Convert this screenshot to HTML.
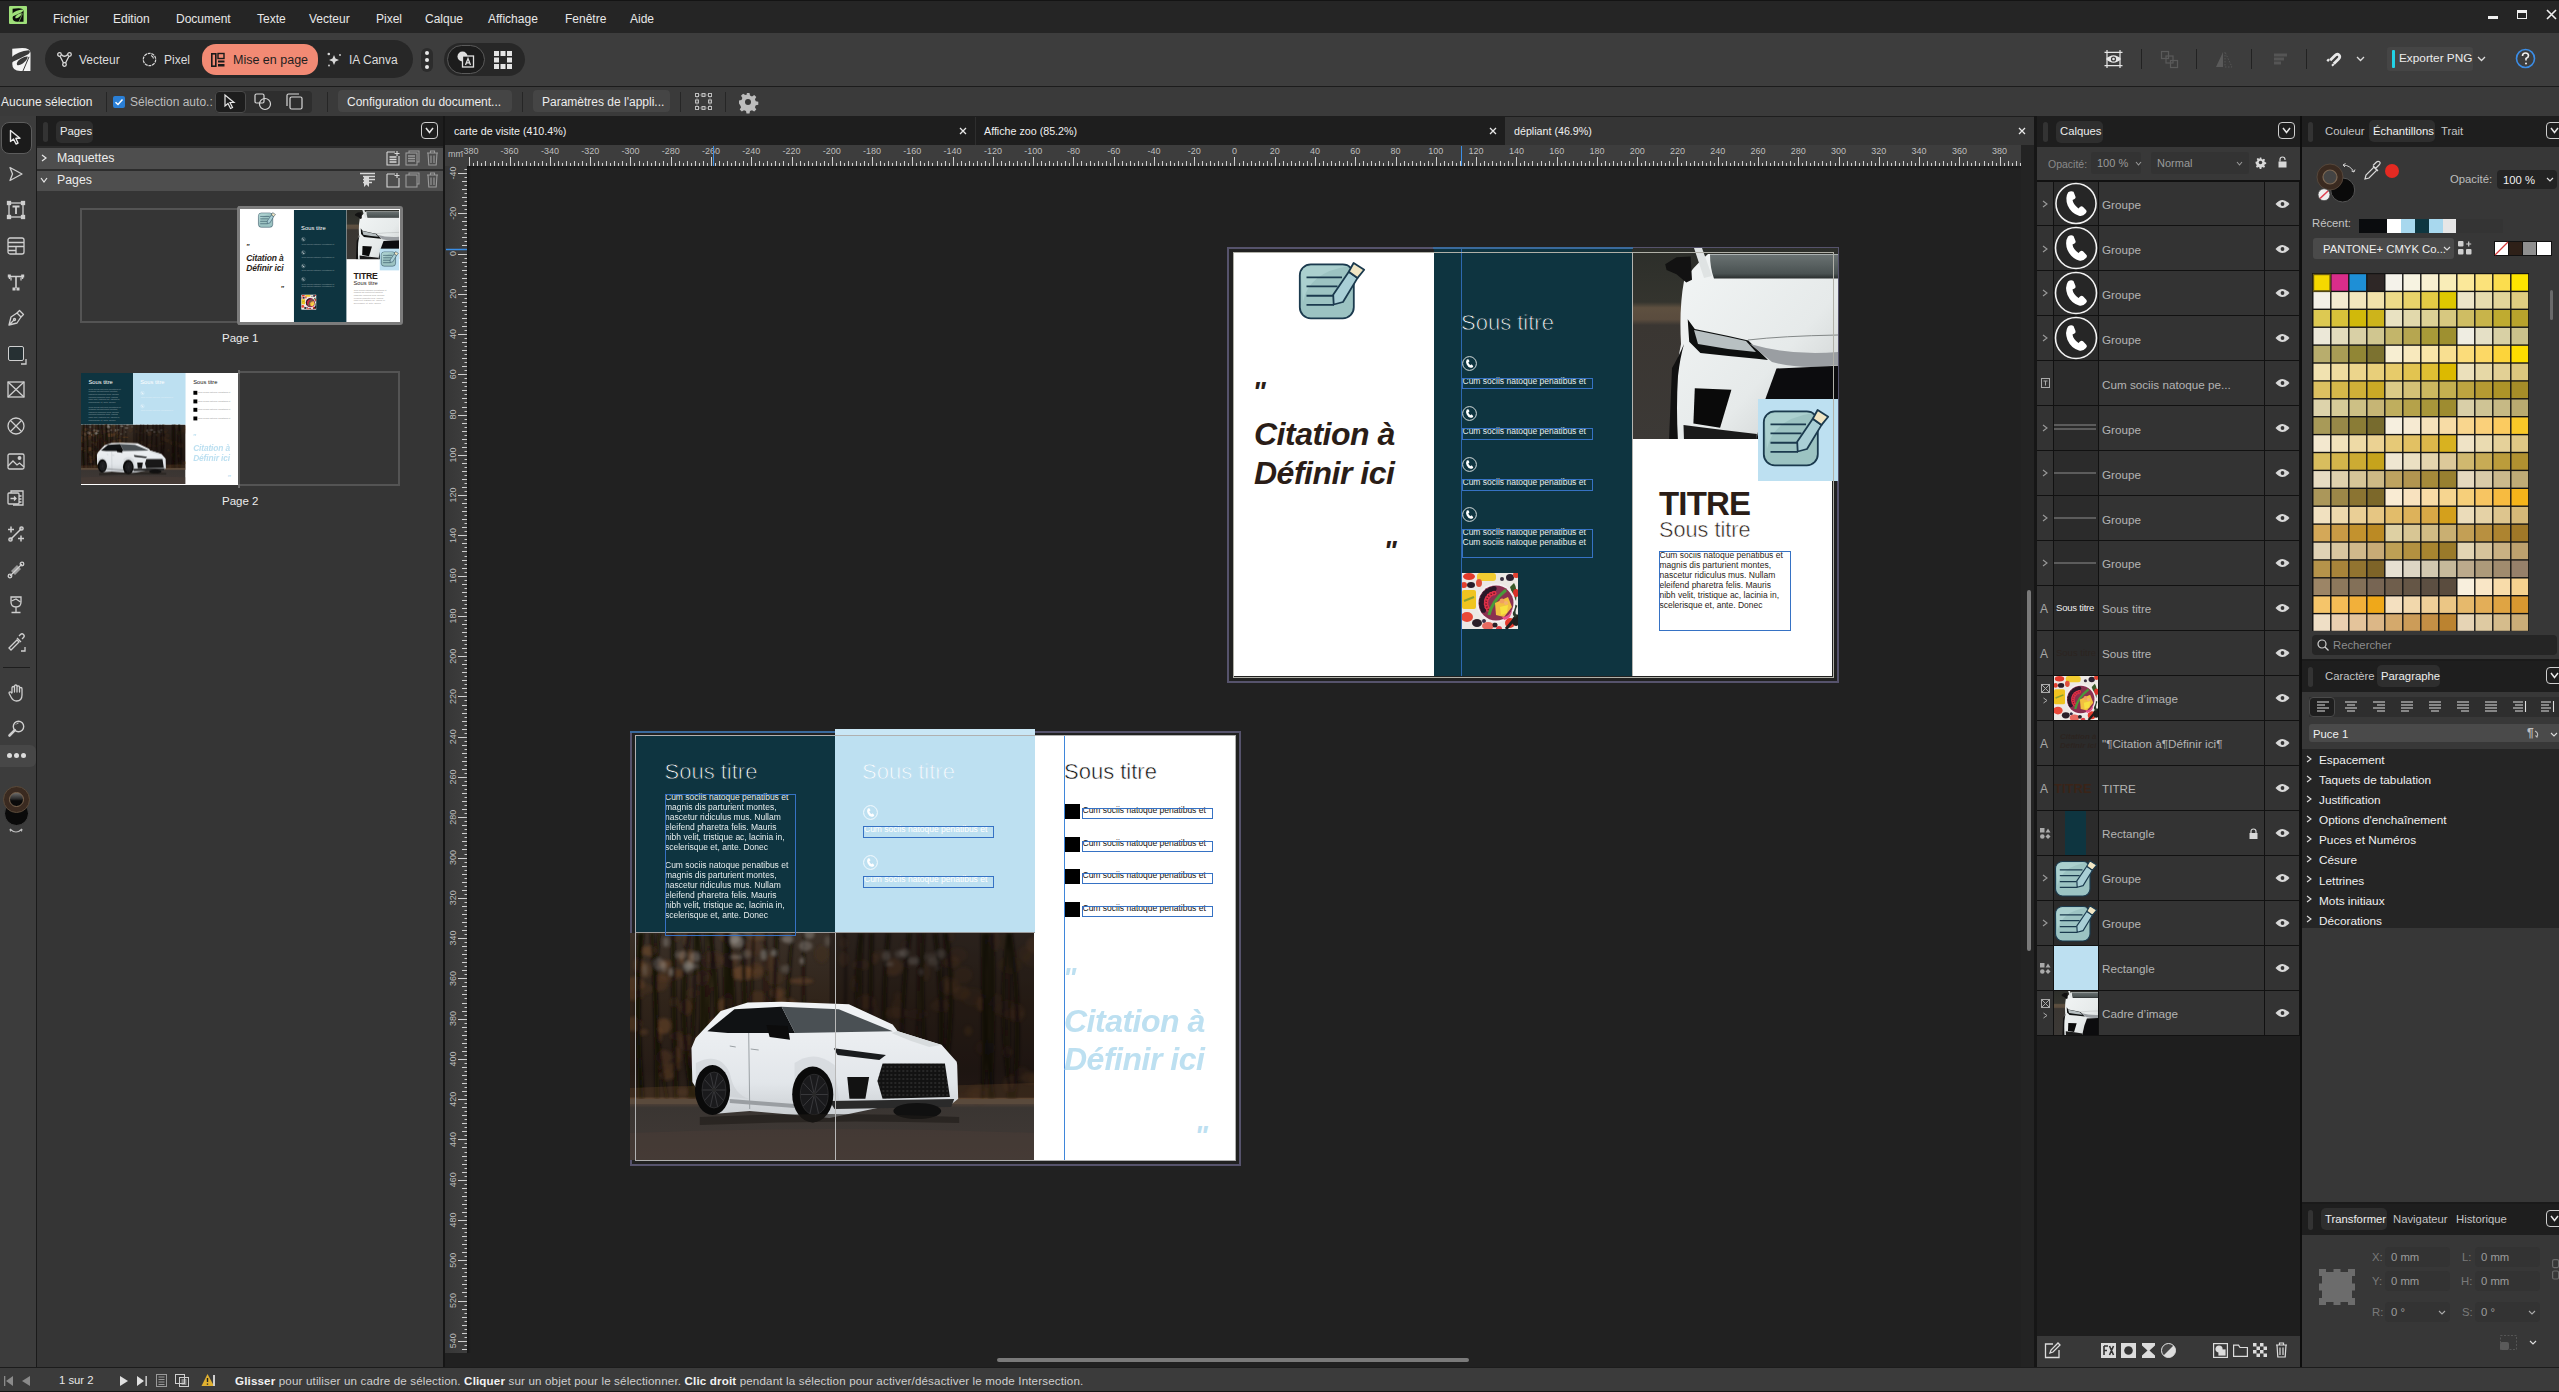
<!DOCTYPE html>
<html><head><meta charset="utf-8">
<style>
*{box-sizing:border-box;margin:0;padding:0}
html,body{width:2559px;height:1392px;overflow:hidden;background:#212121;font-family:"Liberation Sans",sans-serif;color:#e6e6e6}
.a{position:absolute}
.t{position:absolute;white-space:nowrap;line-height:1}
svg{position:absolute;overflow:visible}
.th .sm{opacity:.5}
.th .st{-webkit-text-stroke:0 !important}
</style></head><body>

<!-- title bar -->
<div class="a" style="left:0;top:0;width:2559px;height:33px;background:#252525"></div>
<!-- toolbar -->
<div class="a" style="left:0;top:33px;width:2559px;height:53px;background:#3d3d3d"></div>
<div class="a" style="left:0;top:86px;width:2559px;height:1px;background:#1c1c1c"></div>
<!-- context bar -->
<div class="a" style="left:0;top:87px;width:2559px;height:29px;background:#3a3a3a"></div>
<!-- left tool strip -->
<div class="a" style="left:0;top:116px;width:36px;height:1252px;background:#3c3c3c"></div>
<div class="a" style="left:36px;top:116px;width:1px;height:1252px;background:#1a1a1a"></div>
<!-- pages panel -->
<div class="a" style="left:37px;top:116px;width:406px;height:1252px;background:#353535"></div>
<div class="a" style="left:37px;top:116px;width:406px;height:30px;background:#1e1e1e"></div>
<div class="a" style="left:443px;top:116px;width:2px;height:1252px;background:#161616"></div>
<!-- canvas -->
<div class="a" style="left:445px;top:116px;width:1589px;height:1252px;background:#212121"></div>
<div class="a" style="left:2034px;top:116px;width:3px;height:1252px;background:#161616"></div>
<!-- layers panel -->
<div class="a" style="left:2037px;top:116px;width:263px;height:1252px;background:#1e1e1e"></div>
<div class="a" style="left:2300px;top:116px;width:2px;height:1252px;background:#0e0e0e"></div>
<!-- right panel -->
<div class="a" style="left:2302px;top:116px;width:257px;height:1252px;background:#373737"></div>
<!-- status bar -->
<div class="a" style="left:0;top:1368px;width:2559px;height:24px;background:#373737"></div>

<div class="a" style="left:0;top:0;width:2559px;height:1px;background:#141414"></div>
<!-- ===== TITLE BAR ===== -->
<div class="a" style="left:9px;top:6px;width:18px;height:18px;background:#9fe07a;border-radius:1px"></div>
<svg style="left:9px;top:6px" width="18" height="18" viewBox="0 0 18 18"><g transform="translate(3.6 2.2) scale(0.6 0.59)"><path d="M0 0.8 L10 0 Q18 0 18.3 5 L18.2 23 L8 23 Q0 23 0 16 Q0 12 3 10 L0 11Z" fill="#0a0a0a"/><path d="M-1 9.5 Q6 3.2 16.5 2.3 Q19 3.5 16 6.3 Q8 10.5 -1 14.5Z" fill="#9fe07a"/><path d="M4.8 17 Q3.5 14 8.5 10.8 Q13 8.2 15.5 8.6 Q15 12.5 10.5 15.5 Q7 17.8 4.8 17Z" fill="#9fe07a"/><path d="M10.5 23 L16.8 8.8" stroke="#9fe07a" stroke-width="1"/></g></svg>
<div class="t" style="left:53px;top:13px;font-size:12px;color:#e8e8e8">Fichier</div>
<div class="t" style="left:113px;top:13px;font-size:12px;color:#e8e8e8">Edition</div>
<div class="t" style="left:176px;top:13px;font-size:12px;color:#e8e8e8">Document</div>
<div class="t" style="left:257px;top:13px;font-size:12px;color:#e8e8e8">Texte</div>
<div class="t" style="left:309px;top:13px;font-size:12px;color:#e8e8e8">Vecteur</div>
<div class="t" style="left:376px;top:13px;font-size:12px;color:#e8e8e8">Pixel</div>
<div class="t" style="left:425px;top:13px;font-size:12px;color:#e8e8e8">Calque</div>
<div class="t" style="left:488px;top:13px;font-size:12px;color:#e8e8e8">Affichage</div>
<div class="t" style="left:565px;top:13px;font-size:12px;color:#e8e8e8">Fenêtre</div>
<div class="t" style="left:630px;top:13px;font-size:12px;color:#e8e8e8">Aide</div>
<div class="a" style="left:2488px;top:16px;width:10px;height:3px;background:#f0f0f0"></div>
<div class="a" style="left:2517px;top:10px;width:10px;height:9px;border:1.5px solid #f0f0f0;border-top-width:3px"></div>
<svg style="left:2546px;top:9px" width="11" height="11" viewBox="0 0 11 11"><path d="M1 1L10 10M10 1L1 10" stroke="#f0f0f0" stroke-width="1.6"/></svg>

<!-- ===== TOOLBAR ===== -->
<svg style="left:12px;top:48px" width="19" height="23" viewBox="0 0 18.5 23"><path d="M0 0.8 L10 0 Q18 0 18.3 5 L18.2 23 L8 23 Q0 23 0 16 Q0 12 3 10 L0 11Z" fill="#f4f4f4"/><path d="M-1 9.5 Q6 3.2 16.5 2.3 Q19 3.5 16 6.3 Q8 10.5 -1 14.5Z" fill="#3a3a3a"/><path d="M4.8 17 Q3.5 14 8.5 10.8 Q13 8.2 15.5 8.6 Q15 12.5 10.5 15.5 Q7 17.8 4.8 17Z" fill="#3a3a3a"/><path d="M10.5 23.5 L16.8 8.8" stroke="#3a3a3a" stroke-width="1"/></svg>
<div class="a" style="left:45px;top:40px;width:368px;height:38px;background:#272727;border-radius:19px"></div>
<svg style="left:57px;top:52px" width="15" height="15" viewBox="0 0 15 15" fill="none" stroke="#d8d8d8" stroke-width="1.3"><circle cx="2.5" cy="2.5" r="1.8"/><circle cx="12.5" cy="2.5" r="1.8"/><circle cx="7.5" cy="12.5" r="1.8"/><path d="M3 4.3L6.5 11M12 4.3L8.5 11M4.3 2.5Q7.5 6 10.7 2.5"/></svg>
<div class="t" style="left:79px;top:54px;font-size:12px;color:#dcdcdc">Vecteur</div>
<svg style="left:142px;top:52px" width="15" height="15" viewBox="0 0 15 15" fill="none" stroke="#d8d8d8" stroke-width="1.2"><circle cx="7.5" cy="7.5" r="6.2" stroke-dasharray="3 0.8"/><path d="M9 3.5 A4 4 0 0 1 11.5 6.5"/></svg>
<div class="t" style="left:164px;top:54px;font-size:12px;color:#dcdcdc">Pixel</div>
<div class="a" style="left:202px;top:44px;width:116px;height:31px;background:#f28a74;border-radius:14px"></div>
<svg style="left:211px;top:53px" width="14" height="14" viewBox="0 0 14 14"><rect x="0.8" y="0.8" width="4" height="12.4" fill="none" stroke="#1a1a1a" stroke-width="1.6"/><rect x="7" y="0.5" width="6" height="5" fill="none" stroke="#1a1a1a" stroke-width="1.4"/><rect x="7" y="7.5" width="6.5" height="2" fill="#1a1a1a"/><rect x="7" y="11" width="6.5" height="2.5" fill="#1a1a1a"/></svg>
<div class="t" style="left:233px;top:54px;font-size:12.5px;color:#1e1e1e">Mise en page</div>
<svg style="left:327px;top:52px" width="15" height="15" viewBox="0 0 15 15" fill="#d8d8d8"><path d="M7 3 L8.5 6.5 L12 8 L8.5 9.5 L7 13 L5.5 9.5 L2 8 L5.5 6.5Z"/><circle cx="1.8" cy="2" r="1.3"/><circle cx="13" cy="3" r="0.9"/><circle cx="2" cy="13.5" r="0.9"/></svg>
<div class="t" style="left:349px;top:54px;font-size:12px;color:#dcdcdc">IA Canva</div>
<div class="a" style="left:421px;top:48px;width:12px;height:24px;background:#2c2c2c;border-radius:6px"></div>
<div class="a" style="left:425px;top:51px;width:4px;height:4px;background:#e8e8e8;border-radius:2px"></div>
<div class="a" style="left:425px;top:58px;width:4px;height:4px;background:#e8e8e8;border-radius:2px"></div>
<div class="a" style="left:425px;top:65px;width:4px;height:4px;background:#e8e8e8;border-radius:2px"></div>
<div class="a" style="left:444px;top:43px;width:81px;height:33px;background:#272727;border-radius:17px"></div>
<div class="a" style="left:447px;top:45px;width:38px;height:29px;background:#1c1c1c;border:1px solid #5a5a5a;border-radius:15px"></div>
<svg style="left:456px;top:50px" width="20" height="20" viewBox="0 0 20 20"><circle cx="6.5" cy="6.5" r="5" fill="#e0e0e0"/><rect x="6.5" y="6" width="11" height="11" fill="#1c1c1c" stroke="#e0e0e0" stroke-width="1.3"/><path d="M9.5 15 L12 8.5 L14.5 15 M10.5 12.8 L13.5 12.8" fill="none" stroke="#e0e0e0" stroke-width="1.3"/></svg>
<svg style="left:494px;top:51px" width="18" height="18" viewBox="0 0 18 18" fill="#e4e4e4"><rect x="0" y="0" width="5" height="5"/><rect x="6.5" y="0" width="5" height="5"/><rect x="13" y="0" width="5" height="5"/><rect x="0" y="6.5" width="5" height="5"/><rect x="13" y="6.5" width="5" height="5"/><rect x="0" y="13" width="5" height="5"/><rect x="6.5" y="13" width="5" height="5"/><rect x="13" y="13" width="5" height="5"/></svg>

<!-- right toolbar -->
<svg style="left:2104px;top:50px" width="19" height="18" viewBox="0 0 19 18" fill="none" stroke="#e6e6e6" stroke-width="1.2"><path d="M0.5 2.3H18.5M0.5 15.7H18.5M3 0V18M16 0V18"/><path d="M2 9 Q9.5 1.5 17 9 Q9.5 16.5 2 9Z" fill="#e6e6e6" stroke="none"/><circle cx="9.5" cy="9" r="2.6" fill="#3a3a3a" stroke="none"/><circle cx="9.5" cy="9" r="1.3" fill="#e6e6e6" stroke="none"/></svg>
<div class="a" style="left:2141px;top:49px;width:1px;height:20px;background:#222"></div>
<svg style="left:2161px;top:51px" width="17" height="17" viewBox="0 0 17 17" fill="none" stroke="#5a5a5a" stroke-width="1.2"><rect x="0.5" y="0.5" width="7" height="7"/><rect x="5" y="5" width="7" height="7"/><rect x="9.5" y="9.5" width="7" height="7"/></svg>
<div class="a" style="left:2196px;top:49px;width:1px;height:20px;background:#222"></div>
<svg style="left:2215px;top:51px" width="18" height="17" viewBox="0 0 18 17"><path d="M8 1 L8 16 L1 16Z" fill="#5a5a5a"/><path d="M10 1 L10 16 L17 16Z" fill="none" stroke="#555" stroke-dasharray="1.5 1.5"/></svg>
<div class="a" style="left:2251px;top:49px;width:1px;height:20px;background:#222"></div>
<svg style="left:2274px;top:53px" width="13" height="12" viewBox="0 0 13 12" fill="#555"><rect x="0" y="0.5" width="13" height="3"/><rect x="0" y="4.5" width="10" height="3"/><rect x="0" y="8.5" width="7" height="3"/></svg>
<div class="a" style="left:2306px;top:49px;width:1px;height:20px;background:#222"></div>
<svg style="left:2326px;top:51px" width="16" height="15" viewBox="0 0 16 15" fill="none" stroke="#e8e8e8" stroke-width="2.8" stroke-linecap="butt"><path d="M4.2 9.2 L9 4.4 Q11.2 2.2 13 4 Q14.8 5.8 12.6 8 L7.8 12.8"/><path d="M1.3 8.3 L3 10 M6.2 13.2 L7.6 14.6" stroke-width="2.6"/></svg>
<svg style="left:2356px;top:56px" width="9" height="6" viewBox="0 0 9 6" fill="none" stroke="#ddd" stroke-width="1.3"><path d="M1 1L4.5 4.5L8 1"/></svg>
<div class="a" style="left:2387px;top:47px;width:86px;height:24px;background:#454545;border-radius:3px"></div>
<div class="a" style="left:2392px;top:50px;width:3px;height:18px;background:#22d3e6;border-radius:1px"></div>
<div class="t" style="left:2399px;top:53px;font-size:11.8px;color:#ececec">Exporter PNG</div>
<svg style="left:2477px;top:56px" width="9" height="6" viewBox="0 0 9 6" fill="none" stroke="#ddd" stroke-width="1.3"><path d="M1 1L4.5 4.5L8 1"/></svg>
<svg style="left:2515px;top:48px" width="21" height="21" viewBox="0 0 21 21"><circle cx="10.5" cy="10.5" r="9" fill="none" stroke="#3b8de6" stroke-width="1.6"/><path d="M7.5 8 Q7.5 5 10.5 5 Q13.5 5 13.5 7.8 Q13.5 9.5 11 10.5 L11 12.5" fill="none" stroke="#f0f0f0" stroke-width="1.6"/><circle cx="11" cy="15.5" r="1" fill="#f0f0f0"/></svg>

<!-- ===== CONTEXT BAR ===== -->
<div class="t" style="left:1px;top:96px;font-size:12px;color:#ececec">Aucune sélection</div>
<div class="a" style="left:106px;top:92px;width:1px;height:20px;background:#262626"></div>
<div class="a" style="left:113px;top:96px;width:12px;height:12px;background:#2a7fd6;border-radius:2px"></div>
<svg style="left:113px;top:96px" width="12" height="12" viewBox="0 0 12 12"><path d="M2.5 6.2L5 8.5L9.5 3.5" fill="none" stroke="#fff" stroke-width="1.5"/></svg>
<div class="t" style="left:130px;top:96px;font-size:12px;color:#bdbdbd">Sélection auto.:</div>
<div class="a" style="left:215px;top:91px;width:97px;height:22px;background:#2e2e2e;border-radius:4px"></div>
<div class="a" style="left:215px;top:91px;width:31px;height:22px;background:#1d1d1d;border:1px solid #4a4a4a;border-radius:4px"></div>
<svg style="left:224px;top:94px" width="13" height="16" viewBox="0 0 13 16" fill="none" stroke="#e8e8e8" stroke-width="1.2"><path d="M1 1 L1 12 L4 9.5 L6.5 14.5 L8.5 13.5 L6 8.5 L10 8.5Z"/></svg>
<svg style="left:254px;top:93px" width="18" height="18" viewBox="0 0 18 18" fill="none" stroke="#d8d8d8" stroke-width="1.2"><rect x="1" y="1" width="9" height="9" rx="1.5"/><circle cx="11" cy="11" r="5.5"/></svg>
<svg style="left:286px;top:93px" width="18" height="18" viewBox="0 0 18 18" fill="none" stroke="#d8d8d8" stroke-width="1.2"><rect x="4" y="4" width="12" height="12" rx="1.5"/><path d="M1 13 V2.5 Q1 1 2.5 1 H13"/></svg>
<div class="a" style="left:327px;top:92px;width:1px;height:20px;background:#262626"></div>
<div class="a" style="left:338px;top:90px;width:174px;height:22px;background:#454545;border-radius:4px"></div>
<div class="t" style="left:347px;top:96px;font-size:12px;color:#ececec">Configuration du document...</div>
<div class="a" style="left:522px;top:92px;width:1px;height:20px;background:#262626"></div>
<div class="a" style="left:533px;top:90px;width:137px;height:22px;background:#454545;border-radius:4px"></div>
<div class="t" style="left:542px;top:96px;font-size:12px;color:#ececec">Paramètres de l'appli...</div>
<div class="a" style="left:680px;top:92px;width:1px;height:20px;background:#262626"></div>
<svg style="left:695px;top:93px" width="17" height="17" viewBox="0 0 17 17" fill="none" stroke="#bdbdbd" stroke-width="1"><rect x="0.5" y="0.5" width="3" height="3"/><rect x="7" y="0.5" width="3" height="3"/><rect x="13.5" y="0.5" width="3" height="3"/><rect x="0.5" y="7" width="3" height="3"/><rect x="13.5" y="7" width="3" height="3"/><rect x="0.5" y="13.5" width="3" height="3"/><rect x="7" y="13.5" width="3" height="3"/><rect x="13.5" y="13.5" width="3" height="3"/><path d="M2 3.5V13.5M15 3.5V13.5M3.5 2H13.5M3.5 15H13.5" stroke-dasharray="1 1"/></svg>
<div class="a" style="left:725px;top:92px;width:1px;height:20px;background:#262626"></div>
<svg style="left:738px;top:92px" width="20" height="20" viewBox="0 0 20 20"><path d="M8.5 1h3l.5 2.5 2 .9 2.2-1.4 2.1 2.1-1.4 2.2.9 2 2.5.5v3l-2.5.5-.9 2 1.4 2.2-2.1 2.1-2.2-1.4-2 .9-.5 2.5h-3l-.5-2.5-2-.9-2.2 1.4-2.1-2.1 1.4-2.2-.9-2L1 11.5v-3l2.5-.5.9-2L3 3.8 5.1 1.7l2.2 1.4 2-.9z" fill="#bdbdbd"/><circle cx="10" cy="10" r="3" fill="#373737"/></svg>

<!-- ===== LEFT TOOLS ===== -->
<div class="a" style="left:1px;top:122px;width:31px;height:32px;background:#1b1b1b;border:1px solid #5c5c5c;border-radius:8px"></div>
<svg style="left:9px;top:129px" width="14" height="17" viewBox="0 0 14 17" fill="none" stroke="#e8e8e8" stroke-width="1.4" stroke-linejoin="round"><path d="M1.5 1.5 L1.5 12.5 L4.5 10 L7 15 L9 14 L6.8 9.3 L11 9.3Z"/></svg>
<svg style="left:8px;top:166px" width="16" height="16" viewBox="0 0 16 16" fill="none" stroke="#cfcfcf" stroke-width="1.3" stroke-linejoin="round"><path d="M2 1.5 L14 8 L2 14.5 L4.5 8Z"/></svg>
<svg style="left:7px;top:201px" width="18" height="18" viewBox="0 0 18 18" fill="none" stroke="#cfcfcf" stroke-width="1.3"><rect x="2" y="2" width="14" height="14"/><path d="M5.5 5.5H12.5M9 5.5V13" stroke-width="1.8"/><rect x="0.5" y="0.5" width="3" height="3" fill="#cfcfcf"/><rect x="14.5" y="0.5" width="3" height="3" fill="#cfcfcf"/><rect x="0.5" y="14.5" width="3" height="3" fill="#cfcfcf"/><rect x="14.5" y="14.5" width="3" height="3" fill="#cfcfcf"/></svg>
<svg style="left:7px;top:237px" width="18" height="18" viewBox="0 0 18 18" fill="none" stroke="#cfcfcf" stroke-width="1.3"><rect x="1" y="1" width="16" height="16" rx="2"/><path d="M1 5.5H17M1 9.5H17M1 13.5H9M9 9.5V17"/></svg>
<svg style="left:7px;top:273px" width="18" height="18" viewBox="0 0 18 18" fill="none" stroke="#cfcfcf" stroke-width="1.6"><path d="M2.5 3.5H15.5M9 3.5V15"/><path d="M2.5 2V6M15.5 2V6" stroke-width="1.4"/><rect x="0.8" y="1.5" width="3" height="3" fill="#cfcfcf" stroke="none"/><rect x="14.2" y="1.5" width="3" height="3" fill="#cfcfcf" stroke="none"/><rect x="5.5" y="14.5" width="3" height="3" fill="#cfcfcf" stroke="none"/><rect x="9.5" y="14.5" width="3" height="3" fill="#cfcfcf" stroke="none"/><path d="M4 4.5V7.5M14 4.5V7.5" stroke-width="1.2"/></svg>
<svg style="left:7px;top:309px" width="18" height="18" viewBox="0 0 18 18" fill="none" stroke="#cfcfcf" stroke-width="1.3" stroke-linejoin="round"><path d="M2 16 L4 8 L10 4 L14 8 L10 14Z M2 16 L7 11"/><path d="M10 4 L12.5 1.5 L16.5 5.5 L14 8"/><circle cx="7.5" cy="10.5" r="1"/></svg>
<div class="a" style="left:8px;top:346px;width:16px;height:15px;background:#263033;border:1.5px solid #cfcfcf;border-radius:2px"></div>
<svg style="left:20px;top:358px" width="7" height="7" viewBox="0 0 7 7" fill="none" stroke="#cfcfcf" stroke-width="1.3"><path d="M6 1V6H1"/></svg>
<svg style="left:7px;top:381px" width="18" height="17" viewBox="0 0 18 17" fill="none" stroke="#cfcfcf" stroke-width="1.3"><rect x="1" y="1" width="16" height="15"/><path d="M1 1L17 16M17 1L1 16"/></svg>
<svg style="left:7px;top:417px" width="18" height="18" viewBox="0 0 18 18" fill="none" stroke="#cfcfcf" stroke-width="1.3"><circle cx="9" cy="9" r="8"/><path d="M3.5 3.5L14.5 14.5M14.5 3.5L3.5 14.5"/></svg>
<svg style="left:7px;top:453px" width="18" height="17" viewBox="0 0 18 17" fill="none" stroke="#cfcfcf" stroke-width="1.3"><rect x="1" y="1" width="16" height="15" rx="1.5"/><path d="M1 13 L6 8 L10 12 L12.5 10 L17 14"/><circle cx="12.5" cy="5" r="1.3" fill="#cfcfcf"/></svg>
<svg style="left:7px;top:489px" width="18" height="18" viewBox="0 0 18 18" fill="none" stroke="#cfcfcf" stroke-width="1.3"><path d="M4 4 V2 H16 V16 H6"/><rect x="1" y="4" width="11" height="11" rx="1"/><path d="M3.5 9.5H8.5M7 7.5L9 9.5L7 11.5M12 7H14.5M12 10H14.5M12 13H14.5"/></svg>
<svg style="left:7px;top:525px" width="18" height="18" viewBox="0 0 18 18" fill="none" stroke="#cfcfcf" stroke-width="1.5"><path d="M1 4.5H7M4 1.5V7.5M11 13.5H17M14 10.5V16.5M3.5 14.5L14.5 3.5"/><circle cx="3.5" cy="14.5" r="1.6"/><circle cx="14.5" cy="3.5" r="1.6"/></svg>
<svg style="left:7px;top:561px" width="18" height="18" viewBox="0 0 18 18"><path d="M4 10 L10 4 L14 8 L8 14Z" fill="#9a9a9a"/><path d="M3 15L15 3" stroke="#cfcfcf" stroke-width="1.3"/><circle cx="3" cy="15" r="1.8" fill="none" stroke="#cfcfcf" stroke-width="1.3"/><circle cx="15" cy="3" r="1.8" fill="none" stroke="#cfcfcf" stroke-width="1.3"/></svg>
<svg style="left:8px;top:596px" width="16" height="18" viewBox="0 0 16 18" fill="none" stroke="#cfcfcf" stroke-width="1.3"><path d="M3 1 H13 V6 Q13 11 8 11 Q3 11 3 6Z M8 11 V16.5 M3.5 16.5 H12.5"/><path d="M3.5 5 L8 3 L12.5 6" /></svg>
<svg style="left:7px;top:632px" width="20" height="20" viewBox="0 0 20 20" fill="none" stroke="#cfcfcf" stroke-width="1.3"><path d="M2 16 L10 8 L12 10 L4 18 Z"/><path d="M10 6 L14 10 M12 4 L13.5 2.5 Q15 1 16.5 2.5 Q18 4 16.5 5.5 L15 7"/><path d="M18 15 V19 H14" /></svg>
<div class="a" style="left:3px;top:667px;width:27px;height:1px;background:#1e1e1e"></div>
<svg style="left:8px;top:684px" width="17" height="18" viewBox="0 0 17 18" fill="none" stroke="#cfcfcf" stroke-width="1.3" stroke-linejoin="round"><path d="M4 9 V4 Q4 2.5 5.3 2.5 Q6.5 2.5 6.5 4 V8 V2.5 Q6.5 1 7.8 1 Q9 1 9 2.5 V8 V3 Q9 1.8 10.3 1.8 Q11.5 1.8 11.5 3 V8 V4.5 Q11.5 3.5 12.8 3.5 Q14 3.5 14 4.8 V11 Q14 17 8.5 17 Q5 17 3 13 L1.2 9.5 Q0.8 8 2 7.8 Q3 7.6 4 9.5"/></svg>
<svg style="left:8px;top:720px" width="17" height="17" viewBox="0 0 17 17" fill="none" stroke="#cfcfcf" stroke-width="1.4"><circle cx="10.5" cy="6.5" r="5.2"/><path d="M6.8 10.2 L1.5 15.5" stroke-width="2.6" stroke-linecap="round"/><path d="M8 4.5 Q9 3 10.5 3" stroke-width="1"/></svg>
<div class="a" style="left:0;top:745px;width:36px;height:22px;background:#474747;border-radius:0 6px 6px 0"></div>
<div class="a" style="left:7px;top:753px;width:5px;height:5px;border-radius:3px;background:#dcdcdc"></div>
<div class="a" style="left:14px;top:753px;width:5px;height:5px;border-radius:3px;background:#dcdcdc"></div>
<div class="a" style="left:21px;top:753px;width:5px;height:5px;border-radius:3px;background:#dcdcdc"></div>
<div class="a" style="left:4px;top:801px;width:25px;height:25px;border-radius:13px;background:#0a0a0a;border:1px solid #404040"></div>
<div class="a" style="left:3px;top:786px;width:27px;height:27px;border-radius:14px;background:#3a2a20;border:1px solid #5a4a3a"></div>
<div class="a" style="left:9px;top:792px;width:15px;height:15px;border-radius:8px;background:linear-gradient(180deg,#6a6a6a 0%,#2a2a2a 45%,#0a0a0a 60%);border:1.5px solid #7a6550"></div>
<svg style="left:9px;top:827px" width="14" height="8" viewBox="0 0 14 8" fill="none" stroke="#bdbdbd" stroke-width="1.1"><path d="M1 2 Q7 8 13 2 M1 2 L1.5 4.5 M13 2 L12.5 4.5"/></svg>

<!-- ===== PAGES PANEL ===== -->
<div class="a" style="left:43px;top:122px;width:5px;height:20px;background:#333;border-radius:3px"></div>
<div class="a" style="left:56px;top:121px;width:37px;height:22px;background:#2e2e2e;border-radius:5px"></div>
<div class="t" style="left:60px;top:126px;font-size:11.3px;color:#ececec">Pages</div>
<div class="a" style="left:421px;top:122px;width:17px;height:17px;border:1.3px solid #cfcfcf;border-radius:4px"></div>
<svg style="left:425px;top:127px" width="9" height="7" viewBox="0 0 9 7" fill="none" stroke="#e8e8e8" stroke-width="1.5"><path d="M1 1L4.5 5.5L8 1"/></svg>
<div class="a" style="left:37px;top:146px;width:406px;height:2px;background:#2a2a2a"></div>
<div class="a" style="left:37px;top:148px;width:406px;height:21px;background:#4e4e4e"></div>
<div class="a" style="left:37px;top:169px;width:406px;height:2px;background:#2c2c2c"></div>
<div class="a" style="left:37px;top:171px;width:406px;height:20px;background:#4e4e4e"></div>
<svg style="left:41px;top:154px" width="6" height="8" viewBox="0 0 6 8" fill="none" stroke="#e8e8e8" stroke-width="1.2"><path d="M1 1L5 4L1 7"/></svg>
<div class="t" style="left:57px;top:152px;font-size:12.3px;color:#ececec">Maquettes</div>
<svg style="left:40px;top:177px" width="8" height="6" viewBox="0 0 8 6" fill="none" stroke="#e8e8e8" stroke-width="1.2"><path d="M1 1L4 5L7 1"/></svg>
<div class="t" style="left:57px;top:174px;font-size:12.3px;color:#ececec">Pages</div>
<svg style="left:386px;top:150px" width="15" height="16" viewBox="0 0 15 16" fill="none" stroke="#d8d8d8" stroke-width="1.1"><path d="M1 2H9M1 2V15H13V6"/><path d="M11 1V6M8.5 3.5H13.5"/><path d="M3.5 7H10.5M3.5 9.5H10.5M3.5 12H10.5" stroke-width="1.4"/></svg>
<svg style="left:405px;top:150px" width="15" height="16" viewBox="0 0 15 16" fill="none" stroke="#9a9a9a" stroke-width="1.1"><path d="M4 3V1H14V12H12"/><rect x="1" y="3" width="11" height="12"/><path d="M3 6H10M3 8.5H10M3 11H10" stroke-width="1.4"/></svg>
<svg style="left:426px;top:150px" width="13" height="16" viewBox="0 0 13 16" fill="none" stroke="#9a9a9a" stroke-width="1.1"><path d="M1 3H12M4.5 3V1H8.5V3M2 3L2.8 15H10.2L11 3M5 5.5V13M8 5.5V13"/></svg>
<svg style="left:359px;top:172px" width="17" height="16" viewBox="0 0 17 16" fill="none" stroke="#d8d8d8" stroke-width="1.4"><path d="M1 1.5H16M4 4.5H16M4 7.5H16M4 10.5H13"/><path d="M5 5V15L7.5 12.5L10 15V5Z" fill="#d8d8d8" stroke="none"/></svg>
<svg style="left:386px;top:172px" width="15" height="16" viewBox="0 0 15 16" fill="none" stroke="#d8d8d8" stroke-width="1.1"><path d="M1 2H9M1 2V15H13V6"/><path d="M11 1V6M8.5 3.5H13.5"/></svg>
<svg style="left:405px;top:172px" width="15" height="16" viewBox="0 0 15 16" fill="none" stroke="#9a9a9a" stroke-width="1.1"><path d="M4 3V1H14V12H12"/><rect x="1" y="3" width="11" height="12"/></svg>
<svg style="left:426px;top:172px" width="13" height="16" viewBox="0 0 13 16" fill="none" stroke="#9a9a9a" stroke-width="1.1"><path d="M1 3H12M4.5 3V1H8.5V3M2 3L2.8 15H10.2L11 3M5 5.5V13M8 5.5V13"/></svg>
<!-- page thumbs -->
<div class="a" style="left:80px;top:208px;width:159px;height:115px;border:2px solid #545454"></div>
<div class="a" style="left:238px;top:206px;width:2px;height:4px;background:#6a6a6a"></div>
<div class="a" style="left:238px;top:321px;width:2px;height:4px;background:#6a6a6a"></div>
<div class="a" style="left:237px;top:206px;width:166px;height:119px;border:3px solid #7c7c7c;border-radius:3px;background:#fff"></div>
<div class="t" style="left:222px;top:333px;font-size:11.5px;color:#ececec">Page 1</div>
<div class="a" style="left:238px;top:371px;width:162px;height:115px;border:2px solid #545454"></div>
<div class="a" style="left:238px;top:370px;width:2px;height:4px;background:#6a6a6a"></div>
<div class="a" style="left:238px;top:484px;width:2px;height:4px;background:#6a6a6a"></div>
<div class="t" style="left:222px;top:496px;font-size:11.5px;color:#ececec">Page 2</div>
<!-- ===== CANVAS ===== -->
<div class="a" style="left:445px;top:116px;width:1589px;height:29px;background:#1e1e1e"></div>
<div class="a" style="left:1505px;top:117px;width:529px;height:28px;background:#353535"></div>
<div class="a" style="left:975px;top:117px;width:1px;height:28px;background:#2e2e2e"></div>
<div class="t" style="left:454px;top:126px;font-size:10.7px;color:#f0f0f0">carte de visite (410.4%)</div>
<div class="t" style="left:984px;top:126px;font-size:10.7px;color:#f0f0f0">Affiche zoo (85.2%)</div>
<div class="t" style="left:1514px;top:126px;font-size:10.7px;color:#f0f0f0">dépliant (46.9%)</div>
<svg style="left:959px;top:127px" width="8" height="8" viewBox="0 0 8 8"><path d="M1 1L7 7M7 1L1 7" stroke="#e8e8e8" stroke-width="1.3"/></svg>
<svg style="left:1489px;top:127px" width="8" height="8" viewBox="0 0 8 8"><path d="M1 1L7 7M7 1L1 7" stroke="#e8e8e8" stroke-width="1.3"/></svg>
<svg style="left:2018px;top:127px" width="8" height="8" viewBox="0 0 8 8"><path d="M1 1L7 7M7 1L1 7" stroke="#e8e8e8" stroke-width="1.3"/></svg>
<div class="a" style="left:445px;top:145px;width:1576px;height:21px;background:#3d3d3d"></div>
<div class="a" style="left:2021px;top:145px;width:13px;height:1223px;background:#232323"></div>
<div class="a" style="left:445px;top:166px;width:22px;height:1187px;background:#3a3a3a"></div>
<div class="a" style="left:445px;top:166px;width:22px;height:1187px;background:linear-gradient(90deg,#363636,#3e3e3e)"></div>
<div class="t" style="left:448px;top:150px;font-size:9px;color:#bdbdbd">mm</div>
<svg style="left:0;top:0" width="2559" height="1392" viewBox="0 0 2559 1392">
<path d="M469.5 157V166 M473.5 163V166 M477.5 161V166 M481.5 163V166 M485.5 161V166 M490.5 163V166 M494.5 161V166 M498.5 163V166 M502.5 161V166 M506.5 163V166 M510.5 157V166 M514.5 163V166 M518.5 161V166 M522.5 163V166 M526.5 161V166 M530.5 163V166 M534.5 161V166 M538.5 163V166 M542.5 161V166 M546.5 163V166 M550.5 157V166 M554.5 163V166 M558.5 161V166 M562.5 163V166 M566.5 161V166 M570.5 163V166 M574.5 161V166 M578.5 163V166 M582.5 161V166 M586.5 163V166 M590.5 157V166 M594.5 163V166 M598.5 161V166 M602.5 163V166 M606.5 161V166 M610.5 163V166 M614.5 161V166 M618.5 163V166 M622.5 161V166 M626.5 163V166 M630.5 157V166 M634.5 163V166 M639.5 161V166 M643.5 163V166 M647.5 161V166 M651.5 163V166 M655.5 161V166 M659.5 163V166 M663.5 161V166 M667.5 163V166 M671.5 157V166 M675.5 163V166 M679.5 161V166 M683.5 163V166 M687.5 161V166 M691.5 163V166 M695.5 161V166 M699.5 163V166 M703.5 161V166 M707.5 163V166 M711.5 157V166 M715.5 163V166 M719.5 161V166 M723.5 163V166 M727.5 161V166 M731.5 163V166 M735.5 161V166 M739.5 163V166 M743.5 161V166 M747.5 163V166 M751.5 157V166 M755.5 163V166 M759.5 161V166 M763.5 163V166 M767.5 161V166 M771.5 163V166 M775.5 161V166 M779.5 163V166 M783.5 161V166 M788.5 163V166 M792.5 157V166 M796.5 163V166 M800.5 161V166 M804.5 163V166 M808.5 161V166 M812.5 163V166 M816.5 161V166 M820.5 163V166 M824.5 161V166 M828.5 163V166 M832.5 157V166 M836.5 163V166 M840.5 161V166 M844.5 163V166 M848.5 161V166 M852.5 163V166 M856.5 161V166 M860.5 163V166 M864.5 161V166 M868.5 163V166 M872.5 157V166 M876.5 163V166 M880.5 161V166 M884.5 163V166 M888.5 161V166 M892.5 163V166 M896.5 161V166 M900.5 163V166 M904.5 161V166 M908.5 163V166 M912.5 157V166 M916.5 163V166 M920.5 161V166 M924.5 163V166 M928.5 161V166 M932.5 163V166 M937.5 161V166 M941.5 163V166 M945.5 161V166 M949.5 163V166 M953.5 157V166 M957.5 163V166 M961.5 161V166 M965.5 163V166 M969.5 161V166 M973.5 163V166 M977.5 161V166 M981.5 163V166 M985.5 161V166 M989.5 163V166 M993.5 157V166 M997.5 163V166 M1001.5 161V166 M1005.5 163V166 M1009.5 161V166 M1013.5 163V166 M1017.5 161V166 M1021.5 163V166 M1025.5 161V166 M1029.5 163V166 M1033.5 157V166 M1037.5 163V166 M1041.5 161V166 M1045.5 163V166 M1049.5 161V166 M1053.5 163V166 M1057.5 161V166 M1061.5 163V166 M1065.5 161V166 M1069.5 163V166 M1073.5 157V166 M1077.5 163V166 M1081.5 161V166 M1086.5 163V166 M1090.5 161V166 M1094.5 163V166 M1098.5 161V166 M1102.5 163V166 M1106.5 161V166 M1110.5 163V166 M1114.5 157V166 M1118.5 163V166 M1122.5 161V166 M1126.5 163V166 M1130.5 161V166 M1134.5 163V166 M1138.5 161V166 M1142.5 163V166 M1146.5 161V166 M1150.5 163V166 M1154.5 157V166 M1158.5 163V166 M1162.5 161V166 M1166.5 163V166 M1170.5 161V166 M1174.5 163V166 M1178.5 161V166 M1182.5 163V166 M1186.5 161V166 M1190.5 163V166 M1194.5 157V166 M1198.5 163V166 M1202.5 161V166 M1206.5 163V166 M1210.5 161V166 M1214.5 163V166 M1218.5 161V166 M1222.5 163V166 M1226.5 161V166 M1230.5 163V166 M1234.5 157V166 M1239.5 163V166 M1243.5 161V166 M1247.5 163V166 M1251.5 161V166 M1255.5 163V166 M1259.5 161V166 M1263.5 163V166 M1267.5 161V166 M1271.5 163V166 M1275.5 157V166 M1279.5 163V166 M1283.5 161V166 M1287.5 163V166 M1291.5 161V166 M1295.5 163V166 M1299.5 161V166 M1303.5 163V166 M1307.5 161V166 M1311.5 163V166 M1315.5 157V166 M1319.5 163V166 M1323.5 161V166 M1327.5 163V166 M1331.5 161V166 M1335.5 163V166 M1339.5 161V166 M1343.5 163V166 M1347.5 161V166 M1351.5 163V166 M1355.5 157V166 M1359.5 163V166 M1363.5 161V166 M1367.5 163V166 M1371.5 161V166 M1375.5 163V166 M1379.5 161V166 M1383.5 163V166 M1388.5 161V166 M1392.5 163V166 M1396.5 157V166 M1400.5 163V166 M1404.5 161V166 M1408.5 163V166 M1412.5 161V166 M1416.5 163V166 M1420.5 161V166 M1424.5 163V166 M1428.5 161V166 M1432.5 163V166 M1436.5 157V166 M1440.5 163V166 M1444.5 161V166 M1448.5 163V166 M1452.5 161V166 M1456.5 163V166 M1460.5 161V166 M1464.5 163V166 M1468.5 161V166 M1472.5 163V166 M1476.5 157V166 M1480.5 163V166 M1484.5 161V166 M1488.5 163V166 M1492.5 161V166 M1496.5 163V166 M1500.5 161V166 M1504.5 163V166 M1508.5 161V166 M1512.5 163V166 M1516.5 157V166 M1520.5 163V166 M1524.5 161V166 M1528.5 163V166 M1532.5 161V166 M1537.5 163V166 M1541.5 161V166 M1545.5 163V166 M1549.5 161V166 M1553.5 163V166 M1557.5 157V166 M1561.5 163V166 M1565.5 161V166 M1569.5 163V166 M1573.5 161V166 M1577.5 163V166 M1581.5 161V166 M1585.5 163V166 M1589.5 161V166 M1593.5 163V166 M1597.5 157V166 M1601.5 163V166 M1605.5 161V166 M1609.5 163V166 M1613.5 161V166 M1617.5 163V166 M1621.5 161V166 M1625.5 163V166 M1629.5 161V166 M1633.5 163V166 M1637.5 157V166 M1641.5 163V166 M1645.5 161V166 M1649.5 163V166 M1653.5 161V166 M1657.5 163V166 M1661.5 161V166 M1665.5 163V166 M1669.5 161V166 M1673.5 163V166 M1677.5 157V166 M1681.5 163V166 M1686.5 161V166 M1690.5 163V166 M1694.5 161V166 M1698.5 163V166 M1702.5 161V166 M1706.5 163V166 M1710.5 161V166 M1714.5 163V166 M1718.5 157V166 M1722.5 163V166 M1726.5 161V166 M1730.5 163V166 M1734.5 161V166 M1738.5 163V166 M1742.5 161V166 M1746.5 163V166 M1750.5 161V166 M1754.5 163V166 M1758.5 157V166 M1762.5 163V166 M1766.5 161V166 M1770.5 163V166 M1774.5 161V166 M1778.5 163V166 M1782.5 161V166 M1786.5 163V166 M1790.5 161V166 M1794.5 163V166 M1798.5 157V166 M1802.5 163V166 M1806.5 161V166 M1810.5 163V166 M1814.5 161V166 M1818.5 163V166 M1822.5 161V166 M1826.5 163V166 M1830.5 161V166 M1835.5 163V166 M1839.5 157V166 M1843.5 163V166 M1847.5 161V166 M1851.5 163V166 M1855.5 161V166 M1859.5 163V166 M1863.5 161V166 M1867.5 163V166 M1871.5 161V166 M1875.5 163V166 M1879.5 157V166 M1883.5 163V166 M1887.5 161V166 M1891.5 163V166 M1895.5 161V166 M1899.5 163V166 M1903.5 161V166 M1907.5 163V166 M1911.5 161V166 M1915.5 163V166 M1919.5 157V166 M1923.5 163V166 M1927.5 161V166 M1931.5 163V166 M1935.5 161V166 M1939.5 163V166 M1943.5 161V166 M1947.5 163V166 M1951.5 161V166 M1955.5 163V166 M1959.5 157V166 M1963.5 163V166 M1967.5 161V166 M1971.5 163V166 M1975.5 161V166 M1979.5 163V166 M1984.5 161V166 M1988.5 163V166 M1992.5 161V166 M1996.5 163V166 M2000.5 157V166 M2004.5 163V166 M2008.5 161V166 M2012.5 163V166 M2016.5 161V166 M2020.5 163V166" stroke="#cfcfcf" stroke-width="1"/>
<text x="469.4" y="154" font-size="9" fill="#bdbdbd" text-anchor="middle" font-family="Liberation Sans">-380</text>
<text x="509.6" y="154" font-size="9" fill="#bdbdbd" text-anchor="middle" font-family="Liberation Sans">-360</text>
<text x="549.9" y="154" font-size="9" fill="#bdbdbd" text-anchor="middle" font-family="Liberation Sans">-340</text>
<text x="590.2" y="154" font-size="9" fill="#bdbdbd" text-anchor="middle" font-family="Liberation Sans">-320</text>
<text x="630.4" y="154" font-size="9" fill="#bdbdbd" text-anchor="middle" font-family="Liberation Sans">-300</text>
<text x="670.7" y="154" font-size="9" fill="#bdbdbd" text-anchor="middle" font-family="Liberation Sans">-280</text>
<text x="711.0" y="154" font-size="9" fill="#bdbdbd" text-anchor="middle" font-family="Liberation Sans">-260</text>
<text x="751.3" y="154" font-size="9" fill="#bdbdbd" text-anchor="middle" font-family="Liberation Sans">-240</text>
<text x="791.5" y="154" font-size="9" fill="#bdbdbd" text-anchor="middle" font-family="Liberation Sans">-220</text>
<text x="831.8" y="154" font-size="9" fill="#bdbdbd" text-anchor="middle" font-family="Liberation Sans">-200</text>
<text x="872.1" y="154" font-size="9" fill="#bdbdbd" text-anchor="middle" font-family="Liberation Sans">-180</text>
<text x="912.3" y="154" font-size="9" fill="#bdbdbd" text-anchor="middle" font-family="Liberation Sans">-160</text>
<text x="952.6" y="154" font-size="9" fill="#bdbdbd" text-anchor="middle" font-family="Liberation Sans">-140</text>
<text x="992.9" y="154" font-size="9" fill="#bdbdbd" text-anchor="middle" font-family="Liberation Sans">-120</text>
<text x="1033.2" y="154" font-size="9" fill="#bdbdbd" text-anchor="middle" font-family="Liberation Sans">-100</text>
<text x="1073.4" y="154" font-size="9" fill="#bdbdbd" text-anchor="middle" font-family="Liberation Sans">-80</text>
<text x="1113.7" y="154" font-size="9" fill="#bdbdbd" text-anchor="middle" font-family="Liberation Sans">-60</text>
<text x="1154.0" y="154" font-size="9" fill="#bdbdbd" text-anchor="middle" font-family="Liberation Sans">-40</text>
<text x="1194.2" y="154" font-size="9" fill="#bdbdbd" text-anchor="middle" font-family="Liberation Sans">-20</text>
<text x="1234.5" y="154" font-size="9" fill="#bdbdbd" text-anchor="middle" font-family="Liberation Sans">0</text>
<text x="1274.8" y="154" font-size="9" fill="#bdbdbd" text-anchor="middle" font-family="Liberation Sans">20</text>
<text x="1315.0" y="154" font-size="9" fill="#bdbdbd" text-anchor="middle" font-family="Liberation Sans">40</text>
<text x="1355.3" y="154" font-size="9" fill="#bdbdbd" text-anchor="middle" font-family="Liberation Sans">60</text>
<text x="1395.6" y="154" font-size="9" fill="#bdbdbd" text-anchor="middle" font-family="Liberation Sans">80</text>
<text x="1435.8" y="154" font-size="9" fill="#bdbdbd" text-anchor="middle" font-family="Liberation Sans">100</text>
<text x="1476.1" y="154" font-size="9" fill="#bdbdbd" text-anchor="middle" font-family="Liberation Sans">120</text>
<text x="1516.4" y="154" font-size="9" fill="#bdbdbd" text-anchor="middle" font-family="Liberation Sans">140</text>
<text x="1556.7" y="154" font-size="9" fill="#bdbdbd" text-anchor="middle" font-family="Liberation Sans">160</text>
<text x="1596.9" y="154" font-size="9" fill="#bdbdbd" text-anchor="middle" font-family="Liberation Sans">180</text>
<text x="1637.2" y="154" font-size="9" fill="#bdbdbd" text-anchor="middle" font-family="Liberation Sans">200</text>
<text x="1677.5" y="154" font-size="9" fill="#bdbdbd" text-anchor="middle" font-family="Liberation Sans">220</text>
<text x="1717.7" y="154" font-size="9" fill="#bdbdbd" text-anchor="middle" font-family="Liberation Sans">240</text>
<text x="1758.0" y="154" font-size="9" fill="#bdbdbd" text-anchor="middle" font-family="Liberation Sans">260</text>
<text x="1798.3" y="154" font-size="9" fill="#bdbdbd" text-anchor="middle" font-family="Liberation Sans">280</text>
<text x="1838.6" y="154" font-size="9" fill="#bdbdbd" text-anchor="middle" font-family="Liberation Sans">300</text>
<text x="1878.8" y="154" font-size="9" fill="#bdbdbd" text-anchor="middle" font-family="Liberation Sans">320</text>
<text x="1919.1" y="154" font-size="9" fill="#bdbdbd" text-anchor="middle" font-family="Liberation Sans">340</text>
<text x="1959.4" y="154" font-size="9" fill="#bdbdbd" text-anchor="middle" font-family="Liberation Sans">360</text>
<text x="1999.6" y="154" font-size="9" fill="#bdbdbd" text-anchor="middle" font-family="Liberation Sans">380</text>
<path d="M464.5 169.5H467 M458 173.5H467 M464.5 177.5H467 M462 181.5H467 M464.5 185.5H467 M462 189.5H467 M464.5 193.5H467 M462 197.5H467 M464.5 201.5H467 M462 205.5H467 M464.5 209.5H467 M458 213.5H467 M464.5 217.5H467 M462 221.5H467 M464.5 225.5H467 M462 229.5H467 M464.5 233.5H467 M462 237.5H467 M464.5 241.5H467 M462 245.5H467 M464.5 249.5H467 M458 254.5H467 M464.5 258.5H467 M462 262.5H467 M464.5 266.5H467 M462 270.5H467 M464.5 274.5H467 M462 278.5H467 M464.5 282.5H467 M462 286.5H467 M464.5 290.5H467 M458 294.5H467 M464.5 298.5H467 M462 302.5H467 M464.5 306.5H467 M462 310.5H467 M464.5 314.5H467 M462 318.5H467 M464.5 322.5H467 M462 326.5H467 M464.5 330.5H467 M458 334.5H467 M464.5 338.5H467 M462 342.5H467 M464.5 346.5H467 M462 350.5H467 M464.5 354.5H467 M462 358.5H467 M464.5 362.5H467 M462 366.5H467 M464.5 370.5H467 M458 374.5H467 M464.5 378.5H467 M462 382.5H467 M464.5 386.5H467 M462 390.5H467 M464.5 394.5H467 M462 398.5H467 M464.5 402.5H467 M462 407.5H467 M464.5 411.5H467 M458 415.5H467 M464.5 419.5H467 M462 423.5H467 M464.5 427.5H467 M462 431.5H467 M464.5 435.5H467 M462 439.5H467 M464.5 443.5H467 M462 447.5H467 M464.5 451.5H467 M458 455.5H467 M464.5 459.5H467 M462 463.5H467 M464.5 467.5H467 M462 471.5H467 M464.5 475.5H467 M462 479.5H467 M464.5 483.5H467 M462 487.5H467 M464.5 491.5H467 M458 495.5H467 M464.5 499.5H467 M462 503.5H467 M464.5 507.5H467 M462 511.5H467 M464.5 515.5H467 M462 519.5H467 M464.5 523.5H467 M462 527.5H467 M464.5 531.5H467 M458 535.5H467 M464.5 539.5H467 M462 543.5H467 M464.5 547.5H467 M462 551.5H467 M464.5 556.5H467 M462 560.5H467 M464.5 564.5H467 M462 568.5H467 M464.5 572.5H467 M458 576.5H467 M464.5 580.5H467 M462 584.5H467 M464.5 588.5H467 M462 592.5H467 M464.5 596.5H467 M462 600.5H467 M464.5 604.5H467 M462 608.5H467 M464.5 612.5H467 M458 616.5H467 M464.5 620.5H467 M462 624.5H467 M464.5 628.5H467 M462 632.5H467 M464.5 636.5H467 M462 640.5H467 M464.5 644.5H467 M462 648.5H467 M464.5 652.5H467 M458 656.5H467 M464.5 660.5H467 M462 664.5H467 M464.5 668.5H467 M462 672.5H467 M464.5 676.5H467 M462 680.5H467 M464.5 684.5H467 M462 688.5H467 M464.5 692.5H467 M458 696.5H467 M464.5 700.5H467 M462 705.5H467 M464.5 709.5H467 M462 713.5H467 M464.5 717.5H467 M462 721.5H467 M464.5 725.5H467 M462 729.5H467 M464.5 733.5H467 M458 737.5H467 M464.5 741.5H467 M462 745.5H467 M464.5 749.5H467 M462 753.5H467 M464.5 757.5H467 M462 761.5H467 M464.5 765.5H467 M462 769.5H467 M464.5 773.5H467 M458 777.5H467 M464.5 781.5H467 M462 785.5H467 M464.5 789.5H467 M462 793.5H467 M464.5 797.5H467 M462 801.5H467 M464.5 805.5H467 M462 809.5H467 M464.5 813.5H467 M458 817.5H467 M464.5 821.5H467 M462 825.5H467 M464.5 829.5H467 M462 833.5H467 M464.5 837.5H467 M462 841.5H467 M464.5 845.5H467 M462 849.5H467 M464.5 854.5H467 M458 858.5H467 M464.5 862.5H467 M462 866.5H467 M464.5 870.5H467 M462 874.5H467 M464.5 878.5H467 M462 882.5H467 M464.5 886.5H467 M462 890.5H467 M464.5 894.5H467 M458 898.5H467 M464.5 902.5H467 M462 906.5H467 M464.5 910.5H467 M462 914.5H467 M464.5 918.5H467 M462 922.5H467 M464.5 926.5H467 M462 930.5H467 M464.5 934.5H467 M458 938.5H467 M464.5 942.5H467 M462 946.5H467 M464.5 950.5H467 M462 954.5H467 M464.5 958.5H467 M462 962.5H467 M464.5 966.5H467 M462 970.5H467 M464.5 974.5H467 M458 978.5H467 M464.5 982.5H467 M462 986.5H467 M464.5 990.5H467 M462 994.5H467 M464.5 998.5H467 M462 1003.5H467 M464.5 1007.5H467 M462 1011.5H467 M464.5 1015.5H467 M458 1019.5H467 M464.5 1023.5H467 M462 1027.5H467 M464.5 1031.5H467 M462 1035.5H467 M464.5 1039.5H467 M462 1043.5H467 M464.5 1047.5H467 M462 1051.5H467 M464.5 1055.5H467 M458 1059.5H467 M464.5 1063.5H467 M462 1067.5H467 M464.5 1071.5H467 M462 1075.5H467 M464.5 1079.5H467 M462 1083.5H467 M464.5 1087.5H467 M462 1091.5H467 M464.5 1095.5H467 M458 1099.5H467 M464.5 1103.5H467 M462 1107.5H467 M464.5 1111.5H467 M462 1115.5H467 M464.5 1119.5H467 M462 1123.5H467 M464.5 1127.5H467 M462 1131.5H467 M464.5 1135.5H467 M458 1139.5H467 M464.5 1143.5H467 M462 1147.5H467 M464.5 1152.5H467 M462 1156.5H467 M464.5 1160.5H467 M462 1164.5H467 M464.5 1168.5H467 M462 1172.5H467 M464.5 1176.5H467 M458 1180.5H467 M464.5 1184.5H467 M462 1188.5H467 M464.5 1192.5H467 M462 1196.5H467 M464.5 1200.5H467 M462 1204.5H467 M464.5 1208.5H467 M462 1212.5H467 M464.5 1216.5H467 M458 1220.5H467 M464.5 1224.5H467 M462 1228.5H467 M464.5 1232.5H467 M462 1236.5H467 M464.5 1240.5H467 M462 1244.5H467 M464.5 1248.5H467 M462 1252.5H467 M464.5 1256.5H467 M458 1260.5H467 M464.5 1264.5H467 M462 1268.5H467 M464.5 1272.5H467 M462 1276.5H467 M464.5 1280.5H467 M462 1284.5H467 M464.5 1288.5H467 M462 1292.5H467 M464.5 1296.5H467 M458 1301.5H467 M464.5 1305.5H467 M462 1309.5H467 M464.5 1313.5H467 M462 1317.5H467 M464.5 1321.5H467 M462 1325.5H467 M464.5 1329.5H467 M462 1333.5H467 M464.5 1337.5H467 M458 1341.5H467 M464.5 1345.5H467 M462 1349.5H467" stroke="#cfcfcf" stroke-width="1"/>
<text x="0" y="0" transform="translate(455.5 173.0) rotate(-90)" font-size="9" fill="#bdbdbd" text-anchor="middle" font-family="Liberation Sans">-40</text>
<text x="0" y="0" transform="translate(455.5 213.2) rotate(-90)" font-size="9" fill="#bdbdbd" text-anchor="middle" font-family="Liberation Sans">-20</text>
<text x="0" y="0" transform="translate(455.5 253.5) rotate(-90)" font-size="9" fill="#bdbdbd" text-anchor="middle" font-family="Liberation Sans">0</text>
<text x="0" y="0" transform="translate(455.5 293.8) rotate(-90)" font-size="9" fill="#bdbdbd" text-anchor="middle" font-family="Liberation Sans">20</text>
<text x="0" y="0" transform="translate(455.5 334.0) rotate(-90)" font-size="9" fill="#bdbdbd" text-anchor="middle" font-family="Liberation Sans">40</text>
<text x="0" y="0" transform="translate(455.5 374.3) rotate(-90)" font-size="9" fill="#bdbdbd" text-anchor="middle" font-family="Liberation Sans">60</text>
<text x="0" y="0" transform="translate(455.5 414.6) rotate(-90)" font-size="9" fill="#bdbdbd" text-anchor="middle" font-family="Liberation Sans">80</text>
<text x="0" y="0" transform="translate(455.5 454.9) rotate(-90)" font-size="9" fill="#bdbdbd" text-anchor="middle" font-family="Liberation Sans">100</text>
<text x="0" y="0" transform="translate(455.5 495.1) rotate(-90)" font-size="9" fill="#bdbdbd" text-anchor="middle" font-family="Liberation Sans">120</text>
<text x="0" y="0" transform="translate(455.5 535.4) rotate(-90)" font-size="9" fill="#bdbdbd" text-anchor="middle" font-family="Liberation Sans">140</text>
<text x="0" y="0" transform="translate(455.5 575.7) rotate(-90)" font-size="9" fill="#bdbdbd" text-anchor="middle" font-family="Liberation Sans">160</text>
<text x="0" y="0" transform="translate(455.5 615.9) rotate(-90)" font-size="9" fill="#bdbdbd" text-anchor="middle" font-family="Liberation Sans">180</text>
<text x="0" y="0" transform="translate(455.5 656.2) rotate(-90)" font-size="9" fill="#bdbdbd" text-anchor="middle" font-family="Liberation Sans">200</text>
<text x="0" y="0" transform="translate(455.5 696.5) rotate(-90)" font-size="9" fill="#bdbdbd" text-anchor="middle" font-family="Liberation Sans">220</text>
<text x="0" y="0" transform="translate(455.5 736.7) rotate(-90)" font-size="9" fill="#bdbdbd" text-anchor="middle" font-family="Liberation Sans">240</text>
<text x="0" y="0" transform="translate(455.5 777.0) rotate(-90)" font-size="9" fill="#bdbdbd" text-anchor="middle" font-family="Liberation Sans">260</text>
<text x="0" y="0" transform="translate(455.5 817.3) rotate(-90)" font-size="9" fill="#bdbdbd" text-anchor="middle" font-family="Liberation Sans">280</text>
<text x="0" y="0" transform="translate(455.5 857.6) rotate(-90)" font-size="9" fill="#bdbdbd" text-anchor="middle" font-family="Liberation Sans">300</text>
<text x="0" y="0" transform="translate(455.5 897.8) rotate(-90)" font-size="9" fill="#bdbdbd" text-anchor="middle" font-family="Liberation Sans">320</text>
<text x="0" y="0" transform="translate(455.5 938.1) rotate(-90)" font-size="9" fill="#bdbdbd" text-anchor="middle" font-family="Liberation Sans">340</text>
<text x="0" y="0" transform="translate(455.5 978.4) rotate(-90)" font-size="9" fill="#bdbdbd" text-anchor="middle" font-family="Liberation Sans">360</text>
<text x="0" y="0" transform="translate(455.5 1018.6) rotate(-90)" font-size="9" fill="#bdbdbd" text-anchor="middle" font-family="Liberation Sans">380</text>
<text x="0" y="0" transform="translate(455.5 1058.9) rotate(-90)" font-size="9" fill="#bdbdbd" text-anchor="middle" font-family="Liberation Sans">400</text>
<text x="0" y="0" transform="translate(455.5 1099.2) rotate(-90)" font-size="9" fill="#bdbdbd" text-anchor="middle" font-family="Liberation Sans">420</text>
<text x="0" y="0" transform="translate(455.5 1139.4) rotate(-90)" font-size="9" fill="#bdbdbd" text-anchor="middle" font-family="Liberation Sans">440</text>
<text x="0" y="0" transform="translate(455.5 1179.7) rotate(-90)" font-size="9" fill="#bdbdbd" text-anchor="middle" font-family="Liberation Sans">460</text>
<text x="0" y="0" transform="translate(455.5 1220.0) rotate(-90)" font-size="9" fill="#bdbdbd" text-anchor="middle" font-family="Liberation Sans">480</text>
<text x="0" y="0" transform="translate(455.5 1260.2) rotate(-90)" font-size="9" fill="#bdbdbd" text-anchor="middle" font-family="Liberation Sans">500</text>
<text x="0" y="0" transform="translate(455.5 1300.5) rotate(-90)" font-size="9" fill="#bdbdbd" text-anchor="middle" font-family="Liberation Sans">520</text>
<text x="0" y="0" transform="translate(455.5 1340.8) rotate(-90)" font-size="9" fill="#bdbdbd" text-anchor="middle" font-family="Liberation Sans">540</text>
<path d="M713.5 146V166M1461.5 146V166" stroke="#3a8ee6" stroke-width="1"/>
<path d="M446 249.5H467" stroke="#3a8ee6" stroke-width="1.5"/>
</svg>
<div class="a" style="left:467px;top:166px;width:4px;height:1187px;background:linear-gradient(90deg,rgba(0,0,0,0.35),rgba(0,0,0,0))"></div>
<div class="a" style="left:467px;top:166px;width:1554px;height:3px;background:linear-gradient(180deg,rgba(0,0,0,0.3),rgba(0,0,0,0))"></div>
<div class="a" style="left:2027px;top:590px;width:4px;height:361px;background:#7a7a7a;border-radius:2px"></div>
<div class="a" style="left:997px;top:1358px;width:472px;height:4px;background:#7a7a7a;border-radius:2px"></div>
<!-- ===== SPREADS ===== -->
<div class="a" style="left:1227px;top:247px;width:612px;height:436px;border:2px solid #56536c"></div>
<div class="a" style="left:1234px;top:253px;width:598px;height:423px"><div class="a" style="left:0;top:0;width:598px;height:423px;background:#fff"></div><div class="a" style="left:200px;top:-5px;width:198px;height:428px;background:#0e3440"></div><div class="a" style="left:398px;top:-5px;width:206px;height:191px;overflow:hidden"><svg style="left:0;top:0" width="206" height="191" viewBox="0 0 206 193" preserveAspectRatio="xMinYMin slice"><defs><linearGradient id="cfbg" x1="0" y1="0" x2="0" y2="1"><stop offset="0" stop-color="#2c2e2a"/><stop offset="0.28" stop-color="#34342e"/><stop offset="0.31" stop-color="#5e5040"/><stop offset="0.37" stop-color="#5a4c3e"/><stop offset="0.40" stop-color="#3a3632"/><stop offset="1" stop-color="#3c3936"/></linearGradient><linearGradient id="cfw" x1="0" y1="0" x2="0" y2="1"><stop offset="0" stop-color="#6a7272"/><stop offset="0.8" stop-color="#4a5252"/><stop offset="1" stop-color="#2a2e2e"/></linearGradient><linearGradient id="cfb" x1="0" y1="0" x2="1" y2="1"><stop offset="0" stop-color="#f2f5f5"/><stop offset="0.6" stop-color="#e6eaea"/><stop offset="1" stop-color="#c4c8c8"/></linearGradient></defs><rect width="206" height="193" fill="url(#cfbg)"/><path d="M52 33 Q60 20 76 6 L206 6 L206 193 L42 193 Q40 160 44 130 Q46 110 49 96 Q47 60 52 33Z" fill="url(#cfb)"/><path d="M78 6.5 L206 6.5 L206 30.4 L82 30.4 Q78 20 78 6.5Z" fill="url(#cfw)"/><path d="M62 0 L70 0 L80 28 L72 30Z" fill="#dfe3e3"/><path d="M33.2 16.3 L44.5 9.3 L58.6 8.6 L60 31.8 L54.3 34.6 L44.5 26.2 L34.6 22Z" fill="#121212"/><path d="M52 96 Q46 110 40 120 L37 193 L46 193 Q44 160 46 128 Q48 110 52 96Z" fill="#111"/><path d="M55.7 71.2 L62.8 81.1 L96.6 88.1 L116.3 92.4 L136 112 L124.8 110.7 L96.6 107.9 L68.4 105 L57.2 93.8Z" fill="#0e1010"/><path d="M62 82 L96 89 L114 93 L124 104 L96 101 L66 96Z" fill="#b8c0c2"/><path d="M116 92 Q150 88 206 87" stroke="#6a6e6e" stroke-width="0.8" fill="none"/><path d="M118 96 Q160 108 206 104 L206 117 Q170 122 140 114Z" fill="#9a9ea2"/><path d="M144.5 120.5 L206 117.7 L206 193 L124 193 L133 152Z" fill="#0c0c0e"/><path d="M62.8 140.3 L99.4 141.7 L88.1 179.7 L61.4 175.5Z" fill="#0a0a0a"/><path d="M51.5 177 Q90 182 124.8 186 L124.8 193 L52 193Z" fill="#1a1a1a"/></svg></div><div class="a" style="left:524px;top:146px;width:80px;height:82px;background:#bde0f1"></div><svg style="left:65px;top:9px" width="66.0" height="57.0" viewBox="0 0 66 57"><rect x="0.8" y="2.3" width="54" height="54" rx="11" fill="#9cc3c2" stroke="#1b3a4e" stroke-width="1.8"/><path d="M4 40 Q10 10 50 4 L12 4 Q2 4 2 14Z" fill="#abd0cf"/><path d="M7.5 15.4H43M7.5 24.4H38.5M7.5 33.8H34M7.5 42.9H35" stroke="#1b3a4e" stroke-width="1.9"/><path d="M49.8 9.8 L34.2 32.7 L34.7 42.5 L44 40 L58.6 15.9Z" fill="#a9cfd6" stroke="#1b3a4e" stroke-width="1.8" stroke-linejoin="round"/><path d="M49.8 9.8 L54.6 1 L65.2 7.8 L58.6 15.9Z" fill="#f1e6c4" stroke="#1b3a4e" stroke-width="1.8" stroke-linejoin="round"/></svg><svg style="left:529px;top:156px" width="66.0" height="57.0" viewBox="0 0 66 57"><rect x="0.8" y="2.3" width="54" height="54" rx="11" fill="#9cc3c2" stroke="#1b3a4e" stroke-width="1.8"/><path d="M4 40 Q10 10 50 4 L12 4 Q2 4 2 14Z" fill="#abd0cf"/><path d="M7.5 15.4H43M7.5 24.4H38.5M7.5 33.8H34M7.5 42.9H35" stroke="#1b3a4e" stroke-width="1.9"/><path d="M49.8 9.8 L34.2 32.7 L34.7 42.5 L44 40 L58.6 15.9Z" fill="#a9cfd6" stroke="#1b3a4e" stroke-width="1.8" stroke-linejoin="round"/><path d="M49.8 9.8 L54.6 1 L65.2 7.8 L58.6 15.9Z" fill="#f1e6c4" stroke="#1b3a4e" stroke-width="1.8" stroke-linejoin="round"/></svg><div class="t" style="left:18.5px;top:124.5px;font-size:28px;color:#2a1d17;font-weight:700;font-style:italic;letter-spacing:0px;">"</div><div class="t" style="left:149.5px;top:283.5px;font-size:28px;color:#2a1d17;font-weight:700;font-style:italic;letter-spacing:0px;">"</div><div class="t" style="left:20px;top:164.6px;font-size:32px;color:#2a1d17;font-weight:700;font-style:italic;letter-spacing:-0.5px;">Citation à</div><div class="t" style="left:20px;top:203.8px;font-size:32px;color:#2a1d17;font-weight:700;font-style:italic;letter-spacing:-0.5px;">Définir ici</div><div class="a" style="left:227px;top:-5px;width:1px;height:428px;background:#2d68b0"></div><div class="t st" style="left:227px;top:59px;font-size:22px;color:#ffffff;font-weight:400;font-style:normal;letter-spacing:0px;-webkit-text-stroke:0.8px #0e3440">Sous titre</div><svg style="left:228.0px;top:102.5px" width="15.0" height="15.0" viewBox="0 0 15 15"><circle cx="7.5" cy="7.5" r="6.9" fill="none" stroke="#d6dcdc" stroke-width="1"/><g transform="scale(0.3409)"><path d="M14 10.5 Q17 8.5 19.5 10 L21.5 15 Q22 16.5 20.5 17.5 L18.5 18.5 Q19 23 24.5 27 L26 25.5 Q27.5 24.3 29 25.2 L32.5 29 Q33.5 30.5 32 32 Q29 35.5 25 34.5 Q17 32 13.5 24 Q10.5 16 14 10.5Z" fill="#fff"/></g></svg><svg style="left:228.0px;top:152.5px" width="15.0" height="15.0" viewBox="0 0 15 15"><circle cx="7.5" cy="7.5" r="6.9" fill="none" stroke="#d6dcdc" stroke-width="1"/><g transform="scale(0.3409)"><path d="M14 10.5 Q17 8.5 19.5 10 L21.5 15 Q22 16.5 20.5 17.5 L18.5 18.5 Q19 23 24.5 27 L26 25.5 Q27.5 24.3 29 25.2 L32.5 29 Q33.5 30.5 32 32 Q29 35.5 25 34.5 Q17 32 13.5 24 Q10.5 16 14 10.5Z" fill="#fff"/></g></svg><svg style="left:228.0px;top:203.5px" width="15.0" height="15.0" viewBox="0 0 15 15"><circle cx="7.5" cy="7.5" r="6.9" fill="none" stroke="#d6dcdc" stroke-width="1"/><g transform="scale(0.3409)"><path d="M14 10.5 Q17 8.5 19.5 10 L21.5 15 Q22 16.5 20.5 17.5 L18.5 18.5 Q19 23 24.5 27 L26 25.5 Q27.5 24.3 29 25.2 L32.5 29 Q33.5 30.5 32 32 Q29 35.5 25 34.5 Q17 32 13.5 24 Q10.5 16 14 10.5Z" fill="#fff"/></g></svg><svg style="left:228.0px;top:253.5px" width="15.0" height="15.0" viewBox="0 0 15 15"><circle cx="7.5" cy="7.5" r="6.9" fill="none" stroke="#d6dcdc" stroke-width="1"/><g transform="scale(0.3409)"><path d="M14 10.5 Q17 8.5 19.5 10 L21.5 15 Q22 16.5 20.5 17.5 L18.5 18.5 Q19 23 24.5 27 L26 25.5 Q27.5 24.3 29 25.2 L32.5 29 Q33.5 30.5 32 32 Q29 35.5 25 34.5 Q17 32 13.5 24 Q10.5 16 14 10.5Z" fill="#fff"/></g></svg><div class="t sm" style="left:228.5px;top:124px;font-size:8.5px;color:#e8eeee;font-weight:400;font-style:normal;letter-spacing:0px;">Cum sociis natoque penatibus et</div><div class="a" style="left:228px;top:125px;width:131px;height:11px;border:1px solid #3672c4"></div><div class="t sm" style="left:228.5px;top:174px;font-size:8.5px;color:#e8eeee;font-weight:400;font-style:normal;letter-spacing:0px;">Cum sociis natoque penatibus et</div><div class="a" style="left:228px;top:175px;width:131px;height:12px;border:1px solid #3672c4"></div><div class="t sm" style="left:228.5px;top:225px;font-size:8.5px;color:#e8eeee;font-weight:400;font-style:normal;letter-spacing:0px;">Cum sociis natoque penatibus et</div><div class="a" style="left:228px;top:226px;width:131px;height:12px;border:1px solid #3672c4"></div><div class="t sm" style="left:228.5px;top:275px;font-size:8.5px;color:#e8eeee;font-weight:400;font-style:normal;letter-spacing:0px;">Cum sociis natoque penatibus et</div><div class="a" style="left:228px;top:276px;width:131px;height:29px;border:1px solid #3672c4"></div><div class="t sm" style="left:228.5px;top:285px;font-size:8.5px;color:#e8eeee;font-weight:400;font-style:normal;letter-spacing:0px;">Cum sociis natoque penatibus et</div><div class="a" style="left:228px;top:320px;width:56px;height:56px;overflow:hidden;background:#eceae6"><svg style="left:0;top:0" width="56" height="56" viewBox="0 0 56 56" preserveAspectRatio="none"><rect width="56" height="56" fill="#ece8e4"/><ellipse cx="7" cy="3.5" rx="6" ry="3.5" fill="#e23a2c"/><rect x="15" y="0" width="19" height="8" rx="3" fill="#f2cc30"/><circle cx="40" cy="6" r="2" fill="#3a3040"/><ellipse cx="48" cy="4.5" rx="4" ry="3.5" fill="#2a2030"/><circle cx="54" cy="2" r="3" fill="#e04030"/><circle cx="2" cy="12" r="3" fill="#e04030"/><ellipse cx="9" cy="12" rx="4" ry="3" fill="#2a1c28"/><ellipse cx="17" cy="10" rx="3" ry="4" fill="#e0503a"/><rect x="0" y="17" width="14" height="19" rx="2" fill="#f0c420"/><path d="M2 28 L12 24" stroke="#8aa030" stroke-width="2"/><ellipse cx="5" cy="44" rx="6" ry="5" fill="#e84838"/><ellipse cx="15" cy="50" rx="5" ry="4" fill="#2a2028"/><circle cx="22" cy="48" r="2" fill="#3a3048"/><ellipse cx="26" cy="53" rx="6" ry="4" fill="#e86a60"/><circle cx="33" cy="52" r="2.5" fill="#2a2028"/><circle cx="37" cy="56" r="3" fill="#e04048"/><circle cx="48" cy="50" r="5" fill="#e23a2c"/><ellipse cx="54" cy="48" rx="4" ry="5" fill="#1e1e1e"/><path d="M44 56 L56 42" stroke="#1e1e1e" stroke-width="3"/><path d="M52 10 Q56 16 54 28 Q50 22 48 14Z" fill="#3a5a2a"/><ellipse cx="54" cy="20" rx="3" ry="4" fill="#d83028"/><path d="M54 32 Q50 40 54 44" stroke="#2a3a2a" stroke-width="3" fill="none"/><circle cx="34" cy="30" r="19.5" fill="#f4eef0"/><circle cx="34" cy="30" r="17.5" fill="#8a3050"/><circle cx="21.4" cy="37.2" r="2.6" fill="#2a1828"/><circle cx="20.1" cy="34.0" r="2.6" fill="#2a1828"/><circle cx="19.5" cy="30.5" r="2.6" fill="#2a1828"/><circle cx="19.8" cy="27.0" r="2.6" fill="#2a1828"/><circle cx="21.0" cy="23.6" r="2.6" fill="#2a1828"/><circle cx="22.9" cy="20.7" r="2.6" fill="#2a1828"/><circle cx="25.5" cy="18.3" r="2.6" fill="#2a1828"/><circle cx="28.6" cy="16.6" r="2.6" fill="#2a1828"/><circle cx="32.0" cy="15.6" r="2.6" fill="#2a1828"/><circle cx="26.3" cy="36.4" r="2.4" fill="#e03048"/><circle cx="26.3" cy="36.4" r="0.9" fill="#7a1a28"/><circle cx="24.8" cy="33.9" r="2.4" fill="#e03048"/><circle cx="24.8" cy="33.9" r="0.9" fill="#7a1a28"/><circle cx="24.1" cy="31.0" r="2.4" fill="#e03048"/><circle cx="24.1" cy="31.0" r="0.9" fill="#7a1a28"/><circle cx="24.2" cy="28.1" r="2.4" fill="#e03048"/><circle cx="24.2" cy="28.1" r="0.9" fill="#7a1a28"/><circle cx="25.2" cy="25.3" r="2.4" fill="#e03048"/><circle cx="25.2" cy="25.3" r="0.9" fill="#7a1a28"/><circle cx="26.9" cy="22.9" r="2.4" fill="#e03048"/><circle cx="26.9" cy="22.9" r="0.9" fill="#7a1a28"/><circle cx="29.3" cy="21.2" r="2.4" fill="#e03048"/><circle cx="29.3" cy="21.2" r="0.9" fill="#7a1a28"/><circle cx="32.1" cy="20.2" r="2.4" fill="#e03048"/><circle cx="32.1" cy="20.2" r="0.9" fill="#7a1a28"/><path d="M27 42 Q30 28 44 17" stroke="#4a9a3a" stroke-width="3" fill="none"/><path d="M33 30 L46 24 L50 34 L42 44 L34 42Z" fill="#f2c040"/><path d="M38 34 L46 32 L45 40 L39 42Z" fill="#f8e040"/><circle cx="40" cy="28" r="2.5" fill="#f0a060"/><circle cx="44" cy="30" r="2" fill="#f4b070"/><path d="M40 44 Q48 44 50 36 Q50 46 42 47Z" fill="#e8508a"/></svg></div><div class="t" style="left:425px;top:234.3px;font-size:33px;color:#2a1d17;font-weight:700;font-style:normal;letter-spacing:-0.8px;">TITRE</div><div class="t st" style="left:425px;top:265.5px;font-size:21.7px;color:#2a1d17;font-weight:400;font-style:normal;letter-spacing:0px;-webkit-text-stroke:0.5px #fff">Sous titre</div><div class="t sm" style="left:425.5px;top:297.5px;font-size:8.5px;color:#2a1d17;font-weight:400;font-style:normal;letter-spacing:0px;">Cum sociis natoque penatibus et</div><div class="t sm" style="left:425.5px;top:307.5px;font-size:8.5px;color:#2a1d17;font-weight:400;font-style:normal;letter-spacing:0px;">magnis dis parturient montes,</div><div class="t sm" style="left:425.5px;top:317.5px;font-size:8.5px;color:#2a1d17;font-weight:400;font-style:normal;letter-spacing:0px;">nascetur ridiculus mus. Nullam</div><div class="t sm" style="left:425.5px;top:327.5px;font-size:8.5px;color:#2a1d17;font-weight:400;font-style:normal;letter-spacing:0px;">eleifend pharetra felis. Mauris</div><div class="t sm" style="left:425.5px;top:337.5px;font-size:8.5px;color:#2a1d17;font-weight:400;font-style:normal;letter-spacing:0px;">nibh velit, tristique ac, lacinia in,</div><div class="t sm" style="left:425.5px;top:347.5px;font-size:8.5px;color:#2a1d17;font-weight:400;font-style:normal;letter-spacing:0px;">scelerisque et, ante. Donec</div><div class="a" style="left:425px;top:298px;width:132px;height:80px;border:1px solid #3672c4"></div></div>
<div class="a" style="left:1232.5px;top:251.5px;width:601px;height:426px;border:1.5px solid #b0b0a8"></div>
<div class="a" style="left:1433px;top:247px;width:200px;height:2px;background:#3a6a9c"></div>
<div class="a" style="left:1632px;top:252px;width:1px;height:424px;background:#b4b4b0"></div>
<div class="a" style="left:630px;top:731px;width:611px;height:435px;border:2px solid #56536c"></div>
<div class="a" style="left:636px;top:736px;width:599px;height:424px"><div class="a" style="left:0;top:0;width:599px;height:424px;background:#fff"></div><div class="a" style="left:0;top:0;width:199px;height:197px;background:#0e3440"></div><div class="a" style="left:199px;top:-7px;width:200px;height:204px;background:#bde0f1"></div><div class="a" style="left:199px;top:-7px;width:200px;height:7px;background:#c9e6f5"></div><div class="a" style="left:-6px;top:197px;width:404px;height:227px;overflow:hidden"><svg style="left:0;top:0" width="404" height="227" viewBox="0 0 405 227" preserveAspectRatio="none"><defs><linearGradient id="csbg" x1="0" y1="0" x2="0" y2="1"><stop offset="0" stop-color="#3a3028"/><stop offset="0.3" stop-color="#30241a"/><stop offset="0.6" stop-color="#261c16"/><stop offset="0.72" stop-color="#2a2019"/><stop offset="0.73" stop-color="#5a4636"/><stop offset="0.755" stop-color="#4a3e36"/><stop offset="0.77" stop-color="#3a3532"/><stop offset="1" stop-color="#413a36"/></linearGradient><linearGradient id="csb" x1="0" y1="0" x2="0" y2="1"><stop offset="0" stop-color="#f2f4f6"/><stop offset="0.7" stop-color="#e2e6ea"/><stop offset="1" stop-color="#c8ccd0"/></linearGradient></defs><filter id="csblur" x="-5%" y="-5%" width="110%" height="110%"><feGaussianBlur stdDeviation="1.6"/></filter><rect width="405" height="227" fill="url(#csbg)"/><g filter="url(#csblur)"><ellipse cx="183" cy="92" rx="11" ry="6" fill="#5e3c20" opacity="0.46"/><ellipse cx="77" cy="133" rx="7" ry="7" fill="#6a4426" opacity="0.23"/><ellipse cx="123" cy="15" rx="10" ry="8" fill="#5a3a22" opacity="0.38"/><ellipse cx="160" cy="75" rx="10" ry="8" fill="#5e3c20" opacity="0.20"/><ellipse cx="214" cy="10" rx="5" ry="5" fill="#5a3a22" opacity="0.26"/><ellipse cx="132" cy="98" rx="5" ry="5" fill="#7a4e2a" opacity="0.35"/><ellipse cx="268" cy="75" rx="6" ry="10" fill="#5a3a22" opacity="0.25"/><ellipse cx="128" cy="38" rx="6" ry="3" fill="#5a3a22" opacity="0.32"/><ellipse cx="343" cy="64" rx="12" ry="9" fill="#5a3a22" opacity="0.16"/><ellipse cx="375" cy="9" rx="6" ry="8" fill="#4a3020" opacity="0.13"/><ellipse cx="255" cy="128" rx="5" ry="4" fill="#7a4e2a" opacity="0.12"/><ellipse cx="166" cy="152" rx="4" ry="8" fill="#5a3a22" opacity="0.22"/><ellipse cx="323" cy="29" rx="8" ry="6" fill="#6a4426" opacity="0.30"/><ellipse cx="312" cy="69" rx="6" ry="6" fill="#6a4426" opacity="0.12"/><ellipse cx="350" cy="161" rx="8" ry="10" fill="#5a3a22" opacity="0.16"/><ellipse cx="160" cy="141" rx="9" ry="4" fill="#6a4426" opacity="0.26"/><ellipse cx="105" cy="127" rx="6" ry="5" fill="#5a3a22" opacity="0.22"/><ellipse cx="85" cy="105" rx="3" ry="6" fill="#5e3c20" opacity="0.34"/><ellipse cx="388" cy="80" rx="8" ry="9" fill="#6a4426" opacity="0.23"/><ellipse cx="126" cy="38" rx="8" ry="8" fill="#6a4426" opacity="0.42"/><ellipse cx="381" cy="32" rx="12" ry="9" fill="#5e3c20" opacity="0.13"/><ellipse cx="19" cy="18" rx="8" ry="5" fill="#8a5a30" opacity="0.41"/><ellipse cx="104" cy="136" rx="8" ry="5" fill="#6a4426" opacity="0.48"/><ellipse cx="396" cy="21" rx="7" ry="8" fill="#5e3c20" opacity="0.23"/><ellipse cx="113" cy="151" rx="5" ry="3" fill="#7a4e2a" opacity="0.32"/><ellipse cx="101" cy="8" rx="6" ry="7" fill="#6a4426" opacity="0.23"/><ellipse cx="56" cy="74" rx="6" ry="8" fill="#5e3c20" opacity="0.38"/><ellipse cx="57" cy="6" rx="3" ry="9" fill="#8a5a30" opacity="0.29"/><ellipse cx="14" cy="99" rx="4" ry="3" fill="#7a4e2a" opacity="0.30"/><ellipse cx="405" cy="12" rx="8" ry="8" fill="#8a5a30" opacity="0.25"/><ellipse cx="52" cy="159" rx="6" ry="4" fill="#4a3020" opacity="0.47"/><ellipse cx="353" cy="69" rx="10" ry="9" fill="#5e3c20" opacity="0.12"/><ellipse cx="268" cy="63" rx="3" ry="4" fill="#5a3a22" opacity="0.24"/><ellipse cx="402" cy="145" rx="10" ry="6" fill="#8a5a30" opacity="0.24"/><ellipse cx="185" cy="76" rx="8" ry="7" fill="#5e3c20" opacity="0.21"/><ellipse cx="244" cy="79" rx="5" ry="8" fill="#4a3020" opacity="0.26"/><ellipse cx="267" cy="80" rx="11" ry="6" fill="#6a4426" opacity="0.24"/><ellipse cx="82" cy="28" rx="11" ry="8" fill="#4a3020" opacity="0.35"/><ellipse cx="98" cy="67" rx="5" ry="7" fill="#6a4426" opacity="0.46"/><ellipse cx="156" cy="96" rx="6" ry="4" fill="#4a3020" opacity="0.31"/><ellipse cx="363" cy="7" rx="4" ry="10" fill="#6a4426" opacity="0.14"/><ellipse cx="191" cy="153" rx="10" ry="6" fill="#5e3c20" opacity="0.35"/><ellipse cx="128" cy="138" rx="12" ry="6" fill="#5a3a22" opacity="0.45"/><ellipse cx="113" cy="100" rx="9" ry="5" fill="#7a4e2a" opacity="0.29"/><ellipse cx="321" cy="3" rx="4" ry="6" fill="#5a3a22" opacity="0.26"/><ellipse cx="108" cy="129" rx="10" ry="10" fill="#5a3a22" opacity="0.33"/><ellipse cx="255" cy="108" rx="10" ry="10" fill="#8a5a30" opacity="0.16"/><ellipse cx="334" cy="42" rx="9" ry="8" fill="#5e3c20" opacity="0.25"/><ellipse cx="73" cy="45" rx="6" ry="8" fill="#5e3c20" opacity="0.35"/><ellipse cx="404" cy="26" rx="11" ry="8" fill="#6a4426" opacity="0.14"/><ellipse cx="378" cy="119" rx="4" ry="6" fill="#8a5a30" opacity="0.28"/><ellipse cx="3" cy="91" rx="9" ry="7" fill="#7a4e2a" opacity="0.34"/><ellipse cx="264" cy="34" rx="9" ry="9" fill="#8a5a30" opacity="0.29"/><ellipse cx="50" cy="40" rx="7" ry="4" fill="#7a4e2a" opacity="0.36"/><ellipse cx="320" cy="53" rx="11" ry="9" fill="#7a4e2a" opacity="0.21"/><ellipse cx="15" cy="56" rx="7" ry="5" fill="#5a3a22" opacity="0.27"/><ellipse cx="351" cy="71" rx="3" ry="7" fill="#8a5a30" opacity="0.26"/><ellipse cx="57" cy="25" rx="8" ry="8" fill="#8a5a30" opacity="0.41"/><ellipse cx="383" cy="81" rx="12" ry="4" fill="#6a4426" opacity="0.20"/><ellipse cx="226" cy="137" rx="8" ry="4" fill="#5e3c20" opacity="0.27"/><ellipse cx="227" cy="51" rx="6" ry="9" fill="#5e3c20" opacity="0.16"/><ellipse cx="345" cy="160" rx="8" ry="7" fill="#6a4426" opacity="0.19"/><ellipse cx="46" cy="1" rx="6" ry="7" fill="#5a3a22" opacity="0.35"/><ellipse cx="162" cy="132" rx="8" ry="6" fill="#8a5a30" opacity="0.25"/><ellipse cx="377" cy="76" rx="11" ry="9" fill="#4a3020" opacity="0.17"/><ellipse cx="192" cy="21" rx="7" ry="9" fill="#4a3020" opacity="0.36"/><ellipse cx="44" cy="69" rx="3" ry="5" fill="#8a5a30" opacity="0.43"/><ellipse cx="9" cy="32" rx="5" ry="8" fill="#7a4e2a" opacity="0.42"/><ellipse cx="99" cy="82" rx="7" ry="7" fill="#5e3c20" opacity="0.39"/><ellipse cx="291" cy="116" rx="11" ry="3" fill="#8a5a30" opacity="0.19"/><ellipse cx="214" cy="26" rx="5" ry="7" fill="#8a5a30" opacity="0.16"/><ellipse cx="88" cy="90" rx="8" ry="4" fill="#8a5a30" opacity="0.39"/><ellipse cx="141" cy="30" rx="8" ry="9" fill="#6a4426" opacity="0.27"/><ellipse cx="404" cy="146" rx="4" ry="5" fill="#8a5a30" opacity="0.14"/><ellipse cx="157" cy="72" rx="11" ry="7" fill="#8a5a30" opacity="0.24"/><ellipse cx="163" cy="113" rx="3" ry="4" fill="#8a5a30" opacity="0.31"/><ellipse cx="332" cy="60" rx="9" ry="7" fill="#7a4e2a" opacity="0.21"/><ellipse cx="278" cy="31" rx="4" ry="4" fill="#5a3a22" opacity="0.26"/><ellipse cx="248" cy="149" rx="7" ry="4" fill="#5a3a22" opacity="0.16"/><ellipse cx="340" cy="163" rx="11" ry="4" fill="#5a3a22" opacity="0.14"/><ellipse cx="276" cy="13" rx="4" ry="6" fill="#4a3020" opacity="0.21"/><ellipse cx="174" cy="99" rx="3" ry="8" fill="#6a4426" opacity="0.25"/><ellipse cx="184" cy="122" rx="7" ry="4" fill="#6a4426" opacity="0.23"/><ellipse cx="321" cy="53" rx="4" ry="9" fill="#8a5a30" opacity="0.29"/><ellipse cx="231" cy="32" rx="8" ry="5" fill="#7a4e2a" opacity="0.17"/><ellipse cx="47" cy="123" rx="4" ry="10" fill="#6a4426" opacity="0.47"/><ellipse cx="356" cy="115" rx="10" ry="8" fill="#4a3020" opacity="0.16"/><ellipse cx="75" cy="132" rx="6" ry="4" fill="#7a4e2a" opacity="0.50"/><ellipse cx="366" cy="8" rx="5" ry="10" fill="#7a4e2a" opacity="0.18"/><ellipse cx="267" cy="94" rx="8" ry="6" fill="#4a3020" opacity="0.24"/><ellipse cx="284" cy="126" rx="12" ry="3" fill="#5e3c20" opacity="0.14"/><ellipse cx="96" cy="73" rx="8" ry="8" fill="#8a5a30" opacity="0.31"/><ellipse cx="40" cy="41" rx="11" ry="7" fill="#5e3c20" opacity="0.32"/><ellipse cx="211" cy="140" rx="4" ry="6" fill="#8a5a30" opacity="0.13"/><ellipse cx="242" cy="125" rx="3" ry="10" fill="#6a4426" opacity="0.19"/><ellipse cx="393" cy="141" rx="8" ry="7" fill="#4a3020" opacity="0.29"/><ellipse cx="170" cy="87" rx="8" ry="6" fill="#7a4e2a" opacity="0.34"/><ellipse cx="109" cy="153" rx="9" ry="8" fill="#5a3a22" opacity="0.20"/><ellipse cx="99" cy="7" rx="4" ry="8" fill="#4a3020" opacity="0.22"/><ellipse cx="128" cy="66" rx="8" ry="8" fill="#7a4e2a" opacity="0.22"/><ellipse cx="367" cy="71" rx="7" ry="10" fill="#6a4426" opacity="0.13"/><ellipse cx="40" cy="134" rx="11" ry="4" fill="#6a4426" opacity="0.38"/><ellipse cx="47" cy="103" rx="7" ry="4" fill="#5a3a22" opacity="0.31"/><ellipse cx="63" cy="60" rx="4" ry="6" fill="#5e3c20" opacity="0.28"/><ellipse cx="236" cy="69" rx="10" ry="7" fill="#6a4426" opacity="0.29"/><ellipse cx="297" cy="39" rx="4" ry="9" fill="#5e3c20" opacity="0.23"/><ellipse cx="145" cy="45" rx="9" ry="7" fill="#5e3c20" opacity="0.26"/><ellipse cx="113" cy="40" rx="12" ry="7" fill="#8a5a30" opacity="0.47"/><ellipse cx="356" cy="7" rx="4" ry="5" fill="#4a3020" opacity="0.12"/><ellipse cx="15" cy="37" rx="6" ry="8" fill="#8a5a30" opacity="0.25"/><ellipse cx="95" cy="162" rx="7" ry="5" fill="#7a4e2a" opacity="0.30"/><ellipse cx="302" cy="138" rx="4" ry="4" fill="#5e3c20" opacity="0.27"/><ellipse cx="311" cy="73" rx="10" ry="6" fill="#6a4426" opacity="0.19"/><ellipse cx="265" cy="163" rx="6" ry="7" fill="#8a5a30" opacity="0.27"/><ellipse cx="74" cy="108" rx="8" ry="6" fill="#7a4e2a" opacity="0.22"/><ellipse cx="34" cy="93" rx="7" ry="8" fill="#7a4e2a" opacity="0.45"/><ellipse cx="4" cy="51" rx="11" ry="7" fill="#8a5a30" opacity="0.29"/><ellipse cx="294" cy="115" rx="6" ry="4" fill="#7a4e2a" opacity="0.24"/><ellipse cx="132" cy="150" rx="6" ry="6" fill="#5e3c20" opacity="0.48"/><ellipse cx="381" cy="151" rx="7" ry="9" fill="#7a4e2a" opacity="0.20"/><ellipse cx="90" cy="160" rx="10" ry="7" fill="#5a3a22" opacity="0.31"/><ellipse cx="148" cy="60" rx="7" ry="6" fill="#6a4426" opacity="0.42"/><ellipse cx="149" cy="64" rx="4" ry="7" fill="#6a4426" opacity="0.25"/><ellipse cx="307" cy="145" rx="6" ry="3" fill="#5e3c20" opacity="0.13"/><ellipse cx="64" cy="49" rx="3" ry="9" fill="#4a3020" opacity="0.22"/><ellipse cx="221" cy="130" rx="4" ry="4" fill="#8a5a30" opacity="0.14"/><ellipse cx="127" cy="4" rx="9" ry="4" fill="#8a5a30" opacity="0.33"/><ellipse cx="288" cy="81" rx="11" ry="5" fill="#4a3020" opacity="0.19"/><ellipse cx="137" cy="160" rx="9" ry="6" fill="#5e3c20" opacity="0.44"/><ellipse cx="29" cy="102" rx="3" ry="8" fill="#8a5a30" opacity="0.30"/><ellipse cx="2" cy="62" rx="4" ry="6" fill="#5e3c20" opacity="0.39"/><ellipse cx="212" cy="117" rx="10" ry="6" fill="#4a3020" opacity="0.28"/><ellipse cx="100" cy="27" rx="9" ry="8" fill="#7a4e2a" opacity="0.26"/><ellipse cx="172" cy="48" rx="12" ry="3" fill="#7a4e2a" opacity="0.42"/><ellipse cx="123" cy="26" rx="11" ry="9" fill="#4a3020" opacity="0.21"/><ellipse cx="195" cy="132" rx="6" ry="4" fill="#7a4e2a" opacity="0.27"/><ellipse cx="95" cy="118" rx="8" ry="5" fill="#6a4426" opacity="0.47"/><ellipse cx="163" cy="150" rx="11" ry="7" fill="#5e3c20" opacity="0.34"/><ellipse cx="105" cy="146" rx="11" ry="5" fill="#5e3c20" opacity="0.43"/><ellipse cx="37" cy="142" rx="7" ry="5" fill="#6a4426" opacity="0.44"/><ellipse cx="156" cy="87" rx="8" ry="5" fill="#5a3a22" opacity="0.40"/><ellipse cx="96" cy="2" rx="7" ry="6" fill="#6a4426" opacity="0.41"/><ellipse cx="245" cy="26" rx="4" ry="5" fill="#7a4e2a" opacity="0.28"/><ellipse cx="328" cy="22" rx="10" ry="7" fill="#5e3c20" opacity="0.22"/><ellipse cx="61" cy="127" rx="3" ry="9" fill="#6a4426" opacity="0.45"/><ellipse cx="33" cy="45" rx="9" ry="4" fill="#4a3020" opacity="0.41"/><ellipse cx="34" cy="124" rx="8" ry="7" fill="#5a3a22" opacity="0.44"/><ellipse cx="169" cy="151" rx="4" ry="9" fill="#6a4426" opacity="0.21"/><ellipse cx="167" cy="82" rx="12" ry="10" fill="#7a4e2a" opacity="0.29"/><ellipse cx="31" cy="50" rx="7" ry="8" fill="#7a4e2a" opacity="0.22"/><ellipse cx="57" cy="110" rx="9" ry="8" fill="#5a3a22" opacity="0.40"/><ellipse cx="5" cy="62" rx="9" ry="5" fill="#5e3c20" opacity="0.23"/><ellipse cx="313" cy="141" rx="11" ry="8" fill="#5e3c20" opacity="0.15"/><ellipse cx="254" cy="155" rx="10" ry="10" fill="#4a3020" opacity="0.22"/><ellipse cx="35" cy="31" rx="6" ry="4" fill="#7a4e2a" opacity="0.48"/><ellipse cx="228" cy="119" rx="6" ry="9" fill="#5a3a22" opacity="0.14"/><ellipse cx="252" cy="22" rx="9" ry="4" fill="#6a4426" opacity="0.19"/><ellipse cx="339" cy="98" rx="4" ry="5" fill="#6a4426" opacity="0.30"/><ellipse cx="176" cy="127" rx="6" ry="9" fill="#5e3c20" opacity="0.24"/><ellipse cx="83" cy="24" rx="9" ry="6" fill="#4a3020" opacity="0.39"/><path d="M294 0 Q290 80 300 165" stroke="#120c08" stroke-width="3.5" fill="none" opacity="0.75"/><path d="M99 0 Q100 80 94 165" stroke="#120c08" stroke-width="4.9" fill="none" opacity="0.75"/><path d="M76 0 Q75 80 78 165" stroke="#120c08" stroke-width="2.2" fill="none" opacity="0.75"/><path d="M83 0 Q78 80 75 165" stroke="#120c08" stroke-width="2.3" fill="none" opacity="0.75"/><path d="M289 0 Q290 80 285 165" stroke="#120c08" stroke-width="2.0" fill="none" opacity="0.75"/><path d="M95 0 Q95 80 96 165" stroke="#120c08" stroke-width="3.4" fill="none" opacity="0.75"/><path d="M80 0 Q92 80 84 165" stroke="#120c08" stroke-width="4.7" fill="none" opacity="0.75"/><path d="M379 0 Q368 80 382 165" stroke="#120c08" stroke-width="3.3" fill="none" opacity="0.75"/><path d="M315 0 Q314 80 313 165" stroke="#120c08" stroke-width="1.5" fill="none" opacity="0.75"/><path d="M135 0 Q144 80 130 165" stroke="#120c08" stroke-width="1.4" fill="none" opacity="0.75"/><path d="M358 0 Q363 80 352 165" stroke="#120c08" stroke-width="2.8" fill="none" opacity="0.75"/><path d="M231 0 Q220 80 239 165" stroke="#120c08" stroke-width="3.2" fill="none" opacity="0.75"/><path d="M68 0 Q78 80 65 165" stroke="#120c08" stroke-width="4.0" fill="none" opacity="0.75"/><path d="M59 0 Q47 80 63 165" stroke="#120c08" stroke-width="4.7" fill="none" opacity="0.75"/><path d="M147 0 Q144 80 141 165" stroke="#120c08" stroke-width="4.0" fill="none" opacity="0.75"/><path d="M242 0 Q241 80 240 165" stroke="#120c08" stroke-width="4.2" fill="none" opacity="0.75"/><path d="M317 0 Q329 80 310 165" stroke="#120c08" stroke-width="4.7" fill="none" opacity="0.75"/><path d="M306 0 Q316 80 309 165" stroke="#120c08" stroke-width="4.4" fill="none" opacity="0.75"/><path d="M259 0 Q251 80 258 165" stroke="#120c08" stroke-width="4.1" fill="none" opacity="0.75"/><path d="M13 0 Q4 80 12 165" stroke="#120c08" stroke-width="3.1" fill="none" opacity="0.75"/><path d="M136 0 Q130 80 145 165" stroke="#120c08" stroke-width="1.5" fill="none" opacity="0.75"/><path d="M22 0 Q27 80 27 165" stroke="#120c08" stroke-width="4.1" fill="none" opacity="0.75"/><path d="M163 0 Q154 80 160 165" stroke="#120c08" stroke-width="3.0" fill="none" opacity="0.75"/><path d="M363 0 Q365 80 361 165" stroke="#120c08" stroke-width="4.7" fill="none" opacity="0.75"/><path d="M114 0 Q113 80 122 165" stroke="#120c08" stroke-width="4.6" fill="none" opacity="0.75"/><path d="M280 0 Q270 80 272 165" stroke="#120c08" stroke-width="4.3" fill="none" opacity="0.75"/><path d="M380 0 Q381 80 379 165" stroke="#120c08" stroke-width="2.3" fill="none" opacity="0.75"/><path d="M10 0 Q5 80 12 165" stroke="#120c08" stroke-width="4.6" fill="none" opacity="0.75"/><path d="M175 0 Q171 80 181 165" stroke="#120c08" stroke-width="2.5" fill="none" opacity="0.75"/><path d="M357 0 Q351 80 364 165" stroke="#120c08" stroke-width="4.5" fill="none" opacity="0.75"/><path d="M98 0 Q109 80 98 165" stroke="#120c08" stroke-width="4.5" fill="none" opacity="0.75"/><path d="M43 0 Q44 80 46 165" stroke="#120c08" stroke-width="4.6" fill="none" opacity="0.75"/><path d="M381 0 Q393 80 385 165" stroke="#120c08" stroke-width="4.5" fill="none" opacity="0.75"/><path d="M353 0 Q354 80 354 165" stroke="#120c08" stroke-width="2.5" fill="none" opacity="0.75"/><path d="M66 0 Q65 80 59 165" stroke="#120c08" stroke-width="3.6" fill="none" opacity="0.75"/><path d="M29 0 Q20 80 37 165" stroke="#120c08" stroke-width="3.1" fill="none" opacity="0.75"/><path d="M233 0 Q228 80 238 165" stroke="#120c08" stroke-width="2.8" fill="none" opacity="0.75"/><path d="M10 0 Q8 80 9 165" stroke="#120c08" stroke-width="1.7" fill="none" opacity="0.75"/><path d="M215 0 Q219 80 209 165" stroke="#120c08" stroke-width="1.6" fill="none" opacity="0.75"/><path d="M124 0 Q120 80 121 165" stroke="#120c08" stroke-width="2.8" fill="none" opacity="0.75"/><ellipse cx="29" cy="31" rx="6" ry="6" fill="#9a9690" opacity="0.31"/><ellipse cx="172" cy="28" rx="2" ry="3" fill="#9a9690" opacity="0.51"/><ellipse cx="180" cy="1" rx="5" ry="5" fill="#9a9690" opacity="0.42"/><ellipse cx="107" cy="9" rx="7" ry="6" fill="#9a9690" opacity="0.45"/><ellipse cx="61" cy="33" rx="7" ry="3" fill="#9a9690" opacity="0.38"/><ellipse cx="176" cy="13" rx="7" ry="5" fill="#9a9690" opacity="0.37"/><ellipse cx="34" cy="34" rx="3" ry="5" fill="#9a9690" opacity="0.33"/><ellipse cx="144" cy="20" rx="3" ry="3" fill="#9a9690" opacity="0.49"/><ellipse cx="105" cy="5" rx="5" ry="6" fill="#9a9690" opacity="0.52"/><ellipse cx="36" cy="9" rx="3" ry="5" fill="#9a9690" opacity="0.39"/><ellipse cx="15" cy="37" rx="2" ry="6" fill="#9a9690" opacity="0.25"/><ellipse cx="117" cy="21" rx="4" ry="4" fill="#9a9690" opacity="0.30"/><ellipse cx="198" cy="8" rx="3" ry="5" fill="#9a9690" opacity="0.26"/><ellipse cx="158" cy="6" rx="6" ry="4" fill="#9a9690" opacity="0.52"/><ellipse cx="117" cy="0" rx="6" ry="2" fill="#9a9690" opacity="0.27"/><ellipse cx="155" cy="36" rx="4" ry="4" fill="#9a9690" opacity="0.26"/><ellipse cx="58" cy="33" rx="5" ry="6" fill="#9a9690" opacity="0.47"/><ellipse cx="106" cy="24" rx="6" ry="2" fill="#9a9690" opacity="0.38"/><ellipse cx="134" cy="22" rx="3" ry="5" fill="#9a9690" opacity="0.47"/><ellipse cx="52" cy="22" rx="6" ry="4" fill="#9a9690" opacity="0.33"/><ellipse cx="41" cy="39" rx="2" ry="4" fill="#9a9690" opacity="0.51"/><ellipse cx="65" cy="24" rx="5" ry="5" fill="#9a9690" opacity="0.40"/><ellipse cx="308" cy="35" rx="2" ry="2" fill="#9a9690" opacity="0.24"/><ellipse cx="301" cy="24" rx="5" ry="4" fill="#9a9690" opacity="0.21"/><ellipse cx="284" cy="28" rx="5" ry="4" fill="#9a9690" opacity="0.40"/><ellipse cx="311" cy="21" rx="5" ry="4" fill="#9a9690" opacity="0.29"/><ellipse cx="270" cy="21" rx="5" ry="4" fill="#9a9690" opacity="0.31"/><ellipse cx="275" cy="20" rx="5" ry="4" fill="#9a9690" opacity="0.44"/><ellipse cx="260" cy="31" rx="4" ry="2" fill="#9a9690" opacity="0.39"/><ellipse cx="292" cy="39" rx="2" ry="3" fill="#9a9690" opacity="0.33"/><ellipse cx="257" cy="23" rx="4" ry="5" fill="#9a9690" opacity="0.44"/><ellipse cx="304" cy="29" rx="6" ry="4" fill="#9a9690" opacity="0.27"/></g><rect x="200" y="0" width="205" height="165" fill="#0e0a08" opacity="0.35"/><path d="M0 155 Q100 150 200 156 L405 150 L405 166 L0 166Z" fill="#6a4a2a" opacity="0.3"/><path d="M0 166 H405 V171 H0Z" fill="#5a4a3c"/><path d="M0 200 Q200 192 405 200 L405 227 L0 227Z" fill="#4a3c36" opacity="0.5"/><path d="M91 78 L118 69.6 L152 68.7 L219.4 71.3 L263.3 91.5 L268.4 98.3 L312.3 111.8 L327.5 128.7 L328 132 L329 165.8 L320.7 172.6 L260 172.6 L200 185 L120 178 L82.7 181 L62.5 149 L61.6 115 L65.8 105Z" fill="url(#csb)"/><path d="M77.6 98.3 L104.7 76.3 L152 73.8 L165.4 100 L98 100Z" fill="#101214"/><path d="M152 73.8 L209.3 76.3 L263.3 98.3 L165.4 100Z" fill="#4a5054"/><path d="M136.7 92 L158 93 L160.4 106.7 L140 104Z" fill="#0c0c0c"/><path d="M119 100 L120 176 M100 113 L106 114 M121 116 L129 117" stroke="#9aa0a4" stroke-width="1" fill="none"/><path d="M66 130 Q90 118 100 140 Q104 162 120 166 L66 160Z" fill="#c8ccd0" opacity="0.5"/><path d="M165 130 Q185 116 205 132 L210 170 L165 168Z" fill="#c8ccd0" opacity="0.45"/><path d="M268 98 L312 112 L300 114 Q280 108 262 100Z" fill="#d8dcde"/><path d="M204.3 115.2 L256.6 122 L250 127 L208 122Z" fill="#1a1c1e"/><pattern id="mesh" width="4" height="4" patternUnits="userSpaceOnUse"><rect width="4" height="4" fill="#121212"/><circle cx="2" cy="2" r="1" fill="#2e2e2e"/></pattern><path d="M253.2 130.4 L315.7 130.4 L320.7 164 L253.2 165.8 L248 148Z" fill="url(#mesh)"/><path d="M217.8 143.9 L239.7 143.9 L236 165.8 L220 165.8Z" fill="#121212"/><path d="M200 168 L325 166 L322 174 L205 176Z" fill="#2a2a2a"/><path d="M100 166 L165 171 L165 175 L100 170Z" fill="#9a9ea2"/><ellipse cx="82.7" cy="157" rx="17.6" ry="25" fill="#0a0a0a"/><ellipse cx="84.2" cy="157" rx="12.0" ry="18.0" fill="#1a1a1c" stroke="#3a3a3c" stroke-width="0.6"/><path d="M84.2 157.0L95.8 157.0M84.2 157.0L93.6 167.3M84.2 157.0L87.8 173.6M84.2 157.0L80.6 173.6M84.2 157.0L74.8 167.3M84.2 157.0L72.6 157.0M84.2 157.0L74.8 146.7M84.2 157.0L80.6 140.4M84.2 157.0L87.8 140.4M84.2 157.0L93.6 146.7" stroke="#3c3c40" stroke-width="0.9"/><ellipse cx="84.2" cy="157" rx="2" ry="2.6" fill="#2a2a2a"/><ellipse cx="183.2" cy="161.5" rx="20.6" ry="28" fill="#0a0a0a"/><ellipse cx="184.7" cy="161.5" rx="14.0" ry="20.2" fill="#1a1a1c" stroke="#3a3a3c" stroke-width="0.6"/><path d="M184.7 161.5L198.3 161.5M184.7 161.5L195.7 173.0M184.7 161.5L188.9 180.1M184.7 161.5L180.5 180.1M184.7 161.5L173.7 173.0M184.7 161.5L171.1 161.5M184.7 161.5L173.7 150.0M184.7 161.5L180.5 142.9M184.7 161.5L188.9 142.9M184.7 161.5L195.7 150.0" stroke="#3c3c40" stroke-width="0.9"/><ellipse cx="184.7" cy="161.5" rx="2" ry="2.6" fill="#2a2a2a"/><ellipse cx="288" cy="178" rx="24" ry="8" fill="#101010"/><path d="M70 184 Q200 178 330 184 L330 190 Q200 186 70 192Z" fill="#1e1a18" opacity="0.6"/></svg></div><div class="a" style="left:199px;top:197px;width:1px;height:227px;background:#b8b8b8"></div><div class="a" style="left:0;top:196px;width:399px;height:1px;background:#9a9a9a"></div><div class="a" style="left:428px;top:0;width:1px;height:424px;background:#3f86da"></div><div class="t st" style="left:28.5px;top:25px;font-size:22px;color:#ffffff;font-weight:400;font-style:normal;letter-spacing:0px;-webkit-text-stroke:0.8px #0e3440">Sous titre</div><div class="t st" style="left:226px;top:25px;font-size:22px;color:#ffffff;font-weight:400;font-style:normal;letter-spacing:0px;-webkit-text-stroke:0.8px #bde0f1">Sous titre</div><div class="t st" style="left:428px;top:25px;font-size:22px;color:#111111;font-weight:400;font-style:normal;letter-spacing:0px;-webkit-text-stroke:0.5px #fff">Sous titre</div><div class="t sm" style="left:29px;top:57px;font-size:8.5px;color:#e6ecec;font-weight:400;font-style:normal;letter-spacing:0px;">Cum sociis natoque penatibus et</div><div class="t sm" style="left:29px;top:67px;font-size:8.5px;color:#e6ecec;font-weight:400;font-style:normal;letter-spacing:0px;">magnis dis parturient montes,</div><div class="t sm" style="left:29px;top:77px;font-size:8.5px;color:#e6ecec;font-weight:400;font-style:normal;letter-spacing:0px;">nascetur ridiculus mus. Nullam</div><div class="t sm" style="left:29px;top:87px;font-size:8.5px;color:#e6ecec;font-weight:400;font-style:normal;letter-spacing:0px;">eleifend pharetra felis. Mauris</div><div class="t sm" style="left:29px;top:97px;font-size:8.5px;color:#e6ecec;font-weight:400;font-style:normal;letter-spacing:0px;">nibh velit, tristique ac, lacinia in,</div><div class="t sm" style="left:29px;top:107px;font-size:8.5px;color:#e6ecec;font-weight:400;font-style:normal;letter-spacing:0px;">scelerisque et, ante. Donec</div><div class="t sm" style="left:29px;top:125px;font-size:8.5px;color:#e6ecec;font-weight:400;font-style:normal;letter-spacing:0px;">Cum sociis natoque penatibus et</div><div class="t sm" style="left:29px;top:135px;font-size:8.5px;color:#e6ecec;font-weight:400;font-style:normal;letter-spacing:0px;">magnis dis parturient montes,</div><div class="t sm" style="left:29px;top:145px;font-size:8.5px;color:#e6ecec;font-weight:400;font-style:normal;letter-spacing:0px;">nascetur ridiculus mus. Nullam</div><div class="t sm" style="left:29px;top:155px;font-size:8.5px;color:#e6ecec;font-weight:400;font-style:normal;letter-spacing:0px;">eleifend pharetra felis. Mauris</div><div class="t sm" style="left:29px;top:165px;font-size:8.5px;color:#e6ecec;font-weight:400;font-style:normal;letter-spacing:0px;">nibh velit, tristique ac, lacinia in,</div><div class="t sm" style="left:29px;top:175px;font-size:8.5px;color:#e6ecec;font-weight:400;font-style:normal;letter-spacing:0px;">scelerisque et, ante. Donec</div><div class="a" style="left:29px;top:58px;width:131px;height:142px;border:1px solid #3672c4"></div><svg style="left:227.0px;top:68.5px" width="15.0" height="15.0" viewBox="0 0 15 15"><circle cx="7.5" cy="7.5" r="6.9" fill="none" stroke="#f4fbff" stroke-width="1"/><g transform="scale(0.3409)"><path d="M14 10.5 Q17 8.5 19.5 10 L21.5 15 Q22 16.5 20.5 17.5 L18.5 18.5 Q19 23 24.5 27 L26 25.5 Q27.5 24.3 29 25.2 L32.5 29 Q33.5 30.5 32 32 Q29 35.5 25 34.5 Q17 32 13.5 24 Q10.5 16 14 10.5Z" fill="#fff"/></g></svg><svg style="left:227.0px;top:118.5px" width="15.0" height="15.0" viewBox="0 0 15 15"><circle cx="7.5" cy="7.5" r="6.9" fill="none" stroke="#f4fbff" stroke-width="1"/><g transform="scale(0.3409)"><path d="M14 10.5 Q17 8.5 19.5 10 L21.5 15 Q22 16.5 20.5 17.5 L18.5 18.5 Q19 23 24.5 27 L26 25.5 Q27.5 24.3 29 25.2 L32.5 29 Q33.5 30.5 32 32 Q29 35.5 25 34.5 Q17 32 13.5 24 Q10.5 16 14 10.5Z" fill="#fff"/></g></svg><div class="t sm" style="left:228px;top:89px;font-size:8.5px;color:#ffffff;font-weight:400;font-style:normal;letter-spacing:0px;">Cum sociis natoque penatibus et</div><div class="a" style="left:227px;top:90px;width:131px;height:12px;border:1px solid #3672c4"></div><div class="t sm" style="left:228px;top:139px;font-size:8.5px;color:#ffffff;font-weight:400;font-style:normal;letter-spacing:0px;">Cum sociis natoque penatibus et</div><div class="a" style="left:227px;top:140px;width:131px;height:12px;border:1px solid #3672c4"></div><div class="a" style="left:429px;top:68.0px;width:15px;height:15px;background:#000"></div><div class="t sm" style="left:446.5px;top:70.0px;font-size:8.5px;color:#111;font-weight:400;font-style:normal;letter-spacing:0px;">Cum sociis natoque penatibus et</div><div class="a" style="left:446px;top:72.0px;width:131px;height:11px;border:1px solid #3672c4"></div><div class="a" style="left:429px;top:100.5px;width:15px;height:15px;background:#000"></div><div class="t sm" style="left:446.5px;top:102.5px;font-size:8.5px;color:#111;font-weight:400;font-style:normal;letter-spacing:0px;">Cum sociis natoque penatibus et</div><div class="a" style="left:446px;top:104.5px;width:131px;height:11px;border:1px solid #3672c4"></div><div class="a" style="left:429px;top:133.0px;width:15px;height:15px;background:#000"></div><div class="t sm" style="left:446.5px;top:135.0px;font-size:8.5px;color:#111;font-weight:400;font-style:normal;letter-spacing:0px;">Cum sociis natoque penatibus et</div><div class="a" style="left:446px;top:137.0px;width:131px;height:11px;border:1px solid #3672c4"></div><div class="a" style="left:429px;top:165.5px;width:15px;height:15px;background:#000"></div><div class="t sm" style="left:446.5px;top:167.5px;font-size:8.5px;color:#111;font-weight:400;font-style:normal;letter-spacing:0px;">Cum sociis natoque penatibus et</div><div class="a" style="left:446px;top:169.5px;width:131px;height:11px;border:1px solid #3672c4"></div><div class="t" style="left:427px;top:227.5px;font-size:28px;color:#bde0f1;font-weight:700;font-style:italic;letter-spacing:0px;">"</div><div class="t" style="left:558.5px;top:385.5px;font-size:28px;color:#bde0f1;font-weight:700;font-style:italic;letter-spacing:0px;">"</div><div class="t" style="left:428px;top:268.8px;font-size:32px;color:#bde0f1;font-weight:700;font-style:italic;letter-spacing:-0.5px;">Citation à</div><div class="t" style="left:428px;top:306.8px;font-size:32px;color:#bde0f1;font-weight:700;font-style:italic;letter-spacing:-0.5px;">Définir ici</div></div>
<div class="a" style="left:635px;top:735px;width:601px;height:426px;border:1px solid #b0b0b0"></div>
<div class="a" style="left:630px;top:731px;width:205px;height:2px;background:#3a6a9c"></div>
<div class="a th" style="left:241px;top:209.5px;width:598px;height:423px;overflow:hidden;transform:scale(0.2648);transform-origin:0 0"><div class="a" style="left:0;top:0;width:598px;height:423px;background:#fff"></div><div class="a" style="left:200px;top:0px;width:198px;height:423px;background:#0e3440"></div><div class="a" style="left:398px;top:0px;width:200px;height:186px;overflow:hidden"><svg style="left:0;top:0" width="200" height="186" viewBox="0 0 206 193" preserveAspectRatio="xMinYMin slice"><defs><linearGradient id="cfbg" x1="0" y1="0" x2="0" y2="1"><stop offset="0" stop-color="#2c2e2a"/><stop offset="0.28" stop-color="#34342e"/><stop offset="0.31" stop-color="#5e5040"/><stop offset="0.37" stop-color="#5a4c3e"/><stop offset="0.40" stop-color="#3a3632"/><stop offset="1" stop-color="#3c3936"/></linearGradient><linearGradient id="cfw" x1="0" y1="0" x2="0" y2="1"><stop offset="0" stop-color="#6a7272"/><stop offset="0.8" stop-color="#4a5252"/><stop offset="1" stop-color="#2a2e2e"/></linearGradient><linearGradient id="cfb" x1="0" y1="0" x2="1" y2="1"><stop offset="0" stop-color="#f2f5f5"/><stop offset="0.6" stop-color="#e6eaea"/><stop offset="1" stop-color="#c4c8c8"/></linearGradient></defs><rect width="206" height="193" fill="url(#cfbg)"/><path d="M52 33 Q60 20 76 6 L206 6 L206 193 L42 193 Q40 160 44 130 Q46 110 49 96 Q47 60 52 33Z" fill="url(#cfb)"/><path d="M78 6.5 L206 6.5 L206 30.4 L82 30.4 Q78 20 78 6.5Z" fill="url(#cfw)"/><path d="M62 0 L70 0 L80 28 L72 30Z" fill="#dfe3e3"/><path d="M33.2 16.3 L44.5 9.3 L58.6 8.6 L60 31.8 L54.3 34.6 L44.5 26.2 L34.6 22Z" fill="#121212"/><path d="M52 96 Q46 110 40 120 L37 193 L46 193 Q44 160 46 128 Q48 110 52 96Z" fill="#111"/><path d="M55.7 71.2 L62.8 81.1 L96.6 88.1 L116.3 92.4 L136 112 L124.8 110.7 L96.6 107.9 L68.4 105 L57.2 93.8Z" fill="#0e1010"/><path d="M62 82 L96 89 L114 93 L124 104 L96 101 L66 96Z" fill="#b8c0c2"/><path d="M116 92 Q150 88 206 87" stroke="#6a6e6e" stroke-width="0.8" fill="none"/><path d="M118 96 Q160 108 206 104 L206 117 Q170 122 140 114Z" fill="#9a9ea2"/><path d="M144.5 120.5 L206 117.7 L206 193 L124 193 L133 152Z" fill="#0c0c0e"/><path d="M62.8 140.3 L99.4 141.7 L88.1 179.7 L61.4 175.5Z" fill="#0a0a0a"/><path d="M51.5 177 Q90 182 124.8 186 L124.8 193 L52 193Z" fill="#1a1a1a"/></svg></div><div class="a" style="left:524px;top:146px;width:74px;height:82px;background:#bde0f1"></div><svg style="left:65px;top:9px" width="66.0" height="57.0" viewBox="0 0 66 57"><rect x="0.8" y="2.3" width="54" height="54" rx="11" fill="#9cc3c2" stroke="#1b3a4e" stroke-width="1.8"/><path d="M4 40 Q10 10 50 4 L12 4 Q2 4 2 14Z" fill="#abd0cf"/><path d="M7.5 15.4H43M7.5 24.4H38.5M7.5 33.8H34M7.5 42.9H35" stroke="#1b3a4e" stroke-width="1.9"/><path d="M49.8 9.8 L34.2 32.7 L34.7 42.5 L44 40 L58.6 15.9Z" fill="#a9cfd6" stroke="#1b3a4e" stroke-width="1.8" stroke-linejoin="round"/><path d="M49.8 9.8 L54.6 1 L65.2 7.8 L58.6 15.9Z" fill="#f1e6c4" stroke="#1b3a4e" stroke-width="1.8" stroke-linejoin="round"/></svg><svg style="left:529px;top:156px" width="66.0" height="57.0" viewBox="0 0 66 57"><rect x="0.8" y="2.3" width="54" height="54" rx="11" fill="#9cc3c2" stroke="#1b3a4e" stroke-width="1.8"/><path d="M4 40 Q10 10 50 4 L12 4 Q2 4 2 14Z" fill="#abd0cf"/><path d="M7.5 15.4H43M7.5 24.4H38.5M7.5 33.8H34M7.5 42.9H35" stroke="#1b3a4e" stroke-width="1.9"/><path d="M49.8 9.8 L34.2 32.7 L34.7 42.5 L44 40 L58.6 15.9Z" fill="#a9cfd6" stroke="#1b3a4e" stroke-width="1.8" stroke-linejoin="round"/><path d="M49.8 9.8 L54.6 1 L65.2 7.8 L58.6 15.9Z" fill="#f1e6c4" stroke="#1b3a4e" stroke-width="1.8" stroke-linejoin="round"/></svg><div class="t" style="left:18.5px;top:124.5px;font-size:28px;color:#2a1d17;font-weight:700;font-style:italic;letter-spacing:0px;">"</div><div class="t" style="left:149.5px;top:283.5px;font-size:28px;color:#2a1d17;font-weight:700;font-style:italic;letter-spacing:0px;">"</div><div class="t" style="left:20px;top:164.6px;font-size:32px;color:#2a1d17;font-weight:700;font-style:italic;letter-spacing:-0.5px;">Citation à</div><div class="t" style="left:20px;top:203.8px;font-size:32px;color:#2a1d17;font-weight:700;font-style:italic;letter-spacing:-0.5px;">Définir ici</div><div class="t st" style="left:227px;top:59px;font-size:22px;color:#ffffff;font-weight:400;font-style:normal;letter-spacing:0px;-webkit-text-stroke:0.8px #0e3440">Sous titre</div><svg style="left:228.0px;top:102.5px" width="15.0" height="15.0" viewBox="0 0 15 15"><circle cx="7.5" cy="7.5" r="6.9" fill="none" stroke="#d6dcdc" stroke-width="1"/><g transform="scale(0.3409)"><path d="M14 10.5 Q17 8.5 19.5 10 L21.5 15 Q22 16.5 20.5 17.5 L18.5 18.5 Q19 23 24.5 27 L26 25.5 Q27.5 24.3 29 25.2 L32.5 29 Q33.5 30.5 32 32 Q29 35.5 25 34.5 Q17 32 13.5 24 Q10.5 16 14 10.5Z" fill="#fff"/></g></svg><svg style="left:228.0px;top:152.5px" width="15.0" height="15.0" viewBox="0 0 15 15"><circle cx="7.5" cy="7.5" r="6.9" fill="none" stroke="#d6dcdc" stroke-width="1"/><g transform="scale(0.3409)"><path d="M14 10.5 Q17 8.5 19.5 10 L21.5 15 Q22 16.5 20.5 17.5 L18.5 18.5 Q19 23 24.5 27 L26 25.5 Q27.5 24.3 29 25.2 L32.5 29 Q33.5 30.5 32 32 Q29 35.5 25 34.5 Q17 32 13.5 24 Q10.5 16 14 10.5Z" fill="#fff"/></g></svg><svg style="left:228.0px;top:203.5px" width="15.0" height="15.0" viewBox="0 0 15 15"><circle cx="7.5" cy="7.5" r="6.9" fill="none" stroke="#d6dcdc" stroke-width="1"/><g transform="scale(0.3409)"><path d="M14 10.5 Q17 8.5 19.5 10 L21.5 15 Q22 16.5 20.5 17.5 L18.5 18.5 Q19 23 24.5 27 L26 25.5 Q27.5 24.3 29 25.2 L32.5 29 Q33.5 30.5 32 32 Q29 35.5 25 34.5 Q17 32 13.5 24 Q10.5 16 14 10.5Z" fill="#fff"/></g></svg><svg style="left:228.0px;top:253.5px" width="15.0" height="15.0" viewBox="0 0 15 15"><circle cx="7.5" cy="7.5" r="6.9" fill="none" stroke="#d6dcdc" stroke-width="1"/><g transform="scale(0.3409)"><path d="M14 10.5 Q17 8.5 19.5 10 L21.5 15 Q22 16.5 20.5 17.5 L18.5 18.5 Q19 23 24.5 27 L26 25.5 Q27.5 24.3 29 25.2 L32.5 29 Q33.5 30.5 32 32 Q29 35.5 25 34.5 Q17 32 13.5 24 Q10.5 16 14 10.5Z" fill="#fff"/></g></svg><div class="t sm" style="left:228.5px;top:124px;font-size:8.5px;color:#e8eeee;font-weight:400;font-style:normal;letter-spacing:0px;">Cum sociis natoque penatibus et</div><div class="t sm" style="left:228.5px;top:174px;font-size:8.5px;color:#e8eeee;font-weight:400;font-style:normal;letter-spacing:0px;">Cum sociis natoque penatibus et</div><div class="t sm" style="left:228.5px;top:225px;font-size:8.5px;color:#e8eeee;font-weight:400;font-style:normal;letter-spacing:0px;">Cum sociis natoque penatibus et</div><div class="t sm" style="left:228.5px;top:275px;font-size:8.5px;color:#e8eeee;font-weight:400;font-style:normal;letter-spacing:0px;">Cum sociis natoque penatibus et</div><div class="t sm" style="left:228.5px;top:285px;font-size:8.5px;color:#e8eeee;font-weight:400;font-style:normal;letter-spacing:0px;">Cum sociis natoque penatibus et</div><div class="a" style="left:228px;top:320px;width:56px;height:56px;overflow:hidden;background:#eceae6"><svg style="left:0;top:0" width="56" height="56" viewBox="0 0 56 56" preserveAspectRatio="none"><rect width="56" height="56" fill="#ece8e4"/><ellipse cx="7" cy="3.5" rx="6" ry="3.5" fill="#e23a2c"/><rect x="15" y="0" width="19" height="8" rx="3" fill="#f2cc30"/><circle cx="40" cy="6" r="2" fill="#3a3040"/><ellipse cx="48" cy="4.5" rx="4" ry="3.5" fill="#2a2030"/><circle cx="54" cy="2" r="3" fill="#e04030"/><circle cx="2" cy="12" r="3" fill="#e04030"/><ellipse cx="9" cy="12" rx="4" ry="3" fill="#2a1c28"/><ellipse cx="17" cy="10" rx="3" ry="4" fill="#e0503a"/><rect x="0" y="17" width="14" height="19" rx="2" fill="#f0c420"/><path d="M2 28 L12 24" stroke="#8aa030" stroke-width="2"/><ellipse cx="5" cy="44" rx="6" ry="5" fill="#e84838"/><ellipse cx="15" cy="50" rx="5" ry="4" fill="#2a2028"/><circle cx="22" cy="48" r="2" fill="#3a3048"/><ellipse cx="26" cy="53" rx="6" ry="4" fill="#e86a60"/><circle cx="33" cy="52" r="2.5" fill="#2a2028"/><circle cx="37" cy="56" r="3" fill="#e04048"/><circle cx="48" cy="50" r="5" fill="#e23a2c"/><ellipse cx="54" cy="48" rx="4" ry="5" fill="#1e1e1e"/><path d="M44 56 L56 42" stroke="#1e1e1e" stroke-width="3"/><path d="M52 10 Q56 16 54 28 Q50 22 48 14Z" fill="#3a5a2a"/><ellipse cx="54" cy="20" rx="3" ry="4" fill="#d83028"/><path d="M54 32 Q50 40 54 44" stroke="#2a3a2a" stroke-width="3" fill="none"/><circle cx="34" cy="30" r="19.5" fill="#f4eef0"/><circle cx="34" cy="30" r="17.5" fill="#8a3050"/><circle cx="21.4" cy="37.2" r="2.6" fill="#2a1828"/><circle cx="20.1" cy="34.0" r="2.6" fill="#2a1828"/><circle cx="19.5" cy="30.5" r="2.6" fill="#2a1828"/><circle cx="19.8" cy="27.0" r="2.6" fill="#2a1828"/><circle cx="21.0" cy="23.6" r="2.6" fill="#2a1828"/><circle cx="22.9" cy="20.7" r="2.6" fill="#2a1828"/><circle cx="25.5" cy="18.3" r="2.6" fill="#2a1828"/><circle cx="28.6" cy="16.6" r="2.6" fill="#2a1828"/><circle cx="32.0" cy="15.6" r="2.6" fill="#2a1828"/><circle cx="26.3" cy="36.4" r="2.4" fill="#e03048"/><circle cx="26.3" cy="36.4" r="0.9" fill="#7a1a28"/><circle cx="24.8" cy="33.9" r="2.4" fill="#e03048"/><circle cx="24.8" cy="33.9" r="0.9" fill="#7a1a28"/><circle cx="24.1" cy="31.0" r="2.4" fill="#e03048"/><circle cx="24.1" cy="31.0" r="0.9" fill="#7a1a28"/><circle cx="24.2" cy="28.1" r="2.4" fill="#e03048"/><circle cx="24.2" cy="28.1" r="0.9" fill="#7a1a28"/><circle cx="25.2" cy="25.3" r="2.4" fill="#e03048"/><circle cx="25.2" cy="25.3" r="0.9" fill="#7a1a28"/><circle cx="26.9" cy="22.9" r="2.4" fill="#e03048"/><circle cx="26.9" cy="22.9" r="0.9" fill="#7a1a28"/><circle cx="29.3" cy="21.2" r="2.4" fill="#e03048"/><circle cx="29.3" cy="21.2" r="0.9" fill="#7a1a28"/><circle cx="32.1" cy="20.2" r="2.4" fill="#e03048"/><circle cx="32.1" cy="20.2" r="0.9" fill="#7a1a28"/><path d="M27 42 Q30 28 44 17" stroke="#4a9a3a" stroke-width="3" fill="none"/><path d="M33 30 L46 24 L50 34 L42 44 L34 42Z" fill="#f2c040"/><path d="M38 34 L46 32 L45 40 L39 42Z" fill="#f8e040"/><circle cx="40" cy="28" r="2.5" fill="#f0a060"/><circle cx="44" cy="30" r="2" fill="#f4b070"/><path d="M40 44 Q48 44 50 36 Q50 46 42 47Z" fill="#e8508a"/></svg></div><div class="t" style="left:425px;top:234.3px;font-size:33px;color:#2a1d17;font-weight:700;font-style:normal;letter-spacing:-0.8px;">TITRE</div><div class="t st" style="left:425px;top:265.5px;font-size:21.7px;color:#2a1d17;font-weight:400;font-style:normal;letter-spacing:0px;-webkit-text-stroke:0.5px #fff">Sous titre</div><div class="t sm" style="left:425.5px;top:297.5px;font-size:8.5px;color:#2a1d17;font-weight:400;font-style:normal;letter-spacing:0px;">Cum sociis natoque penatibus et</div><div class="t sm" style="left:425.5px;top:307.5px;font-size:8.5px;color:#2a1d17;font-weight:400;font-style:normal;letter-spacing:0px;">magnis dis parturient montes,</div><div class="t sm" style="left:425.5px;top:317.5px;font-size:8.5px;color:#2a1d17;font-weight:400;font-style:normal;letter-spacing:0px;">nascetur ridiculus mus. Nullam</div><div class="t sm" style="left:425.5px;top:327.5px;font-size:8.5px;color:#2a1d17;font-weight:400;font-style:normal;letter-spacing:0px;">eleifend pharetra felis. Mauris</div><div class="t sm" style="left:425.5px;top:337.5px;font-size:8.5px;color:#2a1d17;font-weight:400;font-style:normal;letter-spacing:0px;">nibh velit, tristique ac, lacinia in,</div><div class="t sm" style="left:425.5px;top:347.5px;font-size:8.5px;color:#2a1d17;font-weight:400;font-style:normal;letter-spacing:0px;">scelerisque et, ante. Donec</div></div>
<div class="a th" style="left:81px;top:373px;width:599px;height:424px;overflow:hidden;transform:scale(0.2620);transform-origin:0 0"><div class="a" style="left:0;top:0;width:599px;height:424px;background:#fff"></div><div class="a" style="left:0;top:0;width:199px;height:197px;background:#0e3440"></div><div class="a" style="left:199px;top:0px;width:200px;height:197px;background:#bde0f1"></div><div class="a" style="left:0px;top:197px;width:399px;height:228px;overflow:hidden"><svg style="left:0;top:0" width="399" height="228" viewBox="0 0 405 227" preserveAspectRatio="none"><defs><linearGradient id="csbg" x1="0" y1="0" x2="0" y2="1"><stop offset="0" stop-color="#3a3028"/><stop offset="0.3" stop-color="#30241a"/><stop offset="0.6" stop-color="#261c16"/><stop offset="0.72" stop-color="#2a2019"/><stop offset="0.73" stop-color="#5a4636"/><stop offset="0.755" stop-color="#4a3e36"/><stop offset="0.77" stop-color="#3a3532"/><stop offset="1" stop-color="#413a36"/></linearGradient><linearGradient id="csb" x1="0" y1="0" x2="0" y2="1"><stop offset="0" stop-color="#f2f4f6"/><stop offset="0.7" stop-color="#e2e6ea"/><stop offset="1" stop-color="#c8ccd0"/></linearGradient></defs><filter id="csblur" x="-5%" y="-5%" width="110%" height="110%"><feGaussianBlur stdDeviation="1.6"/></filter><rect width="405" height="227" fill="url(#csbg)"/><g filter="url(#csblur)"><ellipse cx="183" cy="92" rx="11" ry="6" fill="#5e3c20" opacity="0.46"/><ellipse cx="77" cy="133" rx="7" ry="7" fill="#6a4426" opacity="0.23"/><ellipse cx="123" cy="15" rx="10" ry="8" fill="#5a3a22" opacity="0.38"/><ellipse cx="160" cy="75" rx="10" ry="8" fill="#5e3c20" opacity="0.20"/><ellipse cx="214" cy="10" rx="5" ry="5" fill="#5a3a22" opacity="0.26"/><ellipse cx="132" cy="98" rx="5" ry="5" fill="#7a4e2a" opacity="0.35"/><ellipse cx="268" cy="75" rx="6" ry="10" fill="#5a3a22" opacity="0.25"/><ellipse cx="128" cy="38" rx="6" ry="3" fill="#5a3a22" opacity="0.32"/><ellipse cx="343" cy="64" rx="12" ry="9" fill="#5a3a22" opacity="0.16"/><ellipse cx="375" cy="9" rx="6" ry="8" fill="#4a3020" opacity="0.13"/><ellipse cx="255" cy="128" rx="5" ry="4" fill="#7a4e2a" opacity="0.12"/><ellipse cx="166" cy="152" rx="4" ry="8" fill="#5a3a22" opacity="0.22"/><ellipse cx="323" cy="29" rx="8" ry="6" fill="#6a4426" opacity="0.30"/><ellipse cx="312" cy="69" rx="6" ry="6" fill="#6a4426" opacity="0.12"/><ellipse cx="350" cy="161" rx="8" ry="10" fill="#5a3a22" opacity="0.16"/><ellipse cx="160" cy="141" rx="9" ry="4" fill="#6a4426" opacity="0.26"/><ellipse cx="105" cy="127" rx="6" ry="5" fill="#5a3a22" opacity="0.22"/><ellipse cx="85" cy="105" rx="3" ry="6" fill="#5e3c20" opacity="0.34"/><ellipse cx="388" cy="80" rx="8" ry="9" fill="#6a4426" opacity="0.23"/><ellipse cx="126" cy="38" rx="8" ry="8" fill="#6a4426" opacity="0.42"/><ellipse cx="381" cy="32" rx="12" ry="9" fill="#5e3c20" opacity="0.13"/><ellipse cx="19" cy="18" rx="8" ry="5" fill="#8a5a30" opacity="0.41"/><ellipse cx="104" cy="136" rx="8" ry="5" fill="#6a4426" opacity="0.48"/><ellipse cx="396" cy="21" rx="7" ry="8" fill="#5e3c20" opacity="0.23"/><ellipse cx="113" cy="151" rx="5" ry="3" fill="#7a4e2a" opacity="0.32"/><ellipse cx="101" cy="8" rx="6" ry="7" fill="#6a4426" opacity="0.23"/><ellipse cx="56" cy="74" rx="6" ry="8" fill="#5e3c20" opacity="0.38"/><ellipse cx="57" cy="6" rx="3" ry="9" fill="#8a5a30" opacity="0.29"/><ellipse cx="14" cy="99" rx="4" ry="3" fill="#7a4e2a" opacity="0.30"/><ellipse cx="405" cy="12" rx="8" ry="8" fill="#8a5a30" opacity="0.25"/><ellipse cx="52" cy="159" rx="6" ry="4" fill="#4a3020" opacity="0.47"/><ellipse cx="353" cy="69" rx="10" ry="9" fill="#5e3c20" opacity="0.12"/><ellipse cx="268" cy="63" rx="3" ry="4" fill="#5a3a22" opacity="0.24"/><ellipse cx="402" cy="145" rx="10" ry="6" fill="#8a5a30" opacity="0.24"/><ellipse cx="185" cy="76" rx="8" ry="7" fill="#5e3c20" opacity="0.21"/><ellipse cx="244" cy="79" rx="5" ry="8" fill="#4a3020" opacity="0.26"/><ellipse cx="267" cy="80" rx="11" ry="6" fill="#6a4426" opacity="0.24"/><ellipse cx="82" cy="28" rx="11" ry="8" fill="#4a3020" opacity="0.35"/><ellipse cx="98" cy="67" rx="5" ry="7" fill="#6a4426" opacity="0.46"/><ellipse cx="156" cy="96" rx="6" ry="4" fill="#4a3020" opacity="0.31"/><ellipse cx="363" cy="7" rx="4" ry="10" fill="#6a4426" opacity="0.14"/><ellipse cx="191" cy="153" rx="10" ry="6" fill="#5e3c20" opacity="0.35"/><ellipse cx="128" cy="138" rx="12" ry="6" fill="#5a3a22" opacity="0.45"/><ellipse cx="113" cy="100" rx="9" ry="5" fill="#7a4e2a" opacity="0.29"/><ellipse cx="321" cy="3" rx="4" ry="6" fill="#5a3a22" opacity="0.26"/><ellipse cx="108" cy="129" rx="10" ry="10" fill="#5a3a22" opacity="0.33"/><ellipse cx="255" cy="108" rx="10" ry="10" fill="#8a5a30" opacity="0.16"/><ellipse cx="334" cy="42" rx="9" ry="8" fill="#5e3c20" opacity="0.25"/><ellipse cx="73" cy="45" rx="6" ry="8" fill="#5e3c20" opacity="0.35"/><ellipse cx="404" cy="26" rx="11" ry="8" fill="#6a4426" opacity="0.14"/><ellipse cx="378" cy="119" rx="4" ry="6" fill="#8a5a30" opacity="0.28"/><ellipse cx="3" cy="91" rx="9" ry="7" fill="#7a4e2a" opacity="0.34"/><ellipse cx="264" cy="34" rx="9" ry="9" fill="#8a5a30" opacity="0.29"/><ellipse cx="50" cy="40" rx="7" ry="4" fill="#7a4e2a" opacity="0.36"/><ellipse cx="320" cy="53" rx="11" ry="9" fill="#7a4e2a" opacity="0.21"/><ellipse cx="15" cy="56" rx="7" ry="5" fill="#5a3a22" opacity="0.27"/><ellipse cx="351" cy="71" rx="3" ry="7" fill="#8a5a30" opacity="0.26"/><ellipse cx="57" cy="25" rx="8" ry="8" fill="#8a5a30" opacity="0.41"/><ellipse cx="383" cy="81" rx="12" ry="4" fill="#6a4426" opacity="0.20"/><ellipse cx="226" cy="137" rx="8" ry="4" fill="#5e3c20" opacity="0.27"/><ellipse cx="227" cy="51" rx="6" ry="9" fill="#5e3c20" opacity="0.16"/><ellipse cx="345" cy="160" rx="8" ry="7" fill="#6a4426" opacity="0.19"/><ellipse cx="46" cy="1" rx="6" ry="7" fill="#5a3a22" opacity="0.35"/><ellipse cx="162" cy="132" rx="8" ry="6" fill="#8a5a30" opacity="0.25"/><ellipse cx="377" cy="76" rx="11" ry="9" fill="#4a3020" opacity="0.17"/><ellipse cx="192" cy="21" rx="7" ry="9" fill="#4a3020" opacity="0.36"/><ellipse cx="44" cy="69" rx="3" ry="5" fill="#8a5a30" opacity="0.43"/><ellipse cx="9" cy="32" rx="5" ry="8" fill="#7a4e2a" opacity="0.42"/><ellipse cx="99" cy="82" rx="7" ry="7" fill="#5e3c20" opacity="0.39"/><ellipse cx="291" cy="116" rx="11" ry="3" fill="#8a5a30" opacity="0.19"/><ellipse cx="214" cy="26" rx="5" ry="7" fill="#8a5a30" opacity="0.16"/><ellipse cx="88" cy="90" rx="8" ry="4" fill="#8a5a30" opacity="0.39"/><ellipse cx="141" cy="30" rx="8" ry="9" fill="#6a4426" opacity="0.27"/><ellipse cx="404" cy="146" rx="4" ry="5" fill="#8a5a30" opacity="0.14"/><ellipse cx="157" cy="72" rx="11" ry="7" fill="#8a5a30" opacity="0.24"/><ellipse cx="163" cy="113" rx="3" ry="4" fill="#8a5a30" opacity="0.31"/><ellipse cx="332" cy="60" rx="9" ry="7" fill="#7a4e2a" opacity="0.21"/><ellipse cx="278" cy="31" rx="4" ry="4" fill="#5a3a22" opacity="0.26"/><ellipse cx="248" cy="149" rx="7" ry="4" fill="#5a3a22" opacity="0.16"/><ellipse cx="340" cy="163" rx="11" ry="4" fill="#5a3a22" opacity="0.14"/><ellipse cx="276" cy="13" rx="4" ry="6" fill="#4a3020" opacity="0.21"/><ellipse cx="174" cy="99" rx="3" ry="8" fill="#6a4426" opacity="0.25"/><ellipse cx="184" cy="122" rx="7" ry="4" fill="#6a4426" opacity="0.23"/><ellipse cx="321" cy="53" rx="4" ry="9" fill="#8a5a30" opacity="0.29"/><ellipse cx="231" cy="32" rx="8" ry="5" fill="#7a4e2a" opacity="0.17"/><ellipse cx="47" cy="123" rx="4" ry="10" fill="#6a4426" opacity="0.47"/><ellipse cx="356" cy="115" rx="10" ry="8" fill="#4a3020" opacity="0.16"/><ellipse cx="75" cy="132" rx="6" ry="4" fill="#7a4e2a" opacity="0.50"/><ellipse cx="366" cy="8" rx="5" ry="10" fill="#7a4e2a" opacity="0.18"/><ellipse cx="267" cy="94" rx="8" ry="6" fill="#4a3020" opacity="0.24"/><ellipse cx="284" cy="126" rx="12" ry="3" fill="#5e3c20" opacity="0.14"/><ellipse cx="96" cy="73" rx="8" ry="8" fill="#8a5a30" opacity="0.31"/><ellipse cx="40" cy="41" rx="11" ry="7" fill="#5e3c20" opacity="0.32"/><ellipse cx="211" cy="140" rx="4" ry="6" fill="#8a5a30" opacity="0.13"/><ellipse cx="242" cy="125" rx="3" ry="10" fill="#6a4426" opacity="0.19"/><ellipse cx="393" cy="141" rx="8" ry="7" fill="#4a3020" opacity="0.29"/><ellipse cx="170" cy="87" rx="8" ry="6" fill="#7a4e2a" opacity="0.34"/><ellipse cx="109" cy="153" rx="9" ry="8" fill="#5a3a22" opacity="0.20"/><ellipse cx="99" cy="7" rx="4" ry="8" fill="#4a3020" opacity="0.22"/><ellipse cx="128" cy="66" rx="8" ry="8" fill="#7a4e2a" opacity="0.22"/><ellipse cx="367" cy="71" rx="7" ry="10" fill="#6a4426" opacity="0.13"/><ellipse cx="40" cy="134" rx="11" ry="4" fill="#6a4426" opacity="0.38"/><ellipse cx="47" cy="103" rx="7" ry="4" fill="#5a3a22" opacity="0.31"/><ellipse cx="63" cy="60" rx="4" ry="6" fill="#5e3c20" opacity="0.28"/><ellipse cx="236" cy="69" rx="10" ry="7" fill="#6a4426" opacity="0.29"/><ellipse cx="297" cy="39" rx="4" ry="9" fill="#5e3c20" opacity="0.23"/><ellipse cx="145" cy="45" rx="9" ry="7" fill="#5e3c20" opacity="0.26"/><ellipse cx="113" cy="40" rx="12" ry="7" fill="#8a5a30" opacity="0.47"/><ellipse cx="356" cy="7" rx="4" ry="5" fill="#4a3020" opacity="0.12"/><ellipse cx="15" cy="37" rx="6" ry="8" fill="#8a5a30" opacity="0.25"/><ellipse cx="95" cy="162" rx="7" ry="5" fill="#7a4e2a" opacity="0.30"/><ellipse cx="302" cy="138" rx="4" ry="4" fill="#5e3c20" opacity="0.27"/><ellipse cx="311" cy="73" rx="10" ry="6" fill="#6a4426" opacity="0.19"/><ellipse cx="265" cy="163" rx="6" ry="7" fill="#8a5a30" opacity="0.27"/><ellipse cx="74" cy="108" rx="8" ry="6" fill="#7a4e2a" opacity="0.22"/><ellipse cx="34" cy="93" rx="7" ry="8" fill="#7a4e2a" opacity="0.45"/><ellipse cx="4" cy="51" rx="11" ry="7" fill="#8a5a30" opacity="0.29"/><ellipse cx="294" cy="115" rx="6" ry="4" fill="#7a4e2a" opacity="0.24"/><ellipse cx="132" cy="150" rx="6" ry="6" fill="#5e3c20" opacity="0.48"/><ellipse cx="381" cy="151" rx="7" ry="9" fill="#7a4e2a" opacity="0.20"/><ellipse cx="90" cy="160" rx="10" ry="7" fill="#5a3a22" opacity="0.31"/><ellipse cx="148" cy="60" rx="7" ry="6" fill="#6a4426" opacity="0.42"/><ellipse cx="149" cy="64" rx="4" ry="7" fill="#6a4426" opacity="0.25"/><ellipse cx="307" cy="145" rx="6" ry="3" fill="#5e3c20" opacity="0.13"/><ellipse cx="64" cy="49" rx="3" ry="9" fill="#4a3020" opacity="0.22"/><ellipse cx="221" cy="130" rx="4" ry="4" fill="#8a5a30" opacity="0.14"/><ellipse cx="127" cy="4" rx="9" ry="4" fill="#8a5a30" opacity="0.33"/><ellipse cx="288" cy="81" rx="11" ry="5" fill="#4a3020" opacity="0.19"/><ellipse cx="137" cy="160" rx="9" ry="6" fill="#5e3c20" opacity="0.44"/><ellipse cx="29" cy="102" rx="3" ry="8" fill="#8a5a30" opacity="0.30"/><ellipse cx="2" cy="62" rx="4" ry="6" fill="#5e3c20" opacity="0.39"/><ellipse cx="212" cy="117" rx="10" ry="6" fill="#4a3020" opacity="0.28"/><ellipse cx="100" cy="27" rx="9" ry="8" fill="#7a4e2a" opacity="0.26"/><ellipse cx="172" cy="48" rx="12" ry="3" fill="#7a4e2a" opacity="0.42"/><ellipse cx="123" cy="26" rx="11" ry="9" fill="#4a3020" opacity="0.21"/><ellipse cx="195" cy="132" rx="6" ry="4" fill="#7a4e2a" opacity="0.27"/><ellipse cx="95" cy="118" rx="8" ry="5" fill="#6a4426" opacity="0.47"/><ellipse cx="163" cy="150" rx="11" ry="7" fill="#5e3c20" opacity="0.34"/><ellipse cx="105" cy="146" rx="11" ry="5" fill="#5e3c20" opacity="0.43"/><ellipse cx="37" cy="142" rx="7" ry="5" fill="#6a4426" opacity="0.44"/><ellipse cx="156" cy="87" rx="8" ry="5" fill="#5a3a22" opacity="0.40"/><ellipse cx="96" cy="2" rx="7" ry="6" fill="#6a4426" opacity="0.41"/><ellipse cx="245" cy="26" rx="4" ry="5" fill="#7a4e2a" opacity="0.28"/><ellipse cx="328" cy="22" rx="10" ry="7" fill="#5e3c20" opacity="0.22"/><ellipse cx="61" cy="127" rx="3" ry="9" fill="#6a4426" opacity="0.45"/><ellipse cx="33" cy="45" rx="9" ry="4" fill="#4a3020" opacity="0.41"/><ellipse cx="34" cy="124" rx="8" ry="7" fill="#5a3a22" opacity="0.44"/><ellipse cx="169" cy="151" rx="4" ry="9" fill="#6a4426" opacity="0.21"/><ellipse cx="167" cy="82" rx="12" ry="10" fill="#7a4e2a" opacity="0.29"/><ellipse cx="31" cy="50" rx="7" ry="8" fill="#7a4e2a" opacity="0.22"/><ellipse cx="57" cy="110" rx="9" ry="8" fill="#5a3a22" opacity="0.40"/><ellipse cx="5" cy="62" rx="9" ry="5" fill="#5e3c20" opacity="0.23"/><ellipse cx="313" cy="141" rx="11" ry="8" fill="#5e3c20" opacity="0.15"/><ellipse cx="254" cy="155" rx="10" ry="10" fill="#4a3020" opacity="0.22"/><ellipse cx="35" cy="31" rx="6" ry="4" fill="#7a4e2a" opacity="0.48"/><ellipse cx="228" cy="119" rx="6" ry="9" fill="#5a3a22" opacity="0.14"/><ellipse cx="252" cy="22" rx="9" ry="4" fill="#6a4426" opacity="0.19"/><ellipse cx="339" cy="98" rx="4" ry="5" fill="#6a4426" opacity="0.30"/><ellipse cx="176" cy="127" rx="6" ry="9" fill="#5e3c20" opacity="0.24"/><ellipse cx="83" cy="24" rx="9" ry="6" fill="#4a3020" opacity="0.39"/><path d="M294 0 Q290 80 300 165" stroke="#120c08" stroke-width="3.5" fill="none" opacity="0.75"/><path d="M99 0 Q100 80 94 165" stroke="#120c08" stroke-width="4.9" fill="none" opacity="0.75"/><path d="M76 0 Q75 80 78 165" stroke="#120c08" stroke-width="2.2" fill="none" opacity="0.75"/><path d="M83 0 Q78 80 75 165" stroke="#120c08" stroke-width="2.3" fill="none" opacity="0.75"/><path d="M289 0 Q290 80 285 165" stroke="#120c08" stroke-width="2.0" fill="none" opacity="0.75"/><path d="M95 0 Q95 80 96 165" stroke="#120c08" stroke-width="3.4" fill="none" opacity="0.75"/><path d="M80 0 Q92 80 84 165" stroke="#120c08" stroke-width="4.7" fill="none" opacity="0.75"/><path d="M379 0 Q368 80 382 165" stroke="#120c08" stroke-width="3.3" fill="none" opacity="0.75"/><path d="M315 0 Q314 80 313 165" stroke="#120c08" stroke-width="1.5" fill="none" opacity="0.75"/><path d="M135 0 Q144 80 130 165" stroke="#120c08" stroke-width="1.4" fill="none" opacity="0.75"/><path d="M358 0 Q363 80 352 165" stroke="#120c08" stroke-width="2.8" fill="none" opacity="0.75"/><path d="M231 0 Q220 80 239 165" stroke="#120c08" stroke-width="3.2" fill="none" opacity="0.75"/><path d="M68 0 Q78 80 65 165" stroke="#120c08" stroke-width="4.0" fill="none" opacity="0.75"/><path d="M59 0 Q47 80 63 165" stroke="#120c08" stroke-width="4.7" fill="none" opacity="0.75"/><path d="M147 0 Q144 80 141 165" stroke="#120c08" stroke-width="4.0" fill="none" opacity="0.75"/><path d="M242 0 Q241 80 240 165" stroke="#120c08" stroke-width="4.2" fill="none" opacity="0.75"/><path d="M317 0 Q329 80 310 165" stroke="#120c08" stroke-width="4.7" fill="none" opacity="0.75"/><path d="M306 0 Q316 80 309 165" stroke="#120c08" stroke-width="4.4" fill="none" opacity="0.75"/><path d="M259 0 Q251 80 258 165" stroke="#120c08" stroke-width="4.1" fill="none" opacity="0.75"/><path d="M13 0 Q4 80 12 165" stroke="#120c08" stroke-width="3.1" fill="none" opacity="0.75"/><path d="M136 0 Q130 80 145 165" stroke="#120c08" stroke-width="1.5" fill="none" opacity="0.75"/><path d="M22 0 Q27 80 27 165" stroke="#120c08" stroke-width="4.1" fill="none" opacity="0.75"/><path d="M163 0 Q154 80 160 165" stroke="#120c08" stroke-width="3.0" fill="none" opacity="0.75"/><path d="M363 0 Q365 80 361 165" stroke="#120c08" stroke-width="4.7" fill="none" opacity="0.75"/><path d="M114 0 Q113 80 122 165" stroke="#120c08" stroke-width="4.6" fill="none" opacity="0.75"/><path d="M280 0 Q270 80 272 165" stroke="#120c08" stroke-width="4.3" fill="none" opacity="0.75"/><path d="M380 0 Q381 80 379 165" stroke="#120c08" stroke-width="2.3" fill="none" opacity="0.75"/><path d="M10 0 Q5 80 12 165" stroke="#120c08" stroke-width="4.6" fill="none" opacity="0.75"/><path d="M175 0 Q171 80 181 165" stroke="#120c08" stroke-width="2.5" fill="none" opacity="0.75"/><path d="M357 0 Q351 80 364 165" stroke="#120c08" stroke-width="4.5" fill="none" opacity="0.75"/><path d="M98 0 Q109 80 98 165" stroke="#120c08" stroke-width="4.5" fill="none" opacity="0.75"/><path d="M43 0 Q44 80 46 165" stroke="#120c08" stroke-width="4.6" fill="none" opacity="0.75"/><path d="M381 0 Q393 80 385 165" stroke="#120c08" stroke-width="4.5" fill="none" opacity="0.75"/><path d="M353 0 Q354 80 354 165" stroke="#120c08" stroke-width="2.5" fill="none" opacity="0.75"/><path d="M66 0 Q65 80 59 165" stroke="#120c08" stroke-width="3.6" fill="none" opacity="0.75"/><path d="M29 0 Q20 80 37 165" stroke="#120c08" stroke-width="3.1" fill="none" opacity="0.75"/><path d="M233 0 Q228 80 238 165" stroke="#120c08" stroke-width="2.8" fill="none" opacity="0.75"/><path d="M10 0 Q8 80 9 165" stroke="#120c08" stroke-width="1.7" fill="none" opacity="0.75"/><path d="M215 0 Q219 80 209 165" stroke="#120c08" stroke-width="1.6" fill="none" opacity="0.75"/><path d="M124 0 Q120 80 121 165" stroke="#120c08" stroke-width="2.8" fill="none" opacity="0.75"/><ellipse cx="29" cy="31" rx="6" ry="6" fill="#9a9690" opacity="0.31"/><ellipse cx="172" cy="28" rx="2" ry="3" fill="#9a9690" opacity="0.51"/><ellipse cx="180" cy="1" rx="5" ry="5" fill="#9a9690" opacity="0.42"/><ellipse cx="107" cy="9" rx="7" ry="6" fill="#9a9690" opacity="0.45"/><ellipse cx="61" cy="33" rx="7" ry="3" fill="#9a9690" opacity="0.38"/><ellipse cx="176" cy="13" rx="7" ry="5" fill="#9a9690" opacity="0.37"/><ellipse cx="34" cy="34" rx="3" ry="5" fill="#9a9690" opacity="0.33"/><ellipse cx="144" cy="20" rx="3" ry="3" fill="#9a9690" opacity="0.49"/><ellipse cx="105" cy="5" rx="5" ry="6" fill="#9a9690" opacity="0.52"/><ellipse cx="36" cy="9" rx="3" ry="5" fill="#9a9690" opacity="0.39"/><ellipse cx="15" cy="37" rx="2" ry="6" fill="#9a9690" opacity="0.25"/><ellipse cx="117" cy="21" rx="4" ry="4" fill="#9a9690" opacity="0.30"/><ellipse cx="198" cy="8" rx="3" ry="5" fill="#9a9690" opacity="0.26"/><ellipse cx="158" cy="6" rx="6" ry="4" fill="#9a9690" opacity="0.52"/><ellipse cx="117" cy="0" rx="6" ry="2" fill="#9a9690" opacity="0.27"/><ellipse cx="155" cy="36" rx="4" ry="4" fill="#9a9690" opacity="0.26"/><ellipse cx="58" cy="33" rx="5" ry="6" fill="#9a9690" opacity="0.47"/><ellipse cx="106" cy="24" rx="6" ry="2" fill="#9a9690" opacity="0.38"/><ellipse cx="134" cy="22" rx="3" ry="5" fill="#9a9690" opacity="0.47"/><ellipse cx="52" cy="22" rx="6" ry="4" fill="#9a9690" opacity="0.33"/><ellipse cx="41" cy="39" rx="2" ry="4" fill="#9a9690" opacity="0.51"/><ellipse cx="65" cy="24" rx="5" ry="5" fill="#9a9690" opacity="0.40"/><ellipse cx="308" cy="35" rx="2" ry="2" fill="#9a9690" opacity="0.24"/><ellipse cx="301" cy="24" rx="5" ry="4" fill="#9a9690" opacity="0.21"/><ellipse cx="284" cy="28" rx="5" ry="4" fill="#9a9690" opacity="0.40"/><ellipse cx="311" cy="21" rx="5" ry="4" fill="#9a9690" opacity="0.29"/><ellipse cx="270" cy="21" rx="5" ry="4" fill="#9a9690" opacity="0.31"/><ellipse cx="275" cy="20" rx="5" ry="4" fill="#9a9690" opacity="0.44"/><ellipse cx="260" cy="31" rx="4" ry="2" fill="#9a9690" opacity="0.39"/><ellipse cx="292" cy="39" rx="2" ry="3" fill="#9a9690" opacity="0.33"/><ellipse cx="257" cy="23" rx="4" ry="5" fill="#9a9690" opacity="0.44"/><ellipse cx="304" cy="29" rx="6" ry="4" fill="#9a9690" opacity="0.27"/></g><rect x="200" y="0" width="205" height="165" fill="#0e0a08" opacity="0.35"/><path d="M0 155 Q100 150 200 156 L405 150 L405 166 L0 166Z" fill="#6a4a2a" opacity="0.3"/><path d="M0 166 H405 V171 H0Z" fill="#5a4a3c"/><path d="M0 200 Q200 192 405 200 L405 227 L0 227Z" fill="#4a3c36" opacity="0.5"/><path d="M91 78 L118 69.6 L152 68.7 L219.4 71.3 L263.3 91.5 L268.4 98.3 L312.3 111.8 L327.5 128.7 L328 132 L329 165.8 L320.7 172.6 L260 172.6 L200 185 L120 178 L82.7 181 L62.5 149 L61.6 115 L65.8 105Z" fill="url(#csb)"/><path d="M77.6 98.3 L104.7 76.3 L152 73.8 L165.4 100 L98 100Z" fill="#101214"/><path d="M152 73.8 L209.3 76.3 L263.3 98.3 L165.4 100Z" fill="#4a5054"/><path d="M136.7 92 L158 93 L160.4 106.7 L140 104Z" fill="#0c0c0c"/><path d="M119 100 L120 176 M100 113 L106 114 M121 116 L129 117" stroke="#9aa0a4" stroke-width="1" fill="none"/><path d="M66 130 Q90 118 100 140 Q104 162 120 166 L66 160Z" fill="#c8ccd0" opacity="0.5"/><path d="M165 130 Q185 116 205 132 L210 170 L165 168Z" fill="#c8ccd0" opacity="0.45"/><path d="M268 98 L312 112 L300 114 Q280 108 262 100Z" fill="#d8dcde"/><path d="M204.3 115.2 L256.6 122 L250 127 L208 122Z" fill="#1a1c1e"/><pattern id="mesh" width="4" height="4" patternUnits="userSpaceOnUse"><rect width="4" height="4" fill="#121212"/><circle cx="2" cy="2" r="1" fill="#2e2e2e"/></pattern><path d="M253.2 130.4 L315.7 130.4 L320.7 164 L253.2 165.8 L248 148Z" fill="url(#mesh)"/><path d="M217.8 143.9 L239.7 143.9 L236 165.8 L220 165.8Z" fill="#121212"/><path d="M200 168 L325 166 L322 174 L205 176Z" fill="#2a2a2a"/><path d="M100 166 L165 171 L165 175 L100 170Z" fill="#9a9ea2"/><ellipse cx="82.7" cy="157" rx="17.6" ry="25" fill="#0a0a0a"/><ellipse cx="84.2" cy="157" rx="12.0" ry="18.0" fill="#1a1a1c" stroke="#3a3a3c" stroke-width="0.6"/><path d="M84.2 157.0L95.8 157.0M84.2 157.0L93.6 167.3M84.2 157.0L87.8 173.6M84.2 157.0L80.6 173.6M84.2 157.0L74.8 167.3M84.2 157.0L72.6 157.0M84.2 157.0L74.8 146.7M84.2 157.0L80.6 140.4M84.2 157.0L87.8 140.4M84.2 157.0L93.6 146.7" stroke="#3c3c40" stroke-width="0.9"/><ellipse cx="84.2" cy="157" rx="2" ry="2.6" fill="#2a2a2a"/><ellipse cx="183.2" cy="161.5" rx="20.6" ry="28" fill="#0a0a0a"/><ellipse cx="184.7" cy="161.5" rx="14.0" ry="20.2" fill="#1a1a1c" stroke="#3a3a3c" stroke-width="0.6"/><path d="M184.7 161.5L198.3 161.5M184.7 161.5L195.7 173.0M184.7 161.5L188.9 180.1M184.7 161.5L180.5 180.1M184.7 161.5L173.7 173.0M184.7 161.5L171.1 161.5M184.7 161.5L173.7 150.0M184.7 161.5L180.5 142.9M184.7 161.5L188.9 142.9M184.7 161.5L195.7 150.0" stroke="#3c3c40" stroke-width="0.9"/><ellipse cx="184.7" cy="161.5" rx="2" ry="2.6" fill="#2a2a2a"/><ellipse cx="288" cy="178" rx="24" ry="8" fill="#101010"/><path d="M70 184 Q200 178 330 184 L330 190 Q200 186 70 192Z" fill="#1e1a18" opacity="0.6"/></svg></div><div class="t st" style="left:28.5px;top:25px;font-size:22px;color:#ffffff;font-weight:400;font-style:normal;letter-spacing:0px;-webkit-text-stroke:0.8px #0e3440">Sous titre</div><div class="t st" style="left:226px;top:25px;font-size:22px;color:#ffffff;font-weight:400;font-style:normal;letter-spacing:0px;-webkit-text-stroke:0.8px #bde0f1">Sous titre</div><div class="t st" style="left:428px;top:25px;font-size:22px;color:#111111;font-weight:400;font-style:normal;letter-spacing:0px;-webkit-text-stroke:0.5px #fff">Sous titre</div><div class="t sm" style="left:29px;top:57px;font-size:8.5px;color:#e6ecec;font-weight:400;font-style:normal;letter-spacing:0px;">Cum sociis natoque penatibus et</div><div class="t sm" style="left:29px;top:67px;font-size:8.5px;color:#e6ecec;font-weight:400;font-style:normal;letter-spacing:0px;">magnis dis parturient montes,</div><div class="t sm" style="left:29px;top:77px;font-size:8.5px;color:#e6ecec;font-weight:400;font-style:normal;letter-spacing:0px;">nascetur ridiculus mus. Nullam</div><div class="t sm" style="left:29px;top:87px;font-size:8.5px;color:#e6ecec;font-weight:400;font-style:normal;letter-spacing:0px;">eleifend pharetra felis. Mauris</div><div class="t sm" style="left:29px;top:97px;font-size:8.5px;color:#e6ecec;font-weight:400;font-style:normal;letter-spacing:0px;">nibh velit, tristique ac, lacinia in,</div><div class="t sm" style="left:29px;top:107px;font-size:8.5px;color:#e6ecec;font-weight:400;font-style:normal;letter-spacing:0px;">scelerisque et, ante. Donec</div><div class="t sm" style="left:29px;top:125px;font-size:8.5px;color:#e6ecec;font-weight:400;font-style:normal;letter-spacing:0px;">Cum sociis natoque penatibus et</div><div class="t sm" style="left:29px;top:135px;font-size:8.5px;color:#e6ecec;font-weight:400;font-style:normal;letter-spacing:0px;">magnis dis parturient montes,</div><div class="t sm" style="left:29px;top:145px;font-size:8.5px;color:#e6ecec;font-weight:400;font-style:normal;letter-spacing:0px;">nascetur ridiculus mus. Nullam</div><div class="t sm" style="left:29px;top:155px;font-size:8.5px;color:#e6ecec;font-weight:400;font-style:normal;letter-spacing:0px;">eleifend pharetra felis. Mauris</div><div class="t sm" style="left:29px;top:165px;font-size:8.5px;color:#e6ecec;font-weight:400;font-style:normal;letter-spacing:0px;">nibh velit, tristique ac, lacinia in,</div><div class="t sm" style="left:29px;top:175px;font-size:8.5px;color:#e6ecec;font-weight:400;font-style:normal;letter-spacing:0px;">scelerisque et, ante. Donec</div><svg style="left:227.0px;top:68.5px" width="15.0" height="15.0" viewBox="0 0 15 15"><circle cx="7.5" cy="7.5" r="6.9" fill="none" stroke="#f4fbff" stroke-width="1"/><g transform="scale(0.3409)"><path d="M14 10.5 Q17 8.5 19.5 10 L21.5 15 Q22 16.5 20.5 17.5 L18.5 18.5 Q19 23 24.5 27 L26 25.5 Q27.5 24.3 29 25.2 L32.5 29 Q33.5 30.5 32 32 Q29 35.5 25 34.5 Q17 32 13.5 24 Q10.5 16 14 10.5Z" fill="#fff"/></g></svg><svg style="left:227.0px;top:118.5px" width="15.0" height="15.0" viewBox="0 0 15 15"><circle cx="7.5" cy="7.5" r="6.9" fill="none" stroke="#f4fbff" stroke-width="1"/><g transform="scale(0.3409)"><path d="M14 10.5 Q17 8.5 19.5 10 L21.5 15 Q22 16.5 20.5 17.5 L18.5 18.5 Q19 23 24.5 27 L26 25.5 Q27.5 24.3 29 25.2 L32.5 29 Q33.5 30.5 32 32 Q29 35.5 25 34.5 Q17 32 13.5 24 Q10.5 16 14 10.5Z" fill="#fff"/></g></svg><div class="t sm" style="left:228px;top:89px;font-size:8.5px;color:#ffffff;font-weight:400;font-style:normal;letter-spacing:0px;">Cum sociis natoque penatibus et</div><div class="t sm" style="left:228px;top:139px;font-size:8.5px;color:#ffffff;font-weight:400;font-style:normal;letter-spacing:0px;">Cum sociis natoque penatibus et</div><div class="a" style="left:429px;top:68.0px;width:15px;height:15px;background:#000"></div><div class="t sm" style="left:446.5px;top:70.0px;font-size:8.5px;color:#111;font-weight:400;font-style:normal;letter-spacing:0px;">Cum sociis natoque penatibus et</div><div class="a" style="left:429px;top:100.5px;width:15px;height:15px;background:#000"></div><div class="t sm" style="left:446.5px;top:102.5px;font-size:8.5px;color:#111;font-weight:400;font-style:normal;letter-spacing:0px;">Cum sociis natoque penatibus et</div><div class="a" style="left:429px;top:133.0px;width:15px;height:15px;background:#000"></div><div class="t sm" style="left:446.5px;top:135.0px;font-size:8.5px;color:#111;font-weight:400;font-style:normal;letter-spacing:0px;">Cum sociis natoque penatibus et</div><div class="a" style="left:429px;top:165.5px;width:15px;height:15px;background:#000"></div><div class="t sm" style="left:446.5px;top:167.5px;font-size:8.5px;color:#111;font-weight:400;font-style:normal;letter-spacing:0px;">Cum sociis natoque penatibus et</div><div class="t" style="left:427px;top:227.5px;font-size:28px;color:#bde0f1;font-weight:700;font-style:italic;letter-spacing:0px;">"</div><div class="t" style="left:558.5px;top:385.5px;font-size:28px;color:#bde0f1;font-weight:700;font-style:italic;letter-spacing:0px;">"</div><div class="t" style="left:428px;top:268.8px;font-size:32px;color:#bde0f1;font-weight:700;font-style:italic;letter-spacing:-0.5px;">Citation à</div><div class="t" style="left:428px;top:306.8px;font-size:32px;color:#bde0f1;font-weight:700;font-style:italic;letter-spacing:-0.5px;">Définir ici</div></div>
<!-- ===== LAYERS ===== -->
<div class="a" style="left:2043px;top:122px;width:5px;height:20px;background:#333;border-radius:3px"></div>
<div class="a" style="left:2056px;top:121px;width:47px;height:22px;background:#2e2e2e;border-radius:5px"></div>
<div class="t" style="left:2060px;top:126px;font-size:11.3px;color:#ececec">Calques</div>
<div class="a" style="left:2278px;top:122px;width:17px;height:17px;border:1.3px solid #cfcfcf;border-radius:4px"></div>
<svg style="left:2282px;top:127px" width="9" height="7" viewBox="0 0 9 7" fill="none" stroke="#e8e8e8" stroke-width="1.5"><path d="M1 1L4.5 5.5L8 1"/></svg>
<div class="a" style="left:2037px;top:147px;width:263px;height:33px;background:#383838"></div>
<div class="t" style="left:2048px;top:159px;font-size:10.5px;color:#8a8a8a">Opacité:</div>
<div class="a" style="left:2091px;top:152px;width:50px;height:22px;background:#333;border-radius:3px"></div>
<div class="t" style="left:2097px;top:158px;font-size:11px;color:#9a9a9a">100 %</div>
<svg style="left:2135px;top:161px" width="7" height="5" viewBox="0 0 7 5" fill="none" stroke="#999" stroke-width="1.1"><path d="M1 1L3.5 4L6 1"/></svg>
<div class="a" style="left:2151px;top:152px;width:98px;height:22px;background:#333;border-radius:3px"></div>
<div class="t" style="left:2157px;top:158px;font-size:11px;color:#9a9a9a">Normal</div>
<svg style="left:2236px;top:161px" width="7" height="5" viewBox="0 0 7 5" fill="none" stroke="#999" stroke-width="1.1"><path d="M1 1L3.5 4L6 1"/></svg>
<svg style="left:2255px;top:157px" width="11" height="11" viewBox="0 0 20 20"><path d="M8.5 1h3l.5 2.5 2 .9 2.2-1.4 2.1 2.1-1.4 2.2.9 2 2.5.5v3l-2.5.5-.9 2 1.4 2.2-2.1 2.1-2.2-1.4-2 .9-.5 2.5h-3l-.5-2.5-2-.9-2.2 1.4-2.1-2.1 1.4-2.2-.9-2L1 11.5v-3l2.5-.5.9-2L3 3.8 5.1 1.7l2.2 1.4 2-.9z" fill="#d8d8d8"/><circle cx="10" cy="10" r="3.2" fill="#383838"/></svg>
<svg style="left:2278px;top:156px" width="9" height="12" viewBox="0 0 9 12"><path d="M2 5.5V3.5Q2 1 4.5 1Q7 1 7 3.5V4" fill="none" stroke="#d8d8d8" stroke-width="1.2"/><rect x="0.5" y="5.5" width="8" height="6" fill="#d8d8d8"/></svg>
<div class="a" style="left:2037px;top:180px;width:263px;height:1px;background:#111"></div>
<div class="a" style="left:2037px;top:180.5px;width:263px;height:855px;background:#111"></div>
<div class="a" style="left:2037px;top:182px;width:16px;height:43px;background:#333"></div>
<div class="a" style="left:2054px;top:182px;width:44px;height:43px;background:#2b2b2b"></div>
<div class="a" style="left:2099px;top:182px;width:165px;height:43px;background:#333"></div>
<div class="a" style="left:2265px;top:182px;width:34px;height:43px;background:#333"></div>
<div class="t" style="left:2102px;top:198.7px;font-size:11.7px;color:#b4b4b4">Groupe</div>
<svg style="left:2275px;top:198.5px" width="15" height="10" viewBox="0 0 15 10"><path d="M0.5 5 Q7.5 -3.2 14.5 5 Q7.5 13.2 0.5 5Z" fill="#d8d8d8"/><circle cx="7.5" cy="5" r="1.9" fill="#333"/></svg>
<svg style="left:2042px;top:199.5px" width="6" height="8" viewBox="0 0 6 8" fill="none" stroke="#9a9a9a" stroke-width="1.1"><path d="M1 1L5 4L1 7"/></svg>
<svg style="left:2054px;top:182px" width="44" height="43" viewBox="0 0 44 44"><circle cx="22" cy="22" r="20.5" fill="#262626" stroke="#f2f2f2" stroke-width="1.6"/><path d="M14 10.5 Q17 8.5 19.5 10 L21.5 15 Q22 16.5 20.5 17.5 L18.5 18.5 Q19 23 24.5 27 L26 25.5 Q27.5 24.3 29 25.2 L32.5 29 Q33.5 30.5 32 32 Q29 35.5 25 34.5 Q17 32 13.5 24 Q10.5 16 14 10.5Z" fill="#fff"/></svg>
<div class="a" style="left:2037px;top:226px;width:16px;height:44px;background:#333"></div>
<div class="a" style="left:2054px;top:226px;width:44px;height:44px;background:#2b2b2b"></div>
<div class="a" style="left:2099px;top:226px;width:165px;height:44px;background:#333"></div>
<div class="a" style="left:2265px;top:226px;width:34px;height:44px;background:#333"></div>
<div class="t" style="left:2102px;top:243.7px;font-size:11.7px;color:#b4b4b4">Groupe</div>
<svg style="left:2275px;top:243.5px" width="15" height="10" viewBox="0 0 15 10"><path d="M0.5 5 Q7.5 -3.2 14.5 5 Q7.5 13.2 0.5 5Z" fill="#d8d8d8"/><circle cx="7.5" cy="5" r="1.9" fill="#333"/></svg>
<svg style="left:2042px;top:244.5px" width="6" height="8" viewBox="0 0 6 8" fill="none" stroke="#9a9a9a" stroke-width="1.1"><path d="M1 1L5 4L1 7"/></svg>
<svg style="left:2054px;top:226px" width="44" height="44" viewBox="0 0 44 44"><circle cx="22" cy="22" r="20.5" fill="#262626" stroke="#f2f2f2" stroke-width="1.6"/><path d="M14 10.5 Q17 8.5 19.5 10 L21.5 15 Q22 16.5 20.5 17.5 L18.5 18.5 Q19 23 24.5 27 L26 25.5 Q27.5 24.3 29 25.2 L32.5 29 Q33.5 30.5 32 32 Q29 35.5 25 34.5 Q17 32 13.5 24 Q10.5 16 14 10.5Z" fill="#fff"/></svg>
<div class="a" style="left:2037px;top:271px;width:16px;height:44px;background:#333"></div>
<div class="a" style="left:2054px;top:271px;width:44px;height:44px;background:#2b2b2b"></div>
<div class="a" style="left:2099px;top:271px;width:165px;height:44px;background:#333"></div>
<div class="a" style="left:2265px;top:271px;width:34px;height:44px;background:#333"></div>
<div class="t" style="left:2102px;top:288.6px;font-size:11.7px;color:#b4b4b4">Groupe</div>
<svg style="left:2275px;top:288.4px" width="15" height="10" viewBox="0 0 15 10"><path d="M0.5 5 Q7.5 -3.2 14.5 5 Q7.5 13.2 0.5 5Z" fill="#d8d8d8"/><circle cx="7.5" cy="5" r="1.9" fill="#333"/></svg>
<svg style="left:2042px;top:289.4px" width="6" height="8" viewBox="0 0 6 8" fill="none" stroke="#9a9a9a" stroke-width="1.1"><path d="M1 1L5 4L1 7"/></svg>
<svg style="left:2054px;top:271px" width="44" height="44" viewBox="0 0 44 44"><circle cx="22" cy="22" r="20.5" fill="#262626" stroke="#f2f2f2" stroke-width="1.6"/><path d="M14 10.5 Q17 8.5 19.5 10 L21.5 15 Q22 16.5 20.5 17.5 L18.5 18.5 Q19 23 24.5 27 L26 25.5 Q27.5 24.3 29 25.2 L32.5 29 Q33.5 30.5 32 32 Q29 35.5 25 34.5 Q17 32 13.5 24 Q10.5 16 14 10.5Z" fill="#fff"/></svg>
<div class="a" style="left:2037px;top:316px;width:16px;height:44px;background:#333"></div>
<div class="a" style="left:2054px;top:316px;width:44px;height:44px;background:#2b2b2b"></div>
<div class="a" style="left:2099px;top:316px;width:165px;height:44px;background:#333"></div>
<div class="a" style="left:2265px;top:316px;width:34px;height:44px;background:#333"></div>
<div class="t" style="left:2102px;top:333.6px;font-size:11.7px;color:#b4b4b4">Groupe</div>
<svg style="left:2275px;top:333.4px" width="15" height="10" viewBox="0 0 15 10"><path d="M0.5 5 Q7.5 -3.2 14.5 5 Q7.5 13.2 0.5 5Z" fill="#d8d8d8"/><circle cx="7.5" cy="5" r="1.9" fill="#333"/></svg>
<svg style="left:2042px;top:334.4px" width="6" height="8" viewBox="0 0 6 8" fill="none" stroke="#9a9a9a" stroke-width="1.1"><path d="M1 1L5 4L1 7"/></svg>
<svg style="left:2054px;top:316px" width="44" height="44" viewBox="0 0 44 44"><circle cx="22" cy="22" r="20.5" fill="#262626" stroke="#f2f2f2" stroke-width="1.6"/><path d="M14 10.5 Q17 8.5 19.5 10 L21.5 15 Q22 16.5 20.5 17.5 L18.5 18.5 Q19 23 24.5 27 L26 25.5 Q27.5 24.3 29 25.2 L32.5 29 Q33.5 30.5 32 32 Q29 35.5 25 34.5 Q17 32 13.5 24 Q10.5 16 14 10.5Z" fill="#fff"/></svg>
<div class="a" style="left:2037px;top:361px;width:16px;height:44px;background:#333"></div>
<div class="a" style="left:2054px;top:361px;width:44px;height:44px;background:#2b2b2b"></div>
<div class="a" style="left:2099px;top:361px;width:165px;height:44px;background:#333"></div>
<div class="a" style="left:2265px;top:361px;width:34px;height:44px;background:#333"></div>
<div class="t" style="left:2102px;top:378.6px;font-size:11.7px;color:#b4b4b4">Cum sociis natoque pe...</div>
<svg style="left:2275px;top:378.4px" width="15" height="10" viewBox="0 0 15 10"><path d="M0.5 5 Q7.5 -3.2 14.5 5 Q7.5 13.2 0.5 5Z" fill="#d8d8d8"/><circle cx="7.5" cy="5" r="1.9" fill="#333"/></svg>
<svg style="left:2041px;top:378.4px" width="9" height="10" viewBox="0 0 9 10" fill="none" stroke="#aaa" stroke-width="1"><rect x="0.5" y="0.5" width="8" height="9"/><path d="M2.5 3H6.5M4.5 3V7.5"/></svg>
<div class="a" style="left:2037px;top:406px;width:16px;height:44px;background:#333"></div>
<div class="a" style="left:2054px;top:406px;width:44px;height:44px;background:#2b2b2b"></div>
<div class="a" style="left:2099px;top:406px;width:165px;height:44px;background:#333"></div>
<div class="a" style="left:2265px;top:406px;width:34px;height:44px;background:#333"></div>
<div class="t" style="left:2102px;top:423.5px;font-size:11.7px;color:#b4b4b4">Groupe</div>
<svg style="left:2275px;top:423.3px" width="15" height="10" viewBox="0 0 15 10"><path d="M0.5 5 Q7.5 -3.2 14.5 5 Q7.5 13.2 0.5 5Z" fill="#d8d8d8"/><circle cx="7.5" cy="5" r="1.9" fill="#333"/></svg>
<svg style="left:2042px;top:424.3px" width="6" height="8" viewBox="0 0 6 8" fill="none" stroke="#9a9a9a" stroke-width="1.1"><path d="M1 1L5 4L1 7"/></svg>
<div class="a" style="left:2054px;top:424px;width:42px;height:2px;background:#5c5c5c"></div>
<div class="a" style="left:2054px;top:428px;width:42px;height:2px;background:#5c5c5c"></div>
<div class="a" style="left:2037px;top:451px;width:16px;height:44px;background:#333"></div>
<div class="a" style="left:2054px;top:451px;width:44px;height:44px;background:#2b2b2b"></div>
<div class="a" style="left:2099px;top:451px;width:165px;height:44px;background:#333"></div>
<div class="a" style="left:2265px;top:451px;width:34px;height:44px;background:#333"></div>
<div class="t" style="left:2102px;top:468.5px;font-size:11.7px;color:#b4b4b4">Groupe</div>
<svg style="left:2275px;top:468.3px" width="15" height="10" viewBox="0 0 15 10"><path d="M0.5 5 Q7.5 -3.2 14.5 5 Q7.5 13.2 0.5 5Z" fill="#d8d8d8"/><circle cx="7.5" cy="5" r="1.9" fill="#333"/></svg>
<svg style="left:2042px;top:469.3px" width="6" height="8" viewBox="0 0 6 8" fill="none" stroke="#9a9a9a" stroke-width="1.1"><path d="M1 1L5 4L1 7"/></svg>
<div class="a" style="left:2054px;top:472px;width:42px;height:2px;background:#5c5c5c"></div>
<div class="a" style="left:2037px;top:496px;width:16px;height:44px;background:#333"></div>
<div class="a" style="left:2054px;top:496px;width:44px;height:44px;background:#2b2b2b"></div>
<div class="a" style="left:2099px;top:496px;width:165px;height:44px;background:#333"></div>
<div class="a" style="left:2265px;top:496px;width:34px;height:44px;background:#333"></div>
<div class="t" style="left:2102px;top:513.5px;font-size:11.7px;color:#b4b4b4">Groupe</div>
<svg style="left:2275px;top:513.3px" width="15" height="10" viewBox="0 0 15 10"><path d="M0.5 5 Q7.5 -3.2 14.5 5 Q7.5 13.2 0.5 5Z" fill="#d8d8d8"/><circle cx="7.5" cy="5" r="1.9" fill="#333"/></svg>
<svg style="left:2042px;top:514.3px" width="6" height="8" viewBox="0 0 6 8" fill="none" stroke="#9a9a9a" stroke-width="1.1"><path d="M1 1L5 4L1 7"/></svg>
<div class="a" style="left:2054px;top:517px;width:42px;height:2px;background:#5c5c5c"></div>
<div class="a" style="left:2037px;top:541px;width:16px;height:44px;background:#333"></div>
<div class="a" style="left:2054px;top:541px;width:44px;height:44px;background:#2b2b2b"></div>
<div class="a" style="left:2099px;top:541px;width:165px;height:44px;background:#333"></div>
<div class="a" style="left:2265px;top:541px;width:34px;height:44px;background:#333"></div>
<div class="t" style="left:2102px;top:558.4px;font-size:11.7px;color:#b4b4b4">Groupe</div>
<svg style="left:2275px;top:558.2px" width="15" height="10" viewBox="0 0 15 10"><path d="M0.5 5 Q7.5 -3.2 14.5 5 Q7.5 13.2 0.5 5Z" fill="#d8d8d8"/><circle cx="7.5" cy="5" r="1.9" fill="#333"/></svg>
<svg style="left:2042px;top:559.2px" width="6" height="8" viewBox="0 0 6 8" fill="none" stroke="#9a9a9a" stroke-width="1.1"><path d="M1 1L5 4L1 7"/></svg>
<div class="a" style="left:2054px;top:562px;width:42px;height:2px;background:#5c5c5c"></div>
<div class="a" style="left:2037px;top:586px;width:16px;height:44px;background:#333"></div>
<div class="a" style="left:2054px;top:586px;width:44px;height:44px;background:#2b2b2b"></div>
<div class="a" style="left:2099px;top:586px;width:165px;height:44px;background:#333"></div>
<div class="a" style="left:2265px;top:586px;width:34px;height:44px;background:#333"></div>
<div class="t" style="left:2102px;top:603.4px;font-size:11.7px;color:#b4b4b4">Sous titre</div>
<svg style="left:2275px;top:603.2px" width="15" height="10" viewBox="0 0 15 10"><path d="M0.5 5 Q7.5 -3.2 14.5 5 Q7.5 13.2 0.5 5Z" fill="#d8d8d8"/><circle cx="7.5" cy="5" r="1.9" fill="#333"/></svg>
<div class="t" style="left:2040px;top:602.7px;font-size:12px;color:#a8a8a8">A</div>
<div class="t" style="left:2056px;top:603.2px;font-size:9.5px;color:#f0f0f0;letter-spacing:-0.2px">Sous titre</div>
<div class="a" style="left:2037px;top:631px;width:16px;height:44px;background:#333"></div>
<div class="a" style="left:2054px;top:631px;width:44px;height:44px;background:#2b2b2b"></div>
<div class="a" style="left:2099px;top:631px;width:165px;height:44px;background:#333"></div>
<div class="a" style="left:2265px;top:631px;width:34px;height:44px;background:#333"></div>
<div class="t" style="left:2102px;top:648.4px;font-size:11.7px;color:#b4b4b4">Sous titre</div>
<svg style="left:2275px;top:648.2px" width="15" height="10" viewBox="0 0 15 10"><path d="M0.5 5 Q7.5 -3.2 14.5 5 Q7.5 13.2 0.5 5Z" fill="#d8d8d8"/><circle cx="7.5" cy="5" r="1.9" fill="#333"/></svg>
<div class="t" style="left:2040px;top:647.7px;font-size:12px;color:#a8a8a8">A</div>
<div class="t" style="left:2056px;top:648.2px;font-size:9.5px;color:#2c2420">Sous titre</div>
<div class="a" style="left:2037px;top:676px;width:16px;height:44px;background:#333"></div>
<div class="a" style="left:2054px;top:676px;width:44px;height:44px;background:#2b2b2b"></div>
<div class="a" style="left:2099px;top:676px;width:165px;height:44px;background:#333"></div>
<div class="a" style="left:2265px;top:676px;width:34px;height:44px;background:#333"></div>
<div class="t" style="left:2102px;top:693.4px;font-size:11.7px;color:#b4b4b4">Cadre d’image</div>
<svg style="left:2275px;top:693.2px" width="15" height="10" viewBox="0 0 15 10"><path d="M0.5 5 Q7.5 -3.2 14.5 5 Q7.5 13.2 0.5 5Z" fill="#d8d8d8"/><circle cx="7.5" cy="5" r="1.9" fill="#333"/></svg>
<svg style="left:2041px;top:684.2px" width="9" height="22" viewBox="0 0 9 22" fill="none" stroke="#aaa" stroke-width="1"><rect x="0.5" y="0.5" width="8" height="8"/><path d="M0.5 0.5L8.5 8.5M8.5 0.5L0.5 8.5M2.5 14L6 16.5L2.5 19"/></svg>
<div class="a" style="left:2054px;top:676px;width:44px;height:44px;overflow:hidden;background:#eceae6"><svg style="left:0;top:0" width="44" height="44" viewBox="0 0 56 56" preserveAspectRatio="none"><rect width="56" height="56" fill="#ece8e4"/><ellipse cx="7" cy="3.5" rx="6" ry="3.5" fill="#e23a2c"/><rect x="15" y="0" width="19" height="8" rx="3" fill="#f2cc30"/><circle cx="40" cy="6" r="2" fill="#3a3040"/><ellipse cx="48" cy="4.5" rx="4" ry="3.5" fill="#2a2030"/><circle cx="54" cy="2" r="3" fill="#e04030"/><circle cx="2" cy="12" r="3" fill="#e04030"/><ellipse cx="9" cy="12" rx="4" ry="3" fill="#2a1c28"/><ellipse cx="17" cy="10" rx="3" ry="4" fill="#e0503a"/><rect x="0" y="17" width="14" height="19" rx="2" fill="#f0c420"/><path d="M2 28 L12 24" stroke="#8aa030" stroke-width="2"/><ellipse cx="5" cy="44" rx="6" ry="5" fill="#e84838"/><ellipse cx="15" cy="50" rx="5" ry="4" fill="#2a2028"/><circle cx="22" cy="48" r="2" fill="#3a3048"/><ellipse cx="26" cy="53" rx="6" ry="4" fill="#e86a60"/><circle cx="33" cy="52" r="2.5" fill="#2a2028"/><circle cx="37" cy="56" r="3" fill="#e04048"/><circle cx="48" cy="50" r="5" fill="#e23a2c"/><ellipse cx="54" cy="48" rx="4" ry="5" fill="#1e1e1e"/><path d="M44 56 L56 42" stroke="#1e1e1e" stroke-width="3"/><path d="M52 10 Q56 16 54 28 Q50 22 48 14Z" fill="#3a5a2a"/><ellipse cx="54" cy="20" rx="3" ry="4" fill="#d83028"/><path d="M54 32 Q50 40 54 44" stroke="#2a3a2a" stroke-width="3" fill="none"/><circle cx="34" cy="30" r="19.5" fill="#f4eef0"/><circle cx="34" cy="30" r="17.5" fill="#8a3050"/><circle cx="21.4" cy="37.2" r="2.6" fill="#2a1828"/><circle cx="20.1" cy="34.0" r="2.6" fill="#2a1828"/><circle cx="19.5" cy="30.5" r="2.6" fill="#2a1828"/><circle cx="19.8" cy="27.0" r="2.6" fill="#2a1828"/><circle cx="21.0" cy="23.6" r="2.6" fill="#2a1828"/><circle cx="22.9" cy="20.7" r="2.6" fill="#2a1828"/><circle cx="25.5" cy="18.3" r="2.6" fill="#2a1828"/><circle cx="28.6" cy="16.6" r="2.6" fill="#2a1828"/><circle cx="32.0" cy="15.6" r="2.6" fill="#2a1828"/><circle cx="26.3" cy="36.4" r="2.4" fill="#e03048"/><circle cx="26.3" cy="36.4" r="0.9" fill="#7a1a28"/><circle cx="24.8" cy="33.9" r="2.4" fill="#e03048"/><circle cx="24.8" cy="33.9" r="0.9" fill="#7a1a28"/><circle cx="24.1" cy="31.0" r="2.4" fill="#e03048"/><circle cx="24.1" cy="31.0" r="0.9" fill="#7a1a28"/><circle cx="24.2" cy="28.1" r="2.4" fill="#e03048"/><circle cx="24.2" cy="28.1" r="0.9" fill="#7a1a28"/><circle cx="25.2" cy="25.3" r="2.4" fill="#e03048"/><circle cx="25.2" cy="25.3" r="0.9" fill="#7a1a28"/><circle cx="26.9" cy="22.9" r="2.4" fill="#e03048"/><circle cx="26.9" cy="22.9" r="0.9" fill="#7a1a28"/><circle cx="29.3" cy="21.2" r="2.4" fill="#e03048"/><circle cx="29.3" cy="21.2" r="0.9" fill="#7a1a28"/><circle cx="32.1" cy="20.2" r="2.4" fill="#e03048"/><circle cx="32.1" cy="20.2" r="0.9" fill="#7a1a28"/><path d="M27 42 Q30 28 44 17" stroke="#4a9a3a" stroke-width="3" fill="none"/><path d="M33 30 L46 24 L50 34 L42 44 L34 42Z" fill="#f2c040"/><path d="M38 34 L46 32 L45 40 L39 42Z" fill="#f8e040"/><circle cx="40" cy="28" r="2.5" fill="#f0a060"/><circle cx="44" cy="30" r="2" fill="#f4b070"/><path d="M40 44 Q48 44 50 36 Q50 46 42 47Z" fill="#e8508a"/></svg></div>
<div class="a" style="left:2037px;top:721px;width:16px;height:44px;background:#333"></div>
<div class="a" style="left:2054px;top:721px;width:44px;height:44px;background:#2b2b2b"></div>
<div class="a" style="left:2099px;top:721px;width:165px;height:44px;background:#333"></div>
<div class="a" style="left:2265px;top:721px;width:34px;height:44px;background:#333"></div>
<div class="t" style="left:2102px;top:738.3px;font-size:11.7px;color:#b4b4b4">"¶Citation à¶Définir ici¶</div>
<svg style="left:2275px;top:738.1px" width="15" height="10" viewBox="0 0 15 10"><path d="M0.5 5 Q7.5 -3.2 14.5 5 Q7.5 13.2 0.5 5Z" fill="#d8d8d8"/><circle cx="7.5" cy="5" r="1.9" fill="#333"/></svg>
<div class="t" style="left:2040px;top:737.6px;font-size:12px;color:#a8a8a8">A</div>
<div class="t" style="left:2060px;top:733.1px;font-size:8px;color:#2c2420;font-weight:700;font-style:italic;line-height:1.1">Citation à<br>Définir ici</div>
<div class="a" style="left:2037px;top:766px;width:16px;height:44px;background:#333"></div>
<div class="a" style="left:2054px;top:766px;width:44px;height:44px;background:#2b2b2b"></div>
<div class="a" style="left:2099px;top:766px;width:165px;height:44px;background:#333"></div>
<div class="a" style="left:2265px;top:766px;width:34px;height:44px;background:#333"></div>
<div class="t" style="left:2102px;top:783.3px;font-size:11.7px;color:#b4b4b4">TITRE</div>
<svg style="left:2275px;top:783.1px" width="15" height="10" viewBox="0 0 15 10"><path d="M0.5 5 Q7.5 -3.2 14.5 5 Q7.5 13.2 0.5 5Z" fill="#d8d8d8"/><circle cx="7.5" cy="5" r="1.9" fill="#333"/></svg>
<div class="t" style="left:2040px;top:782.6px;font-size:12px;color:#a8a8a8">A</div>
<div class="t" style="left:2054px;top:782.1px;font-size:13px;color:#3a2418;font-weight:700">TITRE</div>
<div class="a" style="left:2037px;top:811px;width:16px;height:44px;background:#333"></div>
<div class="a" style="left:2054px;top:811px;width:44px;height:44px;background:#2b2b2b"></div>
<div class="a" style="left:2099px;top:811px;width:165px;height:44px;background:#333"></div>
<div class="a" style="left:2265px;top:811px;width:34px;height:44px;background:#333"></div>
<div class="t" style="left:2102px;top:828.3px;font-size:11.7px;color:#b4b4b4">Rectangle</div>
<svg style="left:2275px;top:828.1px" width="15" height="10" viewBox="0 0 15 10"><path d="M0.5 5 Q7.5 -3.2 14.5 5 Q7.5 13.2 0.5 5Z" fill="#d8d8d8"/><circle cx="7.5" cy="5" r="1.9" fill="#333"/></svg>
<svg style="left:2040px;top:828.1px" width="11" height="11" viewBox="0 0 11 11" fill="#aaa"><rect x="0" y="0" width="4.5" height="4.5"/><path d="M8 0.5L10.5 4.5H5.5Z"/><circle cx="2.3" cy="8.5" r="2.3"/><path d="M8 6L10.5 8.5L8 11L5.5 8.5Z"/></svg>
<div class="a" style="left:2065px;top:811px;width:21px;height:44px;background:#0e3540"></div>
<svg style="left:2249px;top:827.6px" width="9" height="11" viewBox="0 0 9 11"><path d="M2 5V3.3Q2 1 4.5 1Q7 1 7 3.3V5" fill="none" stroke="#d8d8d8" stroke-width="1.2"/><rect x="0.5" y="5" width="8" height="6" fill="#d8d8d8"/></svg>
<div class="a" style="left:2037px;top:856px;width:16px;height:44px;background:#333"></div>
<div class="a" style="left:2054px;top:856px;width:44px;height:44px;background:#2b2b2b"></div>
<div class="a" style="left:2099px;top:856px;width:165px;height:44px;background:#333"></div>
<div class="a" style="left:2265px;top:856px;width:34px;height:44px;background:#333"></div>
<div class="t" style="left:2102px;top:873.2px;font-size:11.7px;color:#b4b4b4">Groupe</div>
<svg style="left:2275px;top:873.0px" width="15" height="10" viewBox="0 0 15 10"><path d="M0.5 5 Q7.5 -3.2 14.5 5 Q7.5 13.2 0.5 5Z" fill="#d8d8d8"/><circle cx="7.5" cy="5" r="1.9" fill="#333"/></svg>
<svg style="left:2042px;top:874.0px" width="6" height="8" viewBox="0 0 6 8" fill="none" stroke="#9a9a9a" stroke-width="1.1"><path d="M1 1L5 4L1 7"/></svg>
<svg style="left:2055px;top:860px" width="42.2" height="36.5" viewBox="0 0 66 57"><rect x="0.8" y="2.3" width="54" height="54" rx="11" fill="#9cc3c2" stroke="#1b3a4e" stroke-width="1.8"/><path d="M4 40 Q10 10 50 4 L12 4 Q2 4 2 14Z" fill="#abd0cf"/><path d="M7.5 15.4H43M7.5 24.4H38.5M7.5 33.8H34M7.5 42.9H35" stroke="#1b3a4e" stroke-width="1.9"/><path d="M49.8 9.8 L34.2 32.7 L34.7 42.5 L44 40 L58.6 15.9Z" fill="#a9cfd6" stroke="#1b3a4e" stroke-width="1.8" stroke-linejoin="round"/><path d="M49.8 9.8 L54.6 1 L65.2 7.8 L58.6 15.9Z" fill="#f1e6c4" stroke="#1b3a4e" stroke-width="1.8" stroke-linejoin="round"/></svg>
<div class="a" style="left:2037px;top:901px;width:16px;height:44px;background:#333"></div>
<div class="a" style="left:2054px;top:901px;width:44px;height:44px;background:#2b2b2b"></div>
<div class="a" style="left:2099px;top:901px;width:165px;height:44px;background:#333"></div>
<div class="a" style="left:2265px;top:901px;width:34px;height:44px;background:#333"></div>
<div class="t" style="left:2102px;top:918.2px;font-size:11.7px;color:#b4b4b4">Groupe</div>
<svg style="left:2275px;top:918.0px" width="15" height="10" viewBox="0 0 15 10"><path d="M0.5 5 Q7.5 -3.2 14.5 5 Q7.5 13.2 0.5 5Z" fill="#d8d8d8"/><circle cx="7.5" cy="5" r="1.9" fill="#333"/></svg>
<svg style="left:2042px;top:919.0px" width="6" height="8" viewBox="0 0 6 8" fill="none" stroke="#9a9a9a" stroke-width="1.1"><path d="M1 1L5 4L1 7"/></svg>
<svg style="left:2055px;top:905px" width="42.2" height="36.5" viewBox="0 0 66 57"><rect x="0.8" y="2.3" width="54" height="54" rx="11" fill="#9cc3c2" stroke="#1b3a4e" stroke-width="1.8"/><path d="M4 40 Q10 10 50 4 L12 4 Q2 4 2 14Z" fill="#abd0cf"/><path d="M7.5 15.4H43M7.5 24.4H38.5M7.5 33.8H34M7.5 42.9H35" stroke="#1b3a4e" stroke-width="1.9"/><path d="M49.8 9.8 L34.2 32.7 L34.7 42.5 L44 40 L58.6 15.9Z" fill="#a9cfd6" stroke="#1b3a4e" stroke-width="1.8" stroke-linejoin="round"/><path d="M49.8 9.8 L54.6 1 L65.2 7.8 L58.6 15.9Z" fill="#f1e6c4" stroke="#1b3a4e" stroke-width="1.8" stroke-linejoin="round"/></svg>
<div class="a" style="left:2037px;top:946px;width:16px;height:44px;background:#333"></div>
<div class="a" style="left:2054px;top:946px;width:44px;height:44px;background:#2b2b2b"></div>
<div class="a" style="left:2099px;top:946px;width:165px;height:44px;background:#333"></div>
<div class="a" style="left:2265px;top:946px;width:34px;height:44px;background:#333"></div>
<div class="t" style="left:2102px;top:963.2px;font-size:11.7px;color:#b4b4b4">Rectangle</div>
<svg style="left:2275px;top:963.0px" width="15" height="10" viewBox="0 0 15 10"><path d="M0.5 5 Q7.5 -3.2 14.5 5 Q7.5 13.2 0.5 5Z" fill="#d8d8d8"/><circle cx="7.5" cy="5" r="1.9" fill="#333"/></svg>
<svg style="left:2040px;top:963.0px" width="11" height="11" viewBox="0 0 11 11" fill="#aaa"><rect x="0" y="0" width="4.5" height="4.5"/><path d="M8 0.5L10.5 4.5H5.5Z"/><circle cx="2.3" cy="8.5" r="2.3"/><path d="M8 6L10.5 8.5L8 11L5.5 8.5Z"/></svg>
<div class="a" style="left:2054px;top:946px;width:44px;height:44px;background:#bde0f1"></div>
<div class="a" style="left:2037px;top:991px;width:16px;height:44px;background:#333"></div>
<div class="a" style="left:2054px;top:991px;width:44px;height:44px;background:#2b2b2b"></div>
<div class="a" style="left:2099px;top:991px;width:165px;height:44px;background:#333"></div>
<div class="a" style="left:2265px;top:991px;width:34px;height:44px;background:#333"></div>
<div class="t" style="left:2102px;top:1008.1px;font-size:11.7px;color:#b4b4b4">Cadre d’image</div>
<svg style="left:2275px;top:1007.9px" width="15" height="10" viewBox="0 0 15 10"><path d="M0.5 5 Q7.5 -3.2 14.5 5 Q7.5 13.2 0.5 5Z" fill="#d8d8d8"/><circle cx="7.5" cy="5" r="1.9" fill="#333"/></svg>
<svg style="left:2041px;top:998.9px" width="9" height="22" viewBox="0 0 9 22" fill="none" stroke="#aaa" stroke-width="1"><rect x="0.5" y="0.5" width="8" height="8"/><path d="M0.5 0.5L8.5 8.5M8.5 0.5L0.5 8.5M2.5 14L6 16.5L2.5 19"/></svg>
<div class="a" style="left:2054px;top:991px;width:44px;height:44px;overflow:hidden"><svg style="left:0;top:0" width="44" height="44" viewBox="0 0 206 193" preserveAspectRatio="xMinYMin slice"><defs><linearGradient id="cfbg" x1="0" y1="0" x2="0" y2="1"><stop offset="0" stop-color="#2c2e2a"/><stop offset="0.28" stop-color="#34342e"/><stop offset="0.31" stop-color="#5e5040"/><stop offset="0.37" stop-color="#5a4c3e"/><stop offset="0.40" stop-color="#3a3632"/><stop offset="1" stop-color="#3c3936"/></linearGradient><linearGradient id="cfw" x1="0" y1="0" x2="0" y2="1"><stop offset="0" stop-color="#6a7272"/><stop offset="0.8" stop-color="#4a5252"/><stop offset="1" stop-color="#2a2e2e"/></linearGradient><linearGradient id="cfb" x1="0" y1="0" x2="1" y2="1"><stop offset="0" stop-color="#f2f5f5"/><stop offset="0.6" stop-color="#e6eaea"/><stop offset="1" stop-color="#c4c8c8"/></linearGradient></defs><rect width="206" height="193" fill="url(#cfbg)"/><path d="M52 33 Q60 20 76 6 L206 6 L206 193 L42 193 Q40 160 44 130 Q46 110 49 96 Q47 60 52 33Z" fill="url(#cfb)"/><path d="M78 6.5 L206 6.5 L206 30.4 L82 30.4 Q78 20 78 6.5Z" fill="url(#cfw)"/><path d="M62 0 L70 0 L80 28 L72 30Z" fill="#dfe3e3"/><path d="M33.2 16.3 L44.5 9.3 L58.6 8.6 L60 31.8 L54.3 34.6 L44.5 26.2 L34.6 22Z" fill="#121212"/><path d="M52 96 Q46 110 40 120 L37 193 L46 193 Q44 160 46 128 Q48 110 52 96Z" fill="#111"/><path d="M55.7 71.2 L62.8 81.1 L96.6 88.1 L116.3 92.4 L136 112 L124.8 110.7 L96.6 107.9 L68.4 105 L57.2 93.8Z" fill="#0e1010"/><path d="M62 82 L96 89 L114 93 L124 104 L96 101 L66 96Z" fill="#b8c0c2"/><path d="M116 92 Q150 88 206 87" stroke="#6a6e6e" stroke-width="0.8" fill="none"/><path d="M118 96 Q160 108 206 104 L206 117 Q170 122 140 114Z" fill="#9a9ea2"/><path d="M144.5 120.5 L206 117.7 L206 193 L124 193 L133 152Z" fill="#0c0c0e"/><path d="M62.8 140.3 L99.4 141.7 L88.1 179.7 L61.4 175.5Z" fill="#0a0a0a"/><path d="M51.5 177 Q90 182 124.8 186 L124.8 193 L52 193Z" fill="#1a1a1a"/></svg></div>
<div class="a" style="left:2037px;top:1336px;width:263px;height:32px;background:#383838"></div>
<svg style="left:2044px;top:1342px" width="17" height="17" viewBox="0 0 17 17" fill="none" stroke="#dcdcdc" stroke-width="1.3"><path d="M9 2H1.5V15.5H15V8"/><path d="M6 11L7 8L14 1L16 3L9 10Z"/></svg>
<svg style="left:2101px;top:1343px" width="15" height="15" viewBox="0 0 15 15"><rect width="15" height="15" fill="#dcdcdc"/><path d="M3 3H7M3 3V12M3 7.5H6M8.5 3L12.5 12M12.5 3L8.5 12" stroke="#333" stroke-width="1.6" fill="none"/></svg>
<svg style="left:2121px;top:1343px" width="15" height="15" viewBox="0 0 15 15"><rect width="15" height="15" fill="#dcdcdc"/><circle cx="7.5" cy="7.5" r="4.3" fill="#333"/></svg>
<svg style="left:2141px;top:1343px" width="15" height="15" viewBox="0 0 15 15" fill="#dcdcdc"><path d="M1 0H14V2.5L8.5 7.5L14 12.5V15H1V12.5L6.5 7.5L1 2.5Z"/></svg>
<svg style="left:2161px;top:1343px" width="15" height="15" viewBox="0 0 15 15"><circle cx="7.5" cy="7.5" r="7" fill="#dcdcdc"/><path d="M12.5 2.5 L2.5 12.5 A7 7 0 0 1 12.5 2.5Z" fill="#444"/><circle cx="7.5" cy="7.5" r="7" fill="none" stroke="#dcdcdc" stroke-width="1"/></svg>
<svg style="left:2213px;top:1343px" width="15" height="15" viewBox="0 0 15 15" fill="none" stroke="#dcdcdc" stroke-width="1.2"><rect x="0.6" y="0.6" width="13.8" height="13.8"/><circle cx="6" cy="6" r="3" fill="#dcdcdc"/><rect x="6" y="7" width="6" height="5" fill="#dcdcdc"/></svg>
<svg style="left:2233px;top:1344px" width="15" height="13" viewBox="0 0 15 13" fill="none" stroke="#dcdcdc" stroke-width="1.2"><path d="M0.6 2V12.4H14.4V3.5H7L5.5 1.2H0.6Z"/></svg>
<svg style="left:2253px;top:1343px" width="14" height="14" viewBox="0 0 14 14" fill="#dcdcdc"><path d="M0 0h3.5v3.5H0zM7 0h3.5v3.5H7zM3.5 3.5H7V7H3.5zM10.5 3.5H14V7h-3.5zM0 7h3.5v3.5H0zM7 7h3.5v3.5H7zM3.5 10.5H7V14H3.5zM10.5 10.5H14V14h-3.5z"/></svg>
<svg style="left:2275px;top:1342px" width="13" height="16" viewBox="0 0 13 16" fill="none" stroke="#dcdcdc" stroke-width="1.2"><path d="M1 3H12M4.5 3V1H8.5V3M2 3L2.8 15H10.2L11 3M5 5.5V13M8 5.5V13"/></svg>
<!-- ===== RIGHT PANEL ===== -->
<div class="a" style="left:2302px;top:116px;width:257px;height:31px;background:#1e1e1e"></div>
<div class="a" style="left:2308px;top:122px;width:5px;height:20px;background:#333;border-radius:3px"></div>
<div class="t" style="left:2325px;top:126px;font-size:11.3px;color:#c4c4c4">Couleur</div>
<div class="a" style="left:2369px;top:120px;width:66px;height:22px;background:#2e2e2e;border-radius:5px"></div>
<div class="t" style="left:2373px;top:126px;font-size:11.3px;color:#f0f0f0">Échantillons</div>
<div class="t" style="left:2441px;top:126px;font-size:11.3px;color:#c4c4c4">Trait</div>
<div class="a" style="left:2546px;top:122px;width:17px;height:17px;border:1.3px solid #cfcfcf;border-radius:4px"></div>
<svg style="left:2550px;top:127px" width="9" height="7" viewBox="0 0 9 7" fill="none" stroke="#e8e8e8" stroke-width="1.5"><path d="M1 1L4.5 5.5L8 1"/></svg>
<svg style="left:2310px;top:160px" width="50" height="45" viewBox="0 0 50 45"><circle cx="32.7" cy="30" r="12" fill="#0a0a0a" stroke="#555" stroke-width="1"/><circle cx="20" cy="17" r="13" fill="#3a2a20" stroke="#5c4c40" stroke-width="0.8"/><circle cx="20" cy="17" r="7" fill="#444" stroke="#7a6652" stroke-width="1.2"/><circle cx="14" cy="34.7" r="6" fill="#eee" stroke="#444" stroke-width="0.8"/><path d="M10 38.5L18 31" stroke="#e04050" stroke-width="1.6"/></svg>
<svg style="left:2342px;top:163px" width="14" height="14" viewBox="0 0 14 14" fill="none" stroke="#cfcfcf" stroke-width="1"><path d="M1 2 Q8 2 12 9 M1 2 L3.5 0.5 M1 2 L3 4 M12 9 L13 6.5 M12 9 L9.5 8"/></svg>
<svg style="left:2363px;top:161px" width="20" height="20" viewBox="0 0 20 20" fill="none" stroke="#d8d8d8" stroke-width="1.2"><path d="M2 18 L3 14 L11 6 L14 9 L6 17Z"/><path d="M10 5 L15 10 M12.5 7.5 L16 4 Q18 2 16.5 0.8 Q15 -0.5 13 1.5 L10 4.5" /></svg>
<div class="a" style="left:2385px;top:164px;width:14px;height:14px;border-radius:7px;background:#e42a22"></div>
<div class="t" style="left:2450px;top:174px;font-size:11.3px;color:#bdbdbd">Opacité:</div>
<div class="a" style="left:2497px;top:170px;width:60px;height:19px;background:#232323;border-radius:4px"></div>
<div class="t" style="left:2503px;top:175px;font-size:11.3px;color:#f0f0f0">100 %</div>
<svg style="left:2546px;top:177px" width="8" height="5" viewBox="0 0 8 5" fill="none" stroke="#ddd" stroke-width="1.2"><path d="M1 1L4 4L7 1"/></svg>
<div class="t" style="left:2312px;top:218px;font-size:11.3px;color:#c4c4c4">Récent:</div>
<div class="a" style="left:2359px;top:219px;width:144px;height:14px;background:#343434"></div>
<div class="a" style="left:2359px;top:219px;width:14px;height:14px;background:#0a0c0e"></div>
<div class="a" style="left:2373px;top:219px;width:14px;height:14px;background:#0a0c0e"></div>
<div class="a" style="left:2387px;top:219px;width:14px;height:14px;background:#ffffff"></div>
<div class="a" style="left:2401px;top:219px;width:14px;height:14px;background:#a8d8ee"></div>
<div class="a" style="left:2415px;top:219px;width:14px;height:14px;background:#0e3640"></div>
<div class="a" style="left:2429px;top:219px;width:14px;height:14px;background:#a8d8ee"></div>
<div class="a" style="left:2443px;top:219px;width:13px;height:14px;background:#e6e6e6"></div>
<div class="a" style="left:2313px;top:238px;width:141px;height:21px;background:#4a4a4a;border-radius:3px"></div>
<div class="t" style="left:2323px;top:244px;font-size:11.3px;color:#f0f0f0">PANTONE+ CMYK Co...</div>
<svg style="left:2443px;top:246px" width="8" height="5" viewBox="0 0 8 5" fill="none" stroke="#ddd" stroke-width="1.2"><path d="M1 1L4 4L7 1"/></svg>
<svg style="left:2458px;top:241px" width="14" height="14" viewBox="0 0 14 14" fill="#cfcfcf"><rect x="0" y="0" width="5.5" height="5.5" rx="1"/><rect x="0" y="8" width="5.5" height="5.5" rx="1"/><rect x="8" y="8" width="5.5" height="5.5" rx="1"/><path d="M10.7 0.5V5.5M8.2 3H13.2" stroke="#cfcfcf" stroke-width="1.2"/></svg>
<div class="a" style="left:2494px;top:241px;width:58px;height:15px;background:#111"></div>
<div class="a" style="left:2495px;top:242px;width:13px;height:13px;background:#fff"></div>
<svg style="left:2495px;top:242px" width="13" height="13" viewBox="0 0 13 13"><path d="M0 13L13 0" stroke="#d43a3a" stroke-width="1.3"/></svg>
<div class="a" style="left:2509px;top:242px;width:13px;height:13px;background:#2e2018"></div>
<div class="a" style="left:2523px;top:242px;width:13px;height:13px;background:#8f8f8f"></div>
<div class="a" style="left:2537px;top:242px;width:14px;height:13px;background:#fff"></div>
<div class="a" style="left:2312px;top:273px;width:217px;height:358px;background:#141414"></div>
<svg style="left:2312px;top:273px" width="217" height="358" viewBox="0 0 217 358"><rect x="1.5" y="1.2" width="16.6" height="16.5" fill="#f5d800"/><rect x="19.5" y="1.2" width="16.6" height="16.5" fill="#d92d8a"/><rect x="37.5" y="1.2" width="16.6" height="16.5" fill="#1e8fd6"/><rect x="55.5" y="1.2" width="16.6" height="16.5" fill="#2e2726"/><rect x="73.5" y="1.2" width="16.6" height="16.5" fill="#f4f2ea"/><rect x="91.5" y="1.2" width="16.6" height="16.5" fill="#f7f3e1"/><rect x="109.5" y="1.2" width="16.6" height="16.5" fill="#f8f0d0"/><rect x="127.5" y="1.2" width="16.6" height="16.5" fill="#f9edb8"/><rect x="145.5" y="1.2" width="16.6" height="16.5" fill="#fbe89a"/><rect x="163.5" y="1.2" width="16.6" height="16.5" fill="#fbe27a"/><rect x="181.5" y="1.2" width="16.6" height="16.5" fill="#fbdd4e"/><rect x="199.5" y="1.2" width="16.6" height="16.5" fill="#fde400"/><rect x="1.5" y="19.1" width="16.6" height="16.5" fill="#f3f0e6"/><rect x="19.5" y="19.1" width="16.6" height="16.5" fill="#f3ead0"/><rect x="37.5" y="19.1" width="16.6" height="16.5" fill="#f2e6bd"/><rect x="55.5" y="19.1" width="16.6" height="16.5" fill="#f1e2aa"/><rect x="73.5" y="19.1" width="16.6" height="16.5" fill="#eddb88"/><rect x="91.5" y="19.1" width="16.6" height="16.5" fill="#e8d36a"/><rect x="109.5" y="19.1" width="16.6" height="16.5" fill="#e3cb45"/><rect x="127.5" y="19.1" width="16.6" height="16.5" fill="#dec800"/><rect x="145.5" y="19.1" width="16.6" height="16.5" fill="#ece5c8"/><rect x="163.5" y="19.1" width="16.6" height="16.5" fill="#e6dcae"/><rect x="181.5" y="19.1" width="16.6" height="16.5" fill="#e2d59a"/><rect x="199.5" y="19.1" width="16.6" height="16.5" fill="#dfcd80"/><rect x="1.5" y="37.0" width="16.6" height="16.5" fill="#ddc952"/><rect x="19.5" y="37.0" width="16.6" height="16.5" fill="#d8c23a"/><rect x="37.5" y="37.0" width="16.6" height="16.5" fill="#d1b90a"/><rect x="55.5" y="37.0" width="16.6" height="16.5" fill="#cdb41b"/><rect x="73.5" y="37.0" width="16.6" height="16.5" fill="#e9e2c2"/><rect x="91.5" y="37.0" width="16.6" height="16.5" fill="#e2d9ac"/><rect x="109.5" y="37.0" width="16.6" height="16.5" fill="#dcd196"/><rect x="127.5" y="37.0" width="16.6" height="16.5" fill="#d7c880"/><rect x="145.5" y="37.0" width="16.6" height="16.5" fill="#cfbd63"/><rect x="163.5" y="37.0" width="16.6" height="16.5" fill="#c8b44a"/><rect x="181.5" y="37.0" width="16.6" height="16.5" fill="#bfab30"/><rect x="199.5" y="37.0" width="16.6" height="16.5" fill="#b8a32c"/><rect x="1.5" y="54.9" width="16.6" height="16.5" fill="#ece8d8"/><rect x="19.5" y="54.9" width="16.6" height="16.5" fill="#e3dcbd"/><rect x="37.5" y="54.9" width="16.6" height="16.5" fill="#d9d0a6"/><rect x="55.5" y="54.9" width="16.6" height="16.5" fill="#d0c690"/><rect x="73.5" y="54.9" width="16.6" height="16.5" fill="#c3b56a"/><rect x="91.5" y="54.9" width="16.6" height="16.5" fill="#b6a650"/><rect x="109.5" y="54.9" width="16.6" height="16.5" fill="#a89a38"/><rect x="127.5" y="54.9" width="16.6" height="16.5" fill="#9e9030"/><rect x="145.5" y="54.9" width="16.6" height="16.5" fill="#efede2"/><rect x="163.5" y="54.9" width="16.6" height="16.5" fill="#e5e0c6"/><rect x="181.5" y="54.9" width="16.6" height="16.5" fill="#d8d0a5"/><rect x="199.5" y="54.9" width="16.6" height="16.5" fill="#cbc28b"/><rect x="1.5" y="72.8" width="16.6" height="16.5" fill="#b8ad6d"/><rect x="19.5" y="72.8" width="16.6" height="16.5" fill="#a89c55"/><rect x="37.5" y="72.8" width="16.6" height="16.5" fill="#918635"/><rect x="55.5" y="72.8" width="16.6" height="16.5" fill="#7c7230"/><rect x="73.5" y="72.8" width="16.6" height="16.5" fill="#f7eed2"/><rect x="91.5" y="72.8" width="16.6" height="16.5" fill="#f8e9bd"/><rect x="109.5" y="72.8" width="16.6" height="16.5" fill="#f8e5a8"/><rect x="127.5" y="72.8" width="16.6" height="16.5" fill="#f8df91"/><rect x="145.5" y="72.8" width="16.6" height="16.5" fill="#fbdc7a"/><rect x="163.5" y="72.8" width="16.6" height="16.5" fill="#fcd865"/><rect x="181.5" y="72.8" width="16.6" height="16.5" fill="#fcd43a"/><rect x="199.5" y="72.8" width="16.6" height="16.5" fill="#fddd00"/><rect x="1.5" y="90.7" width="16.6" height="16.5" fill="#f1e2b0"/><rect x="19.5" y="90.7" width="16.6" height="16.5" fill="#efdca0"/><rect x="37.5" y="90.7" width="16.6" height="16.5" fill="#ecd58c"/><rect x="55.5" y="90.7" width="16.6" height="16.5" fill="#e8cf7a"/><rect x="73.5" y="90.7" width="16.6" height="16.5" fill="#e7cb6a"/><rect x="91.5" y="90.7" width="16.6" height="16.5" fill="#e2c450"/><rect x="109.5" y="90.7" width="16.6" height="16.5" fill="#dfbf33"/><rect x="127.5" y="90.7" width="16.6" height="16.5" fill="#dcba00"/><rect x="145.5" y="90.7" width="16.6" height="16.5" fill="#ebe0bb"/><rect x="163.5" y="90.7" width="16.6" height="16.5" fill="#e6d8a6"/><rect x="181.5" y="90.7" width="16.6" height="16.5" fill="#e2d095"/><rect x="199.5" y="90.7" width="16.6" height="16.5" fill="#dcc77e"/><rect x="1.5" y="108.6" width="16.6" height="16.5" fill="#dcc060"/><rect x="19.5" y="108.6" width="16.6" height="16.5" fill="#d6b84a"/><rect x="37.5" y="108.6" width="16.6" height="16.5" fill="#cfb038"/><rect x="55.5" y="108.6" width="16.6" height="16.5" fill="#caa926"/><rect x="73.5" y="108.6" width="16.6" height="16.5" fill="#dccb87"/><rect x="91.5" y="108.6" width="16.6" height="16.5" fill="#d4c176"/><rect x="109.5" y="108.6" width="16.6" height="16.5" fill="#ccb860"/><rect x="127.5" y="108.6" width="16.6" height="16.5" fill="#c4af50"/><rect x="145.5" y="108.6" width="16.6" height="16.5" fill="#bda440"/><rect x="163.5" y="108.6" width="16.6" height="16.5" fill="#b59a32"/><rect x="181.5" y="108.6" width="16.6" height="16.5" fill="#ad9428"/><rect x="199.5" y="108.6" width="16.6" height="16.5" fill="#a68d28"/><rect x="1.5" y="126.5" width="16.6" height="16.5" fill="#ddd3ab"/><rect x="19.5" y="126.5" width="16.6" height="16.5" fill="#d6cb98"/><rect x="37.5" y="126.5" width="16.6" height="16.5" fill="#cdc085"/><rect x="55.5" y="126.5" width="16.6" height="16.5" fill="#c6b575"/><rect x="73.5" y="126.5" width="16.6" height="16.5" fill="#bfae5e"/><rect x="91.5" y="126.5" width="16.6" height="16.5" fill="#b5a24a"/><rect x="109.5" y="126.5" width="16.6" height="16.5" fill="#a8963a"/><rect x="127.5" y="126.5" width="16.6" height="16.5" fill="#9e8c30"/><rect x="145.5" y="126.5" width="16.6" height="16.5" fill="#d9cfa8"/><rect x="163.5" y="126.5" width="16.6" height="16.5" fill="#cfc495"/><rect x="181.5" y="126.5" width="16.6" height="16.5" fill="#c6b985"/><rect x="199.5" y="126.5" width="16.6" height="16.5" fill="#b9aa70"/><rect x="1.5" y="144.4" width="16.6" height="16.5" fill="#a89a58"/><rect x="19.5" y="144.4" width="16.6" height="16.5" fill="#978848"/><rect x="37.5" y="144.4" width="16.6" height="16.5" fill="#8a7c36"/><rect x="55.5" y="144.4" width="16.6" height="16.5" fill="#776b2e"/><rect x="73.5" y="144.4" width="16.6" height="16.5" fill="#f6efdf"/><rect x="91.5" y="144.4" width="16.6" height="16.5" fill="#f6ead2"/><rect x="109.5" y="144.4" width="16.6" height="16.5" fill="#f6e2bb"/><rect x="127.5" y="144.4" width="16.6" height="16.5" fill="#f7dca6"/><rect x="145.5" y="144.4" width="16.6" height="16.5" fill="#f9d68e"/><rect x="163.5" y="144.4" width="16.6" height="16.5" fill="#fad07a"/><rect x="181.5" y="144.4" width="16.6" height="16.5" fill="#fbcb60"/><rect x="199.5" y="144.4" width="16.6" height="16.5" fill="#f9c828"/><rect x="1.5" y="162.3" width="16.6" height="16.5" fill="#f3e8cf"/><rect x="19.5" y="162.3" width="16.6" height="16.5" fill="#f1e2bb"/><rect x="37.5" y="162.3" width="16.6" height="16.5" fill="#eedaa6"/><rect x="55.5" y="162.3" width="16.6" height="16.5" fill="#ebd293"/><rect x="73.5" y="162.3" width="16.6" height="16.5" fill="#e6c977"/><rect x="91.5" y="162.3" width="16.6" height="16.5" fill="#e2c163"/><rect x="109.5" y="162.3" width="16.6" height="16.5" fill="#dcb74a"/><rect x="127.5" y="162.3" width="16.6" height="16.5" fill="#d8b220"/><rect x="145.5" y="162.3" width="16.6" height="16.5" fill="#efe3c6"/><rect x="163.5" y="162.3" width="16.6" height="16.5" fill="#eadbb1"/><rect x="181.5" y="162.3" width="16.6" height="16.5" fill="#e5d19a"/><rect x="199.5" y="162.3" width="16.6" height="16.5" fill="#dfc785"/><rect x="1.5" y="180.2" width="16.6" height="16.5" fill="#d8bd5e"/><rect x="19.5" y="180.2" width="16.6" height="16.5" fill="#d3b54b"/><rect x="37.5" y="180.2" width="16.6" height="16.5" fill="#ccab33"/><rect x="55.5" y="180.2" width="16.6" height="16.5" fill="#c6a31c"/><rect x="73.5" y="180.2" width="16.6" height="16.5" fill="#efe6d1"/><rect x="91.5" y="180.2" width="16.6" height="16.5" fill="#ebe0c3"/><rect x="109.5" y="180.2" width="16.6" height="16.5" fill="#e4d5ae"/><rect x="127.5" y="180.2" width="16.6" height="16.5" fill="#dcc99a"/><rect x="145.5" y="180.2" width="16.6" height="16.5" fill="#d0b86f"/><rect x="163.5" y="180.2" width="16.6" height="16.5" fill="#c7ab55"/><rect x="181.5" y="180.2" width="16.6" height="16.5" fill="#bb9c3b"/><rect x="199.5" y="180.2" width="16.6" height="16.5" fill="#b19130"/><rect x="1.5" y="198.1" width="16.6" height="16.5" fill="#e7dcc2"/><rect x="19.5" y="198.1" width="16.6" height="16.5" fill="#dfd1ad"/><rect x="37.5" y="198.1" width="16.6" height="16.5" fill="#d6c598"/><rect x="55.5" y="198.1" width="16.6" height="16.5" fill="#cdb985"/><rect x="73.5" y="198.1" width="16.6" height="16.5" fill="#bea360"/><rect x="91.5" y="198.1" width="16.6" height="16.5" fill="#b29550"/><rect x="109.5" y="198.1" width="16.6" height="16.5" fill="#a58a3a"/><rect x="127.5" y="198.1" width="16.6" height="16.5" fill="#988030"/><rect x="145.5" y="198.1" width="16.6" height="16.5" fill="#e5d9bf"/><rect x="163.5" y="198.1" width="16.6" height="16.5" fill="#d9cba8"/><rect x="181.5" y="198.1" width="16.6" height="16.5" fill="#cbb98c"/><rect x="199.5" y="198.1" width="16.6" height="16.5" fill="#bfab76"/><rect x="1.5" y="216.0" width="16.6" height="16.5" fill="#ab975a"/><rect x="19.5" y="216.0" width="16.6" height="16.5" fill="#9c8748"/><rect x="37.5" y="216.0" width="16.6" height="16.5" fill="#8b7432"/><rect x="55.5" y="216.0" width="16.6" height="16.5" fill="#7c682a"/><rect x="73.5" y="216.0" width="16.6" height="16.5" fill="#f9ebd3"/><rect x="91.5" y="216.0" width="16.6" height="16.5" fill="#f8e2bf"/><rect x="109.5" y="216.0" width="16.6" height="16.5" fill="#f8dba6"/><rect x="127.5" y="216.0" width="16.6" height="16.5" fill="#f6d590"/><rect x="145.5" y="216.0" width="16.6" height="16.5" fill="#f6cf7a"/><rect x="163.5" y="216.0" width="16.6" height="16.5" fill="#f7c562"/><rect x="181.5" y="216.0" width="16.6" height="16.5" fill="#f7bb40"/><rect x="199.5" y="216.0" width="16.6" height="16.5" fill="#f5b41a"/><rect x="1.5" y="233.9" width="16.6" height="16.5" fill="#f1e1c0"/><rect x="19.5" y="233.9" width="16.6" height="16.5" fill="#eed9ad"/><rect x="37.5" y="233.9" width="16.6" height="16.5" fill="#eacf96"/><rect x="55.5" y="233.9" width="16.6" height="16.5" fill="#e6c683"/><rect x="73.5" y="233.9" width="16.6" height="16.5" fill="#e2bc6a"/><rect x="91.5" y="233.9" width="16.6" height="16.5" fill="#ddb25a"/><rect x="109.5" y="233.9" width="16.6" height="16.5" fill="#d8a846"/><rect x="127.5" y="233.9" width="16.6" height="16.5" fill="#d4a01c"/><rect x="145.5" y="233.9" width="16.6" height="16.5" fill="#ebdcba"/><rect x="163.5" y="233.9" width="16.6" height="16.5" fill="#e5d2a6"/><rect x="181.5" y="233.9" width="16.6" height="16.5" fill="#ddc58e"/><rect x="199.5" y="233.9" width="16.6" height="16.5" fill="#d5b878"/><rect x="1.5" y="251.8" width="16.6" height="16.5" fill="#d4a858"/><rect x="19.5" y="251.8" width="16.6" height="16.5" fill="#c99a45"/><rect x="37.5" y="251.8" width="16.6" height="16.5" fill="#c3922e"/><rect x="55.5" y="251.8" width="16.6" height="16.5" fill="#bb8a24"/><rect x="73.5" y="251.8" width="16.6" height="16.5" fill="#ded0a3"/><rect x="91.5" y="251.8" width="16.6" height="16.5" fill="#d8c694"/><rect x="109.5" y="251.8" width="16.6" height="16.5" fill="#d1bb84"/><rect x="127.5" y="251.8" width="16.6" height="16.5" fill="#c9af72"/><rect x="145.5" y="251.8" width="16.6" height="16.5" fill="#c39f55"/><rect x="163.5" y="251.8" width="16.6" height="16.5" fill="#b89040"/><rect x="181.5" y="251.8" width="16.6" height="16.5" fill="#ad8430"/><rect x="199.5" y="251.8" width="16.6" height="16.5" fill="#a07828"/><rect x="1.5" y="269.7" width="16.6" height="16.5" fill="#e0d2b5"/><rect x="19.5" y="269.7" width="16.6" height="16.5" fill="#d9c6a0"/><rect x="37.5" y="269.7" width="16.6" height="16.5" fill="#d1b98b"/><rect x="55.5" y="269.7" width="16.6" height="16.5" fill="#c8ab76"/><rect x="73.5" y="269.7" width="16.6" height="16.5" fill="#bea055"/><rect x="91.5" y="269.7" width="16.6" height="16.5" fill="#b39140"/><rect x="109.5" y="269.7" width="16.6" height="16.5" fill="#a88530"/><rect x="127.5" y="269.7" width="16.6" height="16.5" fill="#9a7a2a"/><rect x="145.5" y="269.7" width="16.6" height="16.5" fill="#e2d4b3"/><rect x="163.5" y="269.7" width="16.6" height="16.5" fill="#d6c39b"/><rect x="181.5" y="269.7" width="16.6" height="16.5" fill="#c9b183"/><rect x="199.5" y="269.7" width="16.6" height="16.5" fill="#bda16e"/><rect x="1.5" y="287.6" width="16.6" height="16.5" fill="#b5934a"/><rect x="19.5" y="287.6" width="16.6" height="16.5" fill="#a8843a"/><rect x="37.5" y="287.6" width="16.6" height="16.5" fill="#927430"/><rect x="55.5" y="287.6" width="16.6" height="16.5" fill="#7e6428"/><rect x="73.5" y="287.6" width="16.6" height="16.5" fill="#e6e0d2"/><rect x="91.5" y="287.6" width="16.6" height="16.5" fill="#dcd5c4"/><rect x="109.5" y="287.6" width="16.6" height="16.5" fill="#d2c8b0"/><rect x="127.5" y="287.6" width="16.6" height="16.5" fill="#c6b99b"/><rect x="145.5" y="287.6" width="16.6" height="16.5" fill="#bcaa8c"/><rect x="163.5" y="287.6" width="16.6" height="16.5" fill="#ad9a7a"/><rect x="181.5" y="287.6" width="16.6" height="16.5" fill="#a08b6e"/><rect x="199.5" y="287.6" width="16.6" height="16.5" fill="#96806a"/><rect x="1.5" y="305.5" width="16.6" height="16.5" fill="#9c8566"/><rect x="19.5" y="305.5" width="16.6" height="16.5" fill="#8d785c"/><rect x="37.5" y="305.5" width="16.6" height="16.5" fill="#837058"/><rect x="55.5" y="305.5" width="16.6" height="16.5" fill="#776553"/><rect x="73.5" y="305.5" width="16.6" height="16.5" fill="#6f5e4c"/><rect x="91.5" y="305.5" width="16.6" height="16.5" fill="#655646"/><rect x="109.5" y="305.5" width="16.6" height="16.5" fill="#5c4f42"/><rect x="127.5" y="305.5" width="16.6" height="16.5" fill="#5a4c3e"/><rect x="145.5" y="305.5" width="16.6" height="16.5" fill="#f8efdd"/><rect x="163.5" y="305.5" width="16.6" height="16.5" fill="#f9e6c6"/><rect x="181.5" y="305.5" width="16.6" height="16.5" fill="#f8dcaa"/><rect x="199.5" y="305.5" width="16.6" height="16.5" fill="#f6d28f"/><rect x="1.5" y="323.4" width="16.6" height="16.5" fill="#f5c56a"/><rect x="19.5" y="323.4" width="16.6" height="16.5" fill="#f4bc56"/><rect x="37.5" y="323.4" width="16.6" height="16.5" fill="#f2b03a"/><rect x="55.5" y="323.4" width="16.6" height="16.5" fill="#efa81a"/><rect x="73.5" y="323.4" width="16.6" height="16.5" fill="#f4e0c0"/><rect x="91.5" y="323.4" width="16.6" height="16.5" fill="#f2d8ac"/><rect x="109.5" y="323.4" width="16.6" height="16.5" fill="#efcf98"/><rect x="127.5" y="323.4" width="16.6" height="16.5" fill="#ebc685"/><rect x="145.5" y="323.4" width="16.6" height="16.5" fill="#e6b96c"/><rect x="163.5" y="323.4" width="16.6" height="16.5" fill="#e3ae58"/><rect x="181.5" y="323.4" width="16.6" height="16.5" fill="#dfa443"/><rect x="199.5" y="323.4" width="16.6" height="16.5" fill="#d99830"/><rect x="1.5" y="341.3" width="16.6" height="16.5" fill="#efdfc6"/><rect x="19.5" y="341.3" width="16.6" height="16.5" fill="#eacfb0"/><rect x="37.5" y="341.3" width="16.6" height="16.5" fill="#e4c49b"/><rect x="55.5" y="341.3" width="16.6" height="16.5" fill="#dcb787"/><rect x="73.5" y="341.3" width="16.6" height="16.5" fill="#d4a96c"/><rect x="91.5" y="341.3" width="16.6" height="16.5" fill="#cc9c58"/><rect x="109.5" y="341.3" width="16.6" height="16.5" fill="#c48f45"/><rect x="127.5" y="341.3" width="16.6" height="16.5" fill="#bb8330"/><rect x="145.5" y="341.3" width="16.6" height="16.5" fill="#e6d4b5"/><rect x="163.5" y="341.3" width="16.6" height="16.5" fill="#decaa2"/><rect x="181.5" y="341.3" width="16.6" height="16.5" fill="#d5bc8c"/><rect x="199.5" y="341.3" width="16.6" height="16.5" fill="#cbad78"/><rect x="1.5" y="1.5" width="16.6" height="16.5" fill="none" stroke="#6a5a10" stroke-width="1.4"/></svg>
<div class="a" style="left:2550px;top:290px;width:3px;height:30px;background:#6a6a6a;border-radius:2px"></div>
<div class="a" style="left:2312px;top:635px;width:245px;height:20px;background:#252525;border-radius:4px"></div>
<svg style="left:2317px;top:639px" width="12" height="12" viewBox="0 0 12 12" fill="none" stroke="#cfcfcf" stroke-width="1.2"><circle cx="5" cy="5" r="4"/><path d="M8 8L11.5 11.5"/></svg>
<div class="t" style="left:2333px;top:640px;font-size:11.3px;color:#8c8c8c">Rechercher</div>
<div class="a" style="left:2302px;top:659px;width:257px;height:2px;background:#1a1a1a"></div>
<div class="a" style="left:2302px;top:661px;width:257px;height:31px;background:#1e1e1e"></div>
<div class="a" style="left:2308px;top:667px;width:5px;height:20px;background:#333;border-radius:3px"></div>
<div class="t" style="left:2325px;top:671px;font-size:11.3px;color:#c4c4c4">Caractère</div>
<div class="a" style="left:2377px;top:665px;width:63px;height:22px;background:#2e2e2e;border-radius:5px"></div>
<div class="t" style="left:2381px;top:671px;font-size:11.3px;color:#f0f0f0">Paragraphe</div>
<div class="a" style="left:2546px;top:667px;width:17px;height:17px;border:1.3px solid #cfcfcf;border-radius:4px"></div>
<svg style="left:2550px;top:672px" width="9" height="7" viewBox="0 0 9 7" fill="none" stroke="#e8e8e8" stroke-width="1.5"><path d="M1 1L4.5 5.5L8 1"/></svg>
<div class="a" style="left:2302px;top:692px;width:257px;height:57px;background:#383838"></div>
<div class="a" style="left:2309px;top:697px;width:250px;height:20px;background:#2e2e2e"></div>
<div class="a" style="left:2309px;top:697px;width:26px;height:20px;background:#1e1e1e;border:1px solid #4a4a4a;border-radius:4px"></div>
<svg style="left:2315px;top:700px" width="16" height="13" viewBox="0 0 16 13" fill="none" stroke="#e0e0e0" stroke-width="1.1"><path d="M2 2H14M2 5H10M2 8H14M2 11H10"/></svg>
<svg style="left:2343px;top:700px" width="16" height="13" viewBox="0 0 16 13" fill="none" stroke="#e0e0e0" stroke-width="1.1"><path d="M2 2H14M4 5H12M2 8H14M4 11H12"/></svg>
<svg style="left:2371px;top:700px" width="16" height="13" viewBox="0 0 16 13" fill="none" stroke="#e0e0e0" stroke-width="1.1"><path d="M2 2H14M6 5H14M2 8H14M6 11H14"/></svg>
<svg style="left:2399px;top:700px" width="16" height="13" viewBox="0 0 16 13" fill="none" stroke="#e0e0e0" stroke-width="1.1"><path d="M2 2H14M2 5H14M2 8H14M2 11H10"/></svg>
<svg style="left:2427px;top:700px" width="16" height="13" viewBox="0 0 16 13" fill="none" stroke="#e0e0e0" stroke-width="1.1"><path d="M2 2H14M2 5H14M2 8H14M4 11H12"/></svg>
<svg style="left:2455px;top:700px" width="16" height="13" viewBox="0 0 16 13" fill="none" stroke="#e0e0e0" stroke-width="1.1"><path d="M2 2H14M2 5H14M2 8H14M6 11H14"/></svg>
<svg style="left:2483px;top:700px" width="16" height="13" viewBox="0 0 16 13" fill="none" stroke="#e0e0e0" stroke-width="1.1"><path d="M2 2H14M2 5H14M2 8H14M2 11H14"/></svg>
<svg style="left:2511px;top:700px" width="16" height="13" viewBox="0 0 16 13" fill="none" stroke="#e0e0e0" stroke-width="1.1"><path d="M2 2H12M4 5H12M2 8H12M4 11H12M14.5 1V12"/></svg>
<svg style="left:2539px;top:700px" width="16" height="13" viewBox="0 0 16 13" fill="none" stroke="#e0e0e0" stroke-width="1.1"><path d="M2 2H12M2 5H10M2 8H12M2 11H10M14.5 1V12"/></svg>
<div class="a" style="left:2309px;top:724px;width:250px;height:18px;background:#4a4a4a;border-radius:3px 0 0 3px"></div>
<div class="t" style="left:2313px;top:729px;font-size:11.3px;color:#f0f0f0">Puce 1</div>
<div class="t" style="left:2527px;top:727px;font-size:12px;color:#bdbdbd;font-weight:700">¶</div>
<svg style="left:2534px;top:730px" width="6" height="9" viewBox="0 0 6 9" fill="none" stroke="#bdbdbd" stroke-width="1.1"><path d="M1 1Q5 3 3 7L1.5 5.5"/></svg>
<svg style="left:2550px;top:732px" width="8" height="5" viewBox="0 0 8 5" fill="none" stroke="#ddd" stroke-width="1.1"><path d="M1 1L4 4L7 1"/></svg>
<div class="a" style="left:2302px;top:749px;width:257px;height:179px;background:#252525"></div>
<svg style="left:2306px;top:754.5px" width="6" height="8" viewBox="0 0 6 8" fill="none" stroke="#e0e0e0" stroke-width="1.1"><path d="M1 1L5 4L1 7"/></svg>
<div class="t" style="left:2319px;top:754.9px;font-size:11.8px;color:#f0f0f0">Espacement</div>
<svg style="left:2306px;top:774.6px" width="6" height="8" viewBox="0 0 6 8" fill="none" stroke="#e0e0e0" stroke-width="1.1"><path d="M1 1L5 4L1 7"/></svg>
<div class="t" style="left:2319px;top:775.0px;font-size:11.8px;color:#f0f0f0">Taquets de tabulation</div>
<svg style="left:2306px;top:794.7px" width="6" height="8" viewBox="0 0 6 8" fill="none" stroke="#e0e0e0" stroke-width="1.1"><path d="M1 1L5 4L1 7"/></svg>
<div class="t" style="left:2319px;top:795.1px;font-size:11.8px;color:#f0f0f0">Justification</div>
<svg style="left:2306px;top:814.8px" width="6" height="8" viewBox="0 0 6 8" fill="none" stroke="#e0e0e0" stroke-width="1.1"><path d="M1 1L5 4L1 7"/></svg>
<div class="t" style="left:2319px;top:815.2px;font-size:11.8px;color:#f0f0f0">Options d'enchaînement</div>
<svg style="left:2306px;top:834.9px" width="6" height="8" viewBox="0 0 6 8" fill="none" stroke="#e0e0e0" stroke-width="1.1"><path d="M1 1L5 4L1 7"/></svg>
<div class="t" style="left:2319px;top:835.3px;font-size:11.8px;color:#f0f0f0">Puces et Numéros</div>
<svg style="left:2306px;top:855.0px" width="6" height="8" viewBox="0 0 6 8" fill="none" stroke="#e0e0e0" stroke-width="1.1"><path d="M1 1L5 4L1 7"/></svg>
<div class="t" style="left:2319px;top:855.4px;font-size:11.8px;color:#f0f0f0">Césure</div>
<svg style="left:2306px;top:875.1px" width="6" height="8" viewBox="0 0 6 8" fill="none" stroke="#e0e0e0" stroke-width="1.1"><path d="M1 1L5 4L1 7"/></svg>
<div class="t" style="left:2319px;top:875.5px;font-size:11.8px;color:#f0f0f0">Lettrines</div>
<svg style="left:2306px;top:895.2px" width="6" height="8" viewBox="0 0 6 8" fill="none" stroke="#e0e0e0" stroke-width="1.1"><path d="M1 1L5 4L1 7"/></svg>
<div class="t" style="left:2319px;top:895.6px;font-size:11.8px;color:#f0f0f0">Mots initiaux</div>
<svg style="left:2306px;top:915.3px" width="6" height="8" viewBox="0 0 6 8" fill="none" stroke="#e0e0e0" stroke-width="1.1"><path d="M1 1L5 4L1 7"/></svg>
<div class="t" style="left:2319px;top:915.7px;font-size:11.8px;color:#f0f0f0">Décorations</div>
<div class="a" style="left:2302px;top:1202px;width:257px;height:2px;background:#1a1a1a"></div>
<div class="a" style="left:2302px;top:1204px;width:257px;height:31px;background:#1e1e1e"></div>
<div class="a" style="left:2308px;top:1210px;width:5px;height:20px;background:#333;border-radius:3px"></div>
<div class="a" style="left:2321px;top:1208px;width:66px;height:22px;background:#2e2e2e;border-radius:5px"></div>
<div class="t" style="left:2325px;top:1214px;font-size:11.3px;color:#f0f0f0">Transformer</div>
<div class="t" style="left:2393px;top:1214px;font-size:11.3px;color:#c4c4c4">Navigateur</div>
<div class="t" style="left:2456px;top:1214px;font-size:11.3px;color:#c4c4c4">Historique</div>
<div class="a" style="left:2546px;top:1210px;width:17px;height:17px;border:1.3px solid #cfcfcf;border-radius:4px"></div>
<svg style="left:2550px;top:1215px" width="9" height="7" viewBox="0 0 9 7" fill="none" stroke="#e8e8e8" stroke-width="1.5"><path d="M1 1L4.5 5.5L8 1"/></svg>
<svg style="left:2319px;top:1269px" width="36" height="36" viewBox="0 0 36 36" fill="#6c6c6c"><path d="M0 0H7V3H14.5V0H21.5V3H29V0H36V7H33V14.5H36V21.5H33V29H36V36H29V33H21.5V36H14.5V33H7V36H0V29H3V21.5H0V14.5H3V7H0Z"/></svg>
<div class="t" style="left:2372px;top:1252px;font-size:11.3px;color:#7a7a7a">X:</div>
<div class="a" style="left:2385px;top:1247px;width:65px;height:20px;background:#333;border-radius:4px"></div>
<div class="t" style="left:2391px;top:1252px;font-size:11.3px;color:#9c9c9c">0 mm</div>
<div class="t" style="left:2462px;top:1252px;font-size:11.3px;color:#7a7a7a">L:</div>
<div class="a" style="left:2475px;top:1247px;width:65px;height:20px;background:#333;border-radius:4px"></div>
<div class="t" style="left:2481px;top:1252px;font-size:11.3px;color:#9c9c9c">0 mm</div>
<div class="t" style="left:2372px;top:1276px;font-size:11.3px;color:#7a7a7a">Y:</div>
<div class="a" style="left:2385px;top:1271px;width:65px;height:20px;background:#333;border-radius:4px"></div>
<div class="t" style="left:2391px;top:1276px;font-size:11.3px;color:#9c9c9c">0 mm</div>
<div class="t" style="left:2461px;top:1276px;font-size:11.3px;color:#7a7a7a">H:</div>
<div class="a" style="left:2475px;top:1271px;width:65px;height:20px;background:#333;border-radius:4px"></div>
<div class="t" style="left:2481px;top:1276px;font-size:11.3px;color:#9c9c9c">0 mm</div>
<div class="t" style="left:2372px;top:1307px;font-size:11.3px;color:#7a7a7a">R:</div>
<div class="a" style="left:2385px;top:1302px;width:65px;height:20px;background:#333;border-radius:4px"></div>
<div class="t" style="left:2391px;top:1307px;font-size:11.3px;color:#9c9c9c">0 °</div>
<svg style="left:2438px;top:1310px" width="8" height="5" viewBox="0 0 8 5" fill="none" stroke="#aaa" stroke-width="1.1"><path d="M1 1L4 4L7 1"/></svg>
<div class="t" style="left:2462px;top:1307px;font-size:11.3px;color:#7a7a7a">S:</div>
<div class="a" style="left:2475px;top:1302px;width:65px;height:20px;background:#333;border-radius:4px"></div>
<div class="t" style="left:2481px;top:1307px;font-size:11.3px;color:#9c9c9c">0 °</div>
<svg style="left:2528px;top:1310px" width="8" height="5" viewBox="0 0 8 5" fill="none" stroke="#aaa" stroke-width="1.1"><path d="M1 1L4 4L7 1"/></svg>
<svg style="left:2552px;top:1259px" width="7" height="21" viewBox="0 0 7 21" fill="none" stroke="#6a6a6a" stroke-width="1.2"><rect x="0.6" y="0.6" width="6" height="8" rx="1.5"/><rect x="0.6" y="12" width="6" height="8" rx="1.5"/></svg>
<svg style="left:2500px;top:1335px" width="17" height="15" viewBox="0 0 17 15"><rect x="0.5" y="0.5" width="16" height="14" fill="none" stroke="#555" stroke-dasharray="2 1.5"/><rect x="0" y="7" width="9" height="8" rx="2" fill="#5a5a5a"/></svg>
<svg style="left:2529px;top:1340px" width="8" height="5" viewBox="0 0 8 5" fill="none" stroke="#ddd" stroke-width="1.2"><path d="M1 1L4 4L7 1"/></svg>
<!-- ===== STATUS BAR ===== -->
<div class="a" style="left:0;top:1368px;width:2559px;height:23px;background:#3b3b3b"></div>
<div class="a" style="left:0;top:1391px;width:2559px;height:1px;background:#151515"></div>
<div class="a" style="left:0;top:1367px;width:2559px;height:1px;background:#1c1c1c"></div>
<svg style="left:4px;top:1376px" width="9" height="10" viewBox="0 0 9 10" fill="#8a8a8a"><rect x="0" y="0" width="1.3" height="10"/><path d="M9 0V10L2 5Z"/></svg>
<svg style="left:22px;top:1376px" width="8" height="10" viewBox="0 0 8 10" fill="#8a8a8a"><path d="M8 0V10L0 5Z"/></svg>
<div class="t" style="left:59px;top:1375px;font-size:11.3px;color:#e8e8e8">1 sur 2</div>
<svg style="left:120px;top:1376px" width="8" height="10" viewBox="0 0 8 10" fill="#e0e0e0"><path d="M0 0V10L8 5Z"/></svg>
<svg style="left:137px;top:1376px" width="10" height="10" viewBox="0 0 10 10" fill="#e0e0e0"><path d="M0 0V10L7 5Z"/><rect x="8.5" y="0" width="1.3" height="10"/></svg>
<svg style="left:156px;top:1374px" width="11" height="13" viewBox="0 0 11 13" fill="none" stroke="#9a9a9a" stroke-width="1"><rect x="0.5" y="0.5" width="10" height="12"/><path d="M2.5 3H8.5M2.5 5.5H8.5M2.5 8H8.5M2.5 10.5H8.5"/></svg>
<svg style="left:175px;top:1374px" width="14" height="13" viewBox="0 0 14 13" fill="none" stroke="#cfcfcf" stroke-width="1"><rect x="0.5" y="0.5" width="9" height="9"/><rect x="4.5" y="3.5" width="9" height="9"/><path d="M6.5 6H11.5M6.5 8H11.5M6.5 10H11.5"/></svg>
<svg style="left:201px;top:1373px" width="15" height="14" viewBox="0 0 15 14"><path d="M6.5 1 L13 13 L0.5 13Z" fill="#e0b030"/><path d="M6.5 5V9M6.5 10.5V11.8" stroke="#222" stroke-width="1.4"/><rect x="12" y="2" width="2" height="11" fill="#cfcfcf"/></svg>
<div class="t" style="left:235px;top:1375px;font-size:11.6px;letter-spacing:0.15px;color:#f2f2f2"><b>Glisser</b> <span style="color:#cfcfcf">pour utiliser un cadre de sélection.</span> <b>Cliquer</b> <span style="color:#cfcfcf">sur un objet pour le sélectionner.</span> <b>Clic droit</b> <span style="color:#cfcfcf">pendant la sélection pour activer/désactiver le mode Intersection.</span></div>
</body></html>
